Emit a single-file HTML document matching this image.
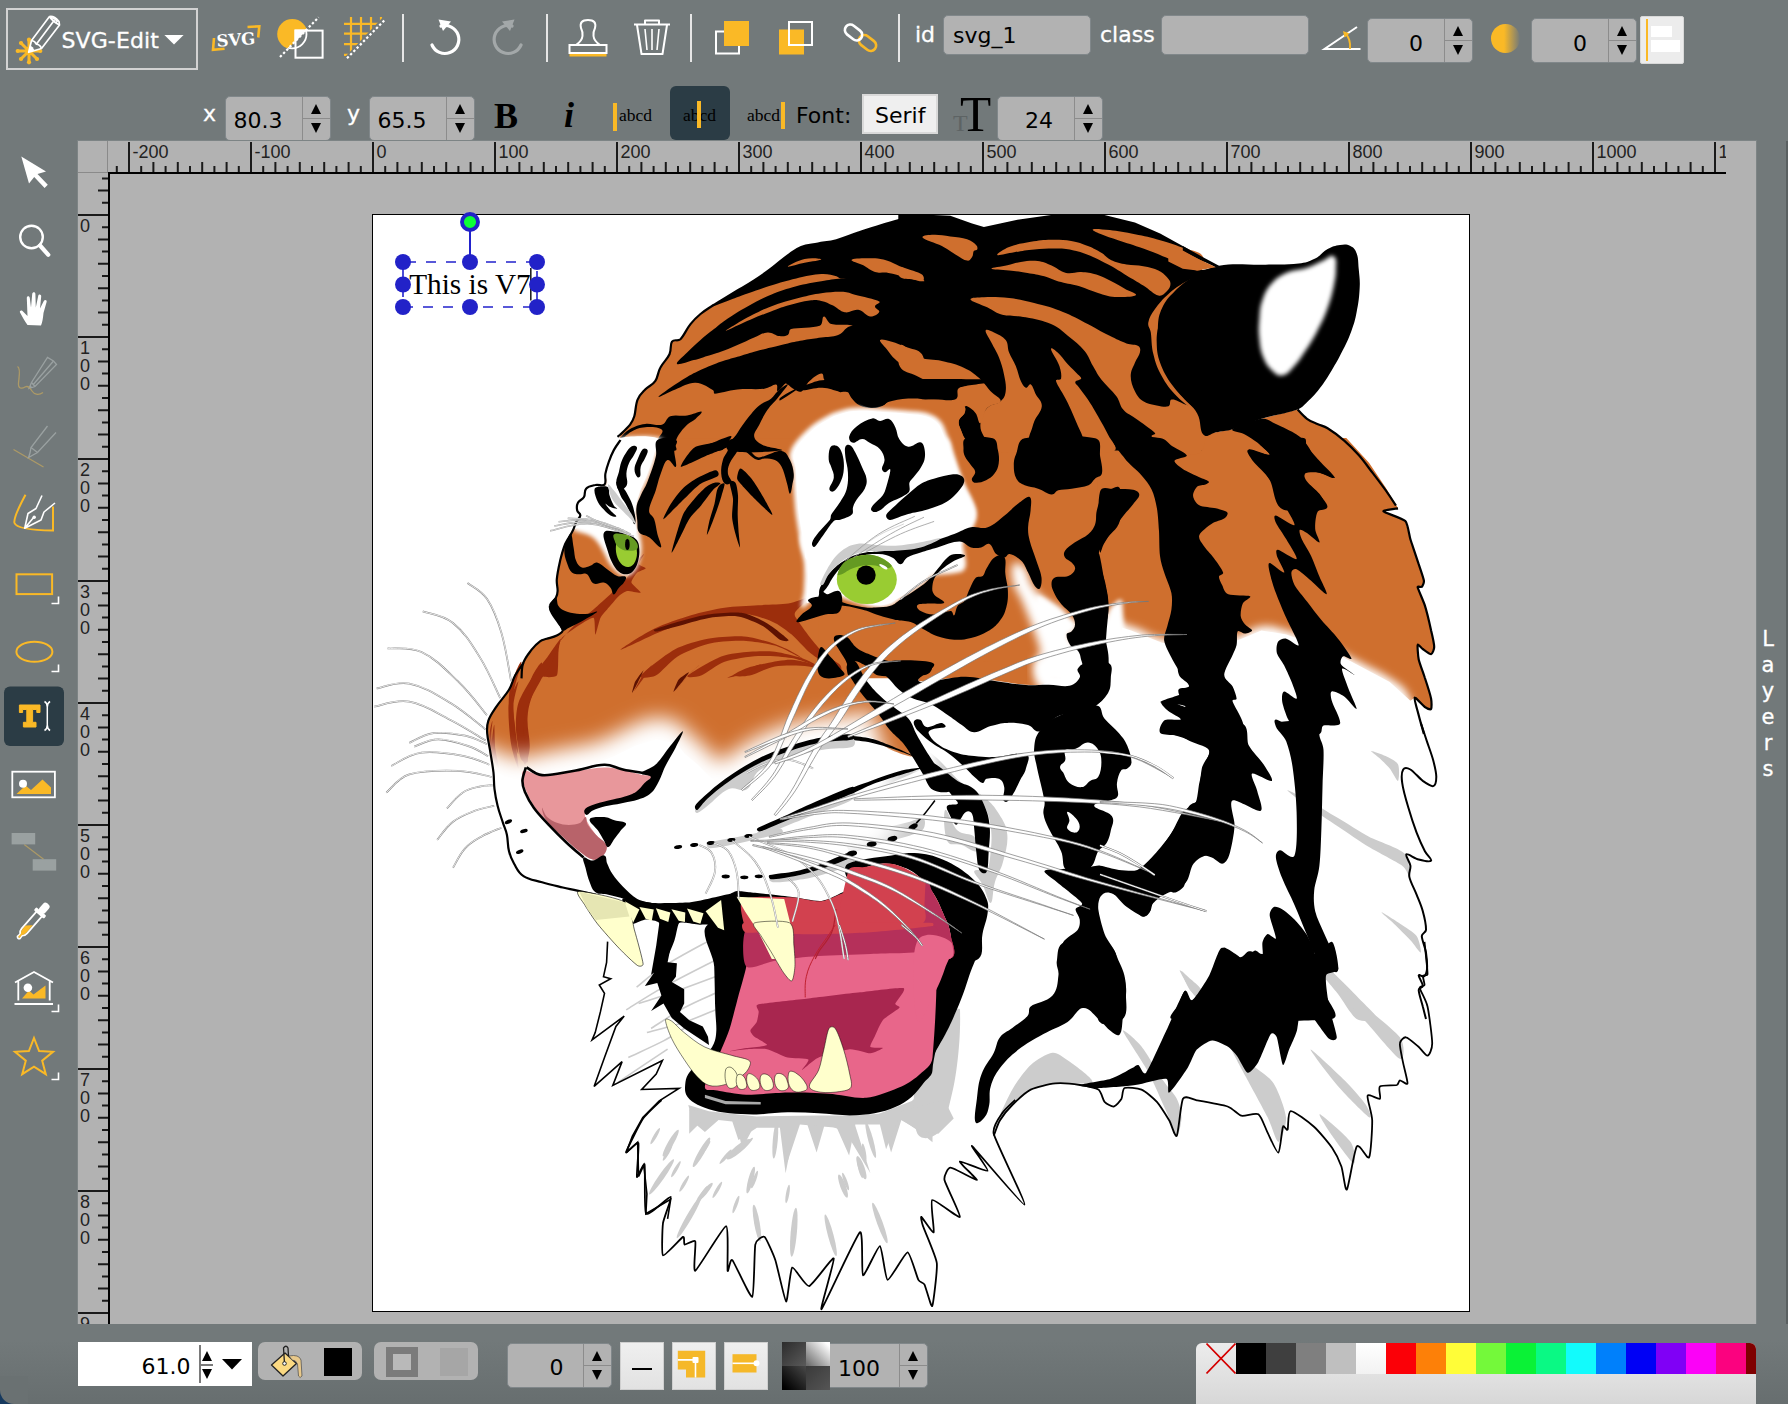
<!DOCTYPE html>
<html><head><meta charset="utf-8"><title>SVG-Edit</title>
<style>
html,body{margin:0;padding:0}
body{width:1788px;height:1404px;overflow:hidden;background:#72797a;font-family:"DejaVu Sans","Liberation Sans",sans-serif;}
#app{position:absolute;left:0;top:0;width:1788px;height:1404px;overflow:hidden;background:#72797a}
.abs{position:absolute}
.rt{font-family:"Liberation Sans",sans-serif;font-size:18px;fill:#222}
#work{position:absolute;left:78px;top:141px;width:1678px;height:1183px;background:#b2b2b2;box-shadow:0 0 0 1px #7d8485}
#corner{position:absolute;left:78px;top:141px;width:30px;height:32px;border-right:1px solid #8a8a8a;border-bottom:1px solid #8a8a8a;box-sizing:border-box}
#rlh{position:absolute;left:108px;top:172px;width:1618px;height:2px;background:#000}
#rlv{position:absolute;left:108px;top:172px;width:2px;height:1152px;background:#000}
#canvas{position:absolute;left:372px;top:214px;width:1098px;height:1098px;background:#fff;box-sizing:border-box;border:1px solid #000;overflow:hidden}
#rightstrip{position:absolute;left:1756px;top:141px;width:30px;height:1183px;background:#72797a;border-left:1px solid #7d8485;box-sizing:border-box}
#redge{position:absolute;left:1786px;top:141px;width:2px;height:1183px;background:#5a6061}
#layers{-webkit-text-stroke:0.3px #fff;position:absolute;left:1756px;top:626px;width:24px;text-align:center;color:#fff;font-size:21px;line-height:26px}
.lbl{position:absolute;-webkit-text-stroke:0.3px #fff;color:#fff;font-size:22px;line-height:26px;white-space:nowrap}
.inp{position:absolute;background:#b2b2b2;border-radius:5px;box-sizing:border-box;border:1px solid #80878a;color:#000;font-size:22px;white-space:nowrap}
.inp span{position:absolute}
.sep{position:absolute;width:2px;background:#e6e6e6;top:14px;height:48px}
.spin{position:absolute;right:0;top:0;bottom:0;width:27px;border-left:1.5px solid #8c8c8c}
.spin:before{content:"";position:absolute;left:0;right:0;top:50%;height:1.5px;margin-top:-1px;background:#8c8c8c}
.spin i{position:absolute;left:8px;width:0;height:0;border-left:5.5px solid transparent;border-right:5.5px solid transparent}
.spin i.u{top:7px;border-bottom:10px solid #000}
.spin i.d{bottom:7px;border-top:10px solid #000}
#pal{position:absolute;left:1196px;top:1343px;width:560px;height:70px;border-radius:6px;background:linear-gradient(#ececec,#d4d4d4);overflow:hidden}
.sw{position:absolute;top:0;height:31px}
.tx{font-family:"Liberation Serif",serif;font-size:17.5px;line-height:20px;color:#000}
.sb{top:1342px;width:44px;height:48px;box-sizing:border-box;background:linear-gradient(#efefef,#e2e2e2);border:1.5px solid #cfcfcf}

</style></head>
<body>
<div id="app">
<!-- main menu -->
<div class="abs" style="left:6px;top:8px;width:192px;height:62px;box-sizing:border-box;border:2px solid #d2d2d2"></div>
<svg class="abs" style="left:10px;top:12px" width="54" height="56" viewBox="10 12 54 56">
<g stroke="#fab926" stroke-width="3" stroke-linecap="round"><path d="M29 51L18 51M29 51L21.2 43.2M29 51L29 40M29 51L36.8 43.2M29 51L40 51M29 51L36.8 58.8M29 51L29 62M29 51L21.2 58.8"/></g>
<g fill="#fab926"><circle cx="40.3" cy="51.0" r="2.1"/><circle cx="37.0" cy="59.0" r="2.1"/><circle cx="29.0" cy="62.3" r="2.1"/><circle cx="21.0" cy="59.0" r="2.1"/><circle cx="17.7" cy="51.0" r="2.1"/><circle cx="21.0" cy="43.0" r="2.1"/><circle cx="29.0" cy="39.7" r="2.1"/><circle cx="37.0" cy="43.0" r="2.1"/></g>
<g fill="#72797a" stroke="#fff" stroke-width="1.7" stroke-linejoin="round"><path d="M28.7 52.3L31.5 40.5L49.5 16.5Q54 15.5 59 21.5L59.5 25L41.5 48.5Z"/><path d="M49.5 16.5Q52 21 59.5 25M31.5 40.5Q35 41 36.3 44.2Q40 44.5 41.5 48.5M36.3 44.2L54.5 20M51 17.5Q55 18 57.5 22"/></g>
<path d="M28.7 52.3L30.3 45.5Q33 46.5 34.5 50.5Z" fill="#fff"/>
</svg>
<div class="lbl" style="left:61.5px;top:28px;font-size:22px;letter-spacing:0.1px">SVG-Edit</div>
<svg class="abs" style="left:164px;top:35px" width="20" height="10"><path d="M0.4 0H19.6L10 9.6Z" fill="#fff"/></svg>
<!-- source icon -->
<svg class="abs" style="left:208px;top:20px" width="56" height="36" viewBox="208 20 56 36">
<path d="M247.5 27L259.3 26.3L258.2 37.5M214 38L213 49.8L224.6 48.7" fill="none" stroke="#fab926" stroke-width="2.6"/>
<text x="216.5" y="45.5" transform="rotate(-4 236 40)" font-family="DejaVu Serif,Liberation Serif,serif" font-weight="bold" font-size="16.5" fill="#fff">SVG</text>
</svg>
<!-- wireframe -->
<svg class="abs" style="left:274px;top:14px" width="54" height="48" viewBox="274 14 54 48">
<defs><clipPath id="wcp"><path d="M274 62L328 6.5V62Z"/></clipPath></defs>
<circle cx="292.3" cy="34.1" r="15.1" fill="#fab926"/>
<path d="M274 63.2L328 7.7V62Z" fill="#72797a"/>
<circle cx="292.3" cy="34.1" r="14.2" fill="none" stroke="#fff" stroke-width="1.8" clip-path="url(#wcp)"/>
<path d="M294.5 29.6H307.3L294.5 42.8Z" fill="#fff"/>
<rect x="295.5" y="30.6" width="27.1" height="27.1" fill="none" stroke="#fff" stroke-width="2"/>
<path d="M280 57L318.6 17.3" stroke="#fff" stroke-width="2.2" stroke-dasharray="2.4 2.2"/>
</svg>
<!-- grid -->
<svg class="abs" style="left:340px;top:14px" width="50" height="48" viewBox="340 14 50 48">
<defs><clipPath id="gcp"><path d="M340 14H386L344 58H340Z"/></clipPath></defs>
<g clip-path="url(#gcp)" stroke="#fab926" stroke-width="2.2" fill="none"><path d="M351 17V62M361 17V62M371 17V62M381 17V62M344 23.8H390M344 33.6H390M344 44.2H390M344 54.8H390"/></g>
<path d="M347 58.2L384.6 20.1" stroke="#fff" stroke-width="2.2" stroke-dasharray="2.4 2.2"/>
</svg>
<div class="sep" style="left:402px"></div><div class="sep" style="left:546px"></div><div class="sep" style="left:690px"></div><div class="sep" style="left:898px"></div>
<!-- undo -->
<svg class="abs" style="left:424px;top:16px" width="44" height="44" viewBox="424 16 44 44">
<path d="M441 26A14 14 0 1 1 432 45" fill="none" stroke="#fff" stroke-width="3.2" stroke-linecap="round"/>
<path d="M438.5 19.5L451 21.5L443 31Z" fill="#fff"/>
</svg>
<!-- redo -->
<svg class="abs" style="left:486px;top:16px" width="44" height="44" viewBox="486 16 44 44">
<path d="M512 26A14 14 0 1 0 521 45" fill="none" stroke="#a3a8a9" stroke-width="3.2" stroke-linecap="round"/>
<path d="M514.5 19.5L502 21.5L510 31Z" fill="#a3a8a9"/>
</svg>
<!-- clone/stamp -->
<svg class="abs" style="left:564px;top:16px" width="48" height="46" viewBox="564 16 48 46">
<path d="M569.5 54H606.5" stroke="#fab926" stroke-width="5"/>
<path d="M569.5 45H606.5V53H569.5Z" fill="#72797a" stroke="#fff" stroke-width="2"/>
<path d="M576 45Q582 41 582.5 36Q583 32 581 28Q579 20 588 20Q597 20 595 28Q593 32 593.5 36Q594 41 600 45" fill="none" stroke="#fff" stroke-width="2"/>
</svg>
<!-- delete -->
<svg class="abs" style="left:630px;top:16px" width="44" height="44" viewBox="630 16 44 44">
<path d="M634 24.5H670M645 24V20.5H659V24M637 25L641.5 54H662.5L667 25" fill="none" stroke="#fff" stroke-width="2" stroke-linejoin="round"/>
<path d="M645 29L647 50M652 29V50M659 29L657 50" stroke="#fff" stroke-width="1.6"/>
</svg>
<!-- move top -->
<svg class="abs" style="left:712px;top:18px" width="40" height="40" viewBox="712 18 40 40">
<rect x="716" y="31.5" width="23" height="22" fill="none" stroke="#fff" stroke-width="2"/>
<rect x="724" y="21" width="25" height="25" fill="#fab926"/>
</svg>
<!-- move bottom -->
<svg class="abs" style="left:776px;top:18px" width="40" height="40" viewBox="776 18 40 40">
<rect x="779" y="29.5" width="25" height="25" fill="#fab926"/>
<rect x="789" y="22" width="23" height="23" fill="none" stroke="#fff" stroke-width="2"/>
</svg>
<!-- link -->
<svg class="abs" style="left:838px;top:18px" width="46" height="40" viewBox="838 18 46 40">
<rect x="-9.5" y="-5.5" width="19" height="11" rx="5.5" transform="translate(867.5 43) rotate(38)" fill="none" stroke="#fab926" stroke-width="2.6"/>
<rect x="-9.5" y="-5.5" width="19" height="11" rx="5.5" transform="translate(853.5 32.5) rotate(38)" fill="none" stroke="#fff" stroke-width="2.6"/>
</svg>
<!-- id / class -->
<div class="lbl" style="left:915px;top:22px">id</div>
<div class="inp" style="left:943px;top:15px;width:148px;height:40px"><span style="left:9px;top:7px">svg_1</span></div>
<div class="lbl" style="left:1100px;top:22px">class</div>
<div class="inp" style="left:1161px;top:15px;width:148px;height:40px"></div>
<!-- angle -->
<svg class="abs" style="left:1320px;top:22px" width="44" height="32" viewBox="1320 22 44 32">
<path d="M1357 27L1324.5 49H1360.5" fill="none" stroke="#fff" stroke-width="2"/>
<path d="M1350 49Q1351 39 1345 33" fill="none" stroke="#fab926" stroke-width="1.8"/><path d="M1343 31L1349.5 33.5L1344.5 37.5Z" fill="#fab926"/>
</svg>
<div class="inp" style="left:1367px;top:18px;width:106px;height:45px"><span style="left:41px;top:11.5px">0</span><div class="spin"><i class="u"></i><i class="d"></i></div></div>
<!-- blur -->
<svg class="abs" style="left:1488px;top:22px" width="36" height="34" viewBox="1488 22 36 34">
<defs><linearGradient id="blg" x1="0" x2="1"><stop offset="0.45" stop-color="#fab926"/><stop offset="1" stop-color="#fab926" stop-opacity="0"/></linearGradient></defs>
<circle cx="1505.5" cy="38.5" r="14.5" fill="url(#blg)"/>
</svg>
<div class="inp" style="left:1531px;top:18px;width:106px;height:45px"><span style="left:41px;top:11.5px">0</span><div class="spin"><i class="u"></i><i class="d"></i></div></div>
<!-- position -->
<div class="abs" style="left:1640px;top:16px;width:44px;height:48px;background:#ececec;border:1px solid #d8d8d8;box-sizing:border-box;border-radius:2px">
<div class="abs" style="left:5px;top:2px;width:2px;height:42px;background:#fab926"></div>
<div class="abs" style="left:10px;top:9px;width:21px;height:11px;background:#fff"></div>
<div class="abs" style="left:10px;top:23px;width:29px;height:12px;background:#fff"></div>
</div>
<!-- row 2 -->
<div class="lbl" style="left:203px;top:100.5px">x</div>
<div class="inp" style="left:225px;top:96px;width:106px;height:45px"><span style="left:7.5px;top:11px">80.3</span><div class="spin"><i class="u"></i><i class="d"></i></div></div>
<div class="lbl" style="left:347px;top:100.5px">y</div>
<div class="inp" style="left:369px;top:96px;width:106px;height:45px"><span style="left:7.5px;top:11px">65.5</span><div class="spin"><i class="u"></i><i class="d"></i></div></div>
<div class="abs" style="left:494px;top:94px;font-family:'Liberation Serif',serif;font-weight:bold;font-size:36px;line-height:44px;color:#000">B</div>
<div class="abs" style="left:564px;top:93px;font-family:'Liberation Serif',serif;font-weight:bold;font-style:italic;font-size:36px;line-height:44px;color:#000">i</div>
<div class="abs" style="left:613px;top:103px;width:4px;height:28px;background:#fab926"></div>
<div class="abs tx" style="left:619px;top:105px">abcd</div>
<div class="abs" style="left:670px;top:86px;width:60px;height:54px;background:#2b3c45;border-radius:6px"></div>
<div class="abs tx" style="left:683px;top:105px">abcd</div>
<div class="abs" style="left:697px;top:101px;width:4px;height:27px;background:#fab926"></div>
<div class="abs tx" style="left:747px;top:105px">abcd</div>
<div class="abs" style="left:781px;top:102px;width:4px;height:27px;background:#fab926"></div>
<div class="abs" style="left:796px;top:103px;font-size:22px;line-height:26px;color:#000">Font:</div>
<div class="abs" style="left:862px;top:94px;width:76px;height:40px;box-sizing:border-box;background:#efefef;border:2px solid #d9d9d9;color:#000;font-size:22px;line-height:26px"><span class="abs" style="left:11px;top:7px">Serif</span></div>
<div class="abs" style="left:953px;top:111px;font-family:'Liberation Serif',serif;font-size:24px;line-height:24px;color:#5d6364">T</div>
<div class="abs" style="left:960px;top:86px;font-family:'Liberation Serif',serif;font-size:51px;line-height:56px;color:#000">T</div>
<div class="inp" style="left:997px;top:96px;width:106px;height:45px"><span style="left:27px;top:11px">24</span><div class="spin"><i class="u"></i><i class="d"></i></div></div>

<svg class="abs" style="left:0;top:141px" width="78" height="960" viewBox="0 141 78 960">
<path d="M21.3 156.5L46 171.5L37.5 174L47.8 184.8L44.6 188L34.2 177L29 183.6Z" fill="#fff"/>
<circle cx="31.5" cy="237" r="11.3" fill="none" stroke="#fff" stroke-width="2.4"/><path d="M40 245.5L48.3 254.8" stroke="#fff" stroke-width="4.2" stroke-linecap="round"/>
<path d="M27.5 325C24 320 22 316 20 312.5C19.3 311 21 309.8 22.5 311L27.5 316L26.8 298C26.8 295.8 29.6 295.8 29.8 298L31 307.5L32.2 294C32.4 291.8 35.4 291.8 35.4 294L35.8 307.5L38.2 296C38.6 293.8 41.4 294.3 41.2 296.5L40 308.5L43.8 301C44.8 299 47.3 300 46.6 302L43.5 313C43 318 42.5 322 41 325.5Z" fill="#fff"/>
<g fill="none" stroke="#9aa1a1" stroke-width="1.3"><path d="M31.5 382.5L29 388.5L35 386.5L56.5 364.5L53.5 361L47.5 357.5Z"/><path d="M35 386.5L31.5 382.5M33.3 384.5L53.5 361" /></g><path d="M17.5 366.5C21 368 19 377 18.5 383C18 389 22 389 25 387C28 385 30 388 32 391C34 394 38 396 43 392.5" fill="none" stroke="#ad9a66" stroke-width="1.3"/><path d="M29 388.5L30.3 385L32.3 387.4Z" fill="#9aa1a1"/>
<path d="M13.5 449.5L43.5 467" stroke="#ad9a66" stroke-width="1.3"/><g fill="none" stroke="#9aa1a1" stroke-width="1.3"><path d="M47.5 426L31 447.5L30 453L28.5 457.5L33 455L37.5 452.5L56 432.5"/><path d="M31 447.5L37.5 452.5"/></g>
<path d="M25.5 494.7Q13 518 14.5 523Q17 530 53 530.5L53 506.5" fill="none" stroke="#fab926" stroke-width="2"/><path d="M42 495.5L36 508.5L28 513.5L24.7 528.2L41 520L44 512L55 503M24.7 528.2L34 517" fill="none" stroke="#fff" stroke-width="1.6" stroke-linejoin="round"/><circle cx="34.2" cy="517.2" r="1.7" fill="#fff"/>
<rect x="16.5" y="574.3" width="35.6" height="19.8" fill="none" stroke="#fab926" stroke-width="2"/>
<path d="M51.5 603.5H58.5V596.5" fill="none" stroke="#fff" stroke-width="1.6"/>
<ellipse cx="34.4" cy="651.8" rx="18" ry="10" fill="none" stroke="#fab926" stroke-width="2"/>
<path d="M51.5 671.5H58.5V664.5" fill="none" stroke="#fff" stroke-width="1.6"/>
<rect x="4" y="686.5" width="60" height="59.5" rx="6" fill="#2b3c45"/>
<path d="M19.4 705H40V712.5H36.8V709.5H32.6V722.3H36V727H23.4V722.3H26.8V709.5H22.6V712.5H19.4Z" fill="#fab926" stroke="#fab926" stroke-width="1" stroke-linejoin="round"/>
<path d="M44.5 701.5Q47.3 703 47.3 707V725Q47.3 729 44.5 730.5M50.1 701.5Q47.3 703 47.3 707M47.3 725Q47.3 729 50.1 730.5" fill="none" stroke="#fff" stroke-width="1.5"/>
<rect x="12.3" y="771.7" width="42.6" height="25.6" fill="none" stroke="#fff" stroke-width="1.8"/><path d="M16.5 794L25.5 785.5L31 790L42.5 779.5L51 787.5V794Z" fill="#fab926"/><circle cx="23" cy="783.8" r="4" fill="#fff"/>
<path d="M24.2 844.4L43.6 859.2" stroke="#ad9a66" stroke-width="1.2"/><rect x="11.6" y="833" width="23.6" height="11.4" fill="#9aa1a1"/><rect x="32.7" y="859.2" width="23.5" height="11.4" fill="#9aa1a1"/>
<g transform="translate(33.5 920.5) rotate(41)"><path d="M-3.6 -9L-3.6 14Q-3.6 17 -1.2 19L-1.6 22.5Q0 24.5 1.6 22.5L1.2 19Q3.6 17 3.6 14L3.6 -9Z" fill="#72797a" stroke="#fff" stroke-width="1.8" stroke-linejoin="round"/><path d="M-2.6 9L2.6 4V14Q2.6 16.5 0.8 18.5L1 22Q0 23 -1 22L-0.8 18.5Q-2.6 16.5 -2.6 14Z" fill="#fab926"/><rect x="-6.6" y="-12" width="13.2" height="4" rx="1.2" fill="#fff"/><rect x="-3.8" y="-22" width="7.6" height="11" rx="3" fill="#fff"/></g>
<path d="M15 982.5L34 972L53 982.5M18.3 981V1000.5M49.7 981V1000.5M14.5 1004H53" fill="none" stroke="#fff" stroke-width="1.8" stroke-linejoin="round"/><path d="M22 998.5L29 990.5L33.5 994.5L45.5 985.5V998.5Z" fill="#fab926"/><circle cx="27.9" cy="987.7" r="4.3" fill="#fff"/>
<path d="M51.5 1011.5H58.5V1004.5" fill="none" stroke="#fff" stroke-width="1.6"/>
<path d="M34.0 1038.0L39.1 1051.0L53.0 1051.8L42.2 1060.7L45.8 1074.2L34.0 1066.6L22.2 1074.2L25.8 1060.7L15.0 1051.8L28.9 1051.0Z" fill="none" stroke="#fab926" stroke-width="2" stroke-linejoin="miter"/>
<path d="M51.5 1079.5H58.5V1072.5" fill="none" stroke="#fff" stroke-width="1.6"/>
</svg>
<div id="work"></div>
<div id="corner"></div>
<svg class="abs" style="left:78px;top:141px" width="1648" height="33" viewBox="78 141 1648 33">
<path d="M116.8 166V172 M129.0 142V172 M141.2 166V172 M153.4 162V172 M165.6 166V172 M177.8 162V172 M190.0 166V172 M202.2 162V172 M214.4 166V172 M226.6 162V172 M238.8 166V172 M251.0 142V172 M263.2 166V172 M275.4 162V172 M287.6 166V172 M299.8 162V172 M312.0 166V172 M324.2 162V172 M336.4 166V172 M348.6 162V172 M360.8 166V172 M373.0 142V172 M385.2 166V172 M397.4 162V172 M409.6 166V172 M421.8 162V172 M434.0 166V172 M446.2 162V172 M458.4 166V172 M470.6 162V172 M482.8 166V172 M495.0 142V172 M507.2 166V172 M519.4 162V172 M531.6 166V172 M543.8 162V172 M556.0 166V172 M568.2 162V172 M580.4 166V172 M592.6 162V172 M604.8 166V172 M617.0 142V172 M629.2 166V172 M641.4 162V172 M653.6 166V172 M665.8 162V172 M678.0 166V172 M690.2 162V172 M702.4 166V172 M714.6 162V172 M726.8 166V172 M739.0 142V172 M751.2 166V172 M763.4 162V172 M775.6 166V172 M787.8 162V172 M800.0 166V172 M812.2 162V172 M824.4 166V172 M836.6 162V172 M848.8 166V172 M861.0 142V172 M873.2 166V172 M885.4 162V172 M897.6 166V172 M909.8 162V172 M922.0 166V172 M934.2 162V172 M946.4 166V172 M958.6 162V172 M970.8 166V172 M983.0 142V172 M995.2 166V172 M1007.4 162V172 M1019.6 166V172 M1031.8 162V172 M1044.0 166V172 M1056.2 162V172 M1068.4 166V172 M1080.6 162V172 M1092.8 166V172 M1105.0 142V172 M1117.2 166V172 M1129.4 162V172 M1141.6 166V172 M1153.8 162V172 M1166.0 166V172 M1178.2 162V172 M1190.4 166V172 M1202.6 162V172 M1214.8 166V172 M1227.0 142V172 M1239.2 166V172 M1251.4 162V172 M1263.6 166V172 M1275.8 162V172 M1288.0 166V172 M1300.2 162V172 M1312.4 166V172 M1324.6 162V172 M1336.8 166V172 M1349.0 142V172 M1361.2 166V172 M1373.4 162V172 M1385.6 166V172 M1397.8 162V172 M1410.0 166V172 M1422.2 162V172 M1434.4 166V172 M1446.6 162V172 M1458.8 166V172 M1471.0 142V172 M1483.2 166V172 M1495.4 162V172 M1507.6 166V172 M1519.8 162V172 M1532.0 166V172 M1544.2 162V172 M1556.4 166V172 M1568.6 162V172 M1580.8 166V172 M1593.0 142V172 M1605.2 166V172 M1617.4 162V172 M1629.6 166V172 M1641.8 162V172 M1654.0 166V172 M1666.2 162V172 M1678.4 166V172 M1690.6 162V172 M1702.8 166V172 M1715.0 142V172" stroke="#1a1a1a" stroke-width="2" fill="none"/>
<text x="132.5" y="157.7" class="rt">-200</text>
<text x="254.5" y="157.7" class="rt">-100</text>
<text x="376.5" y="157.7" class="rt">0</text>
<text x="498.5" y="157.7" class="rt">100</text>
<text x="620.5" y="157.7" class="rt">200</text>
<text x="742.5" y="157.7" class="rt">300</text>
<text x="864.5" y="157.7" class="rt">400</text>
<text x="986.5" y="157.7" class="rt">500</text>
<text x="1108.5" y="157.7" class="rt">600</text>
<text x="1230.5" y="157.7" class="rt">700</text>
<text x="1352.5" y="157.7" class="rt">800</text>
<text x="1474.5" y="157.7" class="rt">900</text>
<text x="1596.5" y="157.7" class="rt">1000</text>
<text x="1718.5" y="157.7" class="rt">1</text>
</svg>
<svg class="abs" style="left:78px;top:174px" width="32" height="1150" viewBox="78 174 32 1150">
<path d="M102 178.4H108 M98 190.6H108 M102 202.8H108 M78 215.0H108 M102 227.2H108 M98 239.4H108 M102 251.6H108 M98 263.8H108 M102 276.0H108 M98 288.2H108 M102 300.4H108 M98 312.6H108 M102 324.8H108 M78 337.0H108 M102 349.2H108 M98 361.4H108 M102 373.6H108 M98 385.8H108 M102 398.0H108 M98 410.2H108 M102 422.4H108 M98 434.6H108 M102 446.8H108 M78 459.0H108 M102 471.2H108 M98 483.4H108 M102 495.6H108 M98 507.8H108 M102 520.0H108 M98 532.2H108 M102 544.4H108 M98 556.6H108 M102 568.8H108 M78 581.0H108 M102 593.2H108 M98 605.4H108 M102 617.6H108 M98 629.8H108 M102 642.0H108 M98 654.2H108 M102 666.4H108 M98 678.6H108 M102 690.8H108 M78 703.0H108 M102 715.2H108 M98 727.4H108 M102 739.6H108 M98 751.8H108 M102 764.0H108 M98 776.2H108 M102 788.4H108 M98 800.6H108 M102 812.8H108 M78 825.0H108 M102 837.2H108 M98 849.4H108 M102 861.6H108 M98 873.8H108 M102 886.0H108 M98 898.2H108 M102 910.4H108 M98 922.6H108 M102 934.8H108 M78 947.0H108 M102 959.2H108 M98 971.4H108 M102 983.6H108 M98 995.8H108 M102 1008.0H108 M98 1020.2H108 M102 1032.4H108 M98 1044.6H108 M102 1056.8H108 M78 1069.0H108 M102 1081.2H108 M98 1093.4H108 M102 1105.6H108 M98 1117.8H108 M102 1130.0H108 M98 1142.2H108 M102 1154.4H108 M98 1166.6H108 M102 1178.8H108 M78 1191.0H108 M102 1203.2H108 M98 1215.4H108 M102 1227.6H108 M98 1239.8H108 M102 1252.0H108 M98 1264.2H108 M102 1276.4H108 M98 1288.6H108 M102 1300.8H108 M78 1313.0H108" stroke="#1a1a1a" stroke-width="2" fill="none"/>
<text x="80" y="232.0" class="rt">0</text>
<text x="80" y="354.0" class="rt">1</text>
<text x="80" y="372.2" class="rt">0</text>
<text x="80" y="390.4" class="rt">0</text>
<text x="80" y="476.0" class="rt">2</text>
<text x="80" y="494.2" class="rt">0</text>
<text x="80" y="512.4" class="rt">0</text>
<text x="80" y="598.0" class="rt">3</text>
<text x="80" y="616.2" class="rt">0</text>
<text x="80" y="634.4" class="rt">0</text>
<text x="80" y="720.0" class="rt">4</text>
<text x="80" y="738.2" class="rt">0</text>
<text x="80" y="756.4" class="rt">0</text>
<text x="80" y="842.0" class="rt">5</text>
<text x="80" y="860.2" class="rt">0</text>
<text x="80" y="878.4" class="rt">0</text>
<text x="80" y="964.0" class="rt">6</text>
<text x="80" y="982.2" class="rt">0</text>
<text x="80" y="1000.4" class="rt">0</text>
<text x="80" y="1086.0" class="rt">7</text>
<text x="80" y="1104.2" class="rt">0</text>
<text x="80" y="1122.4" class="rt">0</text>
<text x="80" y="1208.0" class="rt">8</text>
<text x="80" y="1226.2" class="rt">0</text>
<text x="80" y="1244.4" class="rt">0</text>
<text x="80" y="1330.0" class="rt">9</text>
</svg>
<div id="rlh"></div><div id="rlv"></div>
<div id="canvas">
<svg class="abs" style="left:0;top:0" width="1096" height="1096" viewBox="373 215 1096 1096">
<defs><filter id="bl4" x="-20%" y="-20%" width="140%" height="140%"><feGaussianBlur stdDeviation="4"/></filter><filter id="bl2" x="-20%" y="-20%" width="140%" height="140%"><feGaussianBlur stdDeviation="2"/></filter><filter id="bl10" x="-30%" y="-30%" width="160%" height="160%"><feGaussianBlur stdDeviation="10"/></filter><filter id="bl7" x="-20%" y="-20%" width="140%" height="140%"><feGaussianBlur stdDeviation="7"/></filter></defs>
<g id="Lshadow">
<path d="M918.3 744.7C922.0 745.9 929.7 751.8 936.9 758.1C945.6 765.8 952.2 775.1 961.8 783.0C970.5 790.2 977.1 791.2 984.5 797.5C991.6 803.4 994.5 806.6 999.0 814.0C1003.6 821.5 1006.5 825.4 1007.3 834.7C1008.1 844.2 1005.6 852.1 1003.1 861.6C1000.8 870.7 997.4 874.0 994.9 882.3C992.4 890.6 993.2 902.6 990.7 903.0C988.2 903.4 985.8 890.6 982.5 884.4C979.5 878.8 974.8 874.9 974.2 872.0C973.7 869.7 977.0 869.9 979.3 869.9C981.8 869.9 984.9 874.7 986.6 872.0C988.9 868.2 989.9 860.1 990.7 851.3C991.6 842.2 992.0 835.5 990.7 826.4C989.5 817.4 987.8 813.2 984.5 805.7C981.2 798.3 979.6 794.1 974.2 789.2C968.8 784.2 964.1 785.1 957.6 780.9C950.6 776.3 946.9 772.2 939.0 766.4C931.1 760.6 922.4 756.3 918.3 751.9C916.2 749.7 915.4 743.7 918.3 744.7Z" fill="#ccc"/>
<path d="M945.2 809.9C947.3 807.8 951.8 825.2 957.6 830.6C963.1 835.6 970.4 832.6 974.2 836.8C977.9 840.9 978.7 849.6 976.2 851.3C973.8 852.9 967.5 847.1 961.8 845.0C956.0 843.0 950.0 846.6 947.3 840.9C944.0 833.9 943.1 811.9 945.2 809.9Z" fill="#ccc"/>
<path d="M850.0 797.5C854.1 795.0 862.2 793.2 870.7 789.2C879.4 785.0 883.5 780.7 893.5 776.8C903.4 772.8 920.8 768.3 920.4 769.5C920.0 770.8 901.3 778.2 891.4 783.0C882.6 787.2 879.0 789.6 870.7 793.3C862.4 797.0 854.1 800.8 850.0 801.6C848.3 801.9 848.5 798.3 850.0 797.5Z" fill="#ccc"/>
<path d="M850.0 834.7C856.2 830.1 869.5 831.0 881.0 828.5C892.4 826.1 899.7 824.4 907.9 822.3C914.1 820.8 919.1 817.3 922.4 818.1C925.7 819.0 925.3 823.5 924.5 826.4C923.7 829.3 921.7 831.2 918.3 832.6C911.7 835.5 900.9 838.0 891.4 840.9C882.7 843.6 879.0 845.0 870.7 847.1C862.4 849.2 854.1 853.7 850.0 851.3C845.9 848.8 844.4 838.8 850.0 834.7Z" fill="#ccc"/>
<path d="M1371.1 750.9C1371.9 750.6 1382.0 754.2 1385.6 756.0C1389.2 757.8 1396.4 761.0 1398.0 764.3C1399.7 767.6 1399.1 780.3 1398.0 780.9C1396.9 781.4 1392.2 771.5 1389.7 768.5C1387.3 765.4 1381.9 760.5 1379.4 758.1C1376.9 755.8 1370.3 751.1 1371.1 750.9Z" fill="#ccc"/>
<path d="M1287.3 790.2C1287.3 789.4 1300.2 795.8 1307.0 799.5C1313.7 803.2 1329.7 813.2 1338.0 818.1C1346.3 823.1 1360.2 832.1 1369.0 836.8C1377.9 841.4 1398.8 848.1 1404.2 853.3C1409.6 858.6 1409.7 874.4 1409.4 876.1C1409.1 877.7 1406.5 868.8 1402.2 865.7C1396.8 861.9 1377.6 852.3 1369.0 847.1C1360.5 841.9 1346.3 831.9 1338.0 826.4C1329.7 820.9 1313.7 810.5 1307.0 805.7C1300.2 800.9 1287.3 791.0 1287.3 790.2Z" fill="#ccc"/>
<path d="M1381.5 912.3C1382.3 912.3 1395.4 920.5 1400.1 923.7C1404.8 926.8 1413.9 932.2 1416.6 936.1C1419.4 940.0 1421.6 952.1 1420.8 952.6C1420.0 953.2 1414.0 944.1 1410.4 940.2C1406.8 936.4 1397.7 927.4 1393.9 923.7C1390.0 920.0 1380.6 912.3 1381.5 912.3Z" fill="#ccc"/>
<path d="M1315.2 955.8C1316.9 955.8 1328.1 967.7 1333.9 973.3C1339.7 979.0 1352.9 992.1 1358.7 998.2C1364.5 1004.2 1377.6 1016.1 1377.3 1018.9C1377.0 1021.6 1361.9 1022.2 1356.6 1018.9C1351.4 1015.6 1342.7 1000.1 1338.0 994.0C1333.3 988.0 1324.5 978.4 1321.4 973.3C1318.4 968.2 1313.6 955.8 1315.2 955.8Z" fill="#ccc"/>
<path d="M1179.7 970.2C1180.2 969.7 1188.2 976.9 1191.1 979.6C1194.0 982.2 1200.9 987.7 1201.4 989.9C1202.0 992.1 1197.1 996.9 1195.2 996.1C1193.3 995.3 1189.0 987.1 1186.9 983.7C1184.9 980.2 1179.1 970.8 1179.7 970.2Z" fill="#ccc"/>
<path d="M688.3 1105.0L709.0 1111.3L756.6 1116.4L818.7 1115.4L874.6 1115.4L911.8 1100.9L932.5 1082.3L932.5 1142.3L920.1 1132.0L901.5 1119.5L891.1 1152.6L882.8 1123.7L853.9 1121.6L870.4 1173.3L845.6 1132.0L824.9 1123.7L816.6 1152.6L806.3 1121.6L795.9 1121.6L785.6 1173.3L779.4 1123.7L756.6 1121.6L742.1 1148.5L735.9 1119.5L721.4 1117.5L704.9 1132.0L692.5 1121.6Z" fill="#ccc"/>
<path d="M636.6 987.1C642.0 982.9 651.4 974.0 663.5 966.4C679.2 956.5 704.9 943.2 715.2 937.4" fill="none" stroke="#ccc" stroke-width="1.6"/>
<path d="M626.2 1009.9C633.7 1005.3 647.5 996.0 663.5 987.1C681.3 977.2 704.9 965.6 715.2 960.2" fill="none" stroke="#ccc" stroke-width="1.6"/>
<path d="M638.6 1003.6C646.1 1001.2 660.6 996.6 675.9 991.2C691.2 985.8 707.4 979.6 715.2 976.7" fill="none" stroke="#ccc" stroke-width="1.6"/>
<path d="M651.1 1028.5C657.7 1024.3 671.3 1014.8 684.2 1007.8C696.8 1000.9 709.0 996.2 715.2 993.3" fill="none" stroke="#ccc" stroke-width="1.6"/>
<path d="M646.9 1032.6C654.4 1030.5 670.5 1026.8 684.2 1022.3C697.5 1017.8 709.0 1012.3 715.2 1009.9" fill="none" stroke="#ccc" stroke-width="1.6"/>
<path d="M628.3 1057.5C635.3 1054.1 652.3 1046.7 663.5 1040.9C672.5 1036.2 680.0 1031.0 684.2 1028.5" fill="none" stroke="#ccc" stroke-width="1.6"/>
<path d="M617.9 1082.3C622.9 1079.0 632.8 1072.4 642.8 1065.7C652.7 1059.1 662.6 1052.5 667.6 1049.2" fill="none" stroke="#ccc" stroke-width="1.6"/>
<ellipse cx="655.2" cy="1136.1" rx="9.3" ry="1.7" fill="#ccc" transform="rotate(-60 655.2 1136.1)" />
<ellipse cx="667.6" cy="1152.6" rx="9.3" ry="1.7" fill="#ccc" transform="rotate(-60 667.6 1152.6)" />
<ellipse cx="704.9" cy="1148.5" rx="9.3" ry="1.7" fill="#ccc" transform="rotate(-55 704.9 1148.5)" />
<ellipse cx="725.6" cy="1156.8" rx="9.3" ry="1.7" fill="#ccc" transform="rotate(-50 725.6 1156.8)" />
<ellipse cx="746.3" cy="1144.4" rx="9.3" ry="1.7" fill="#ccc" transform="rotate(-45 746.3 1144.4)" />
<ellipse cx="754.5" cy="1179.6" rx="9.3" ry="1.7" fill="#ccc" transform="rotate(-70 754.5 1179.6)" />
<ellipse cx="717.3" cy="1189.9" rx="9.3" ry="1.7" fill="#ccc" transform="rotate(-60 717.3 1189.9)" />
<ellipse cx="702.8" cy="1194.0" rx="9.3" ry="1.7" fill="#ccc" transform="rotate(-60 702.8 1194.0)" />
<ellipse cx="845.6" cy="1181.6" rx="9.3" ry="1.7" fill="#ccc" transform="rotate(70 845.6 1181.6)" />
<ellipse cx="860.1" cy="1169.2" rx="9.3" ry="1.7" fill="#ccc" transform="rotate(75 860.1 1169.2)" />
<ellipse cx="864.2" cy="1152.6" rx="9.3" ry="1.7" fill="#ccc" transform="rotate(80 864.2 1152.6)" />
<ellipse cx="684.2" cy="1183.7" rx="9.3" ry="1.7" fill="#ccc" transform="rotate(-60 684.2 1183.7)" />
<ellipse cx="675.9" cy="1169.2" rx="9.3" ry="1.7" fill="#ccc" transform="rotate(-60 675.9 1169.2)" />
<ellipse cx="735.9" cy="1204.4" rx="9.3" ry="1.7" fill="#ccc" transform="rotate(-70 735.9 1204.4)" />
<ellipse cx="787.6" cy="1194.0" rx="9.3" ry="1.7" fill="#ccc" transform="rotate(-80 787.6 1194.0)" />
<path d="M960.0 1009.6C960.3 1018.2 960.3 1034.8 958.4 1052.7C956.6 1070.5 954.8 1082.8 950.8 1098.8C947.1 1113.5 945.2 1125.9 938.5 1132.6C932.1 1139.0 920.1 1141.1 916.9 1132.6C912.6 1120.9 912.6 1091.4 916.9 1074.2C920.5 1059.9 930.7 1059.0 938.5 1046.5C946.5 1033.6 952.6 1017.0 956.9 1009.6C957.6 1008.5 959.9 1008.3 960.0 1009.6Z" fill="#ccc"/>
<path d="M993.8 1129.6C993.8 1127.5 1007.4 1098.2 1012.3 1089.6C1017.2 1081.0 1025.4 1069.9 1030.7 1065.0C1036.1 1060.0 1047.3 1053.3 1052.3 1052.7C1057.2 1052.0 1062.3 1056.5 1067.6 1060.3C1073.0 1064.2 1093.9 1078.8 1092.3 1081.9C1090.6 1085.0 1063.5 1082.4 1055.3 1083.4C1047.1 1084.4 1036.5 1086.7 1030.7 1089.6C1025.0 1092.4 1017.2 1099.6 1012.3 1105.0C1007.4 1110.3 993.8 1131.6 993.8 1129.6Z" fill="#ccc"/>
<path d="M1181.5 971.1C1182.3 970.7 1193.6 984.2 1196.8 988.1C1200.1 992.0 1206.9 1000.0 1206.1 1000.4C1205.2 1000.8 1194.0 995.0 1190.7 991.1C1187.4 987.2 1180.6 971.6 1181.5 971.1Z" fill="#ccc"/>
<path d="M1123.0 1031.1C1122.2 1027.8 1136.1 1039.9 1141.5 1046.5C1146.8 1053.1 1158.3 1073.4 1163.0 1080.3C1167.7 1087.3 1174.4 1093.9 1176.8 1098.8C1179.3 1103.7 1181.5 1112.3 1181.5 1117.3C1181.5 1122.2 1178.9 1136.5 1176.8 1135.7C1174.8 1134.9 1170.0 1119.7 1166.1 1111.1C1162.2 1102.5 1153.4 1081.8 1147.6 1071.1C1141.9 1060.5 1123.8 1034.4 1123.0 1031.1Z" fill="#ccc"/>
<path d="M1230.7 1046.5C1231.5 1044.9 1246.5 1060.0 1252.2 1065.0C1257.9 1069.9 1269.2 1076.4 1273.7 1083.4C1278.2 1090.4 1285.4 1109.5 1286.0 1117.3C1286.7 1125.0 1280.8 1141.9 1278.4 1141.9C1275.9 1141.9 1271.9 1125.9 1267.6 1117.3C1263.3 1108.6 1251.0 1086.7 1246.1 1077.3C1241.1 1067.8 1229.9 1048.1 1230.7 1046.5Z" fill="#ccc"/>
<path d="M1316.8 957.3C1319.7 958.9 1339.6 983.6 1350.6 994.2C1361.7 1004.9 1393.3 1028.7 1399.9 1037.3C1405.3 1044.5 1404.4 1060.9 1399.9 1058.8C1395.3 1056.8 1375.4 1032.2 1366.0 1021.9C1356.6 1011.6 1335.7 990.5 1329.1 981.9C1322.5 973.3 1313.9 955.7 1316.8 957.3Z" fill="#ccc"/>
<path d="M1310.6 1049.6C1311.5 1048.8 1337.1 1073.0 1344.5 1080.3C1351.9 1087.7 1362.7 1100.0 1366.0 1105.0C1369.0 1109.4 1372.8 1119.7 1369.1 1117.3C1365.4 1114.8 1346.1 1095.5 1338.3 1086.5C1330.5 1077.5 1309.8 1050.4 1310.6 1049.6Z" fill="#ccc"/>
<path d="M1319.9 1114.2C1322.3 1115.0 1346.1 1135.3 1350.6 1141.9C1355.1 1148.4 1356.2 1164.2 1353.7 1163.4C1351.3 1162.6 1336.7 1142.3 1332.2 1135.7C1327.7 1129.1 1317.4 1113.4 1319.9 1114.2Z" fill="#ccc"/>
<ellipse cx="670.7" cy="1143.1" rx="15.4" ry="2.8" fill="#ccc" transform="rotate(-60 670.7 1143.1)" />
<ellipse cx="701.5" cy="1152.3" rx="16.9" ry="2.8" fill="#ccc" transform="rotate(-60 701.5 1152.3)" />
<ellipse cx="738.4" cy="1149.2" rx="15.4" ry="3.7" fill="#ccc" transform="rotate(-40 738.4 1149.2)" />
<ellipse cx="750.7" cy="1180.0" rx="13.8" ry="2.5" fill="#ccc" transform="rotate(-75 750.7 1180.0)" />
<ellipse cx="704.6" cy="1192.3" rx="12.3" ry="2.5" fill="#ccc" transform="rotate(-50 704.6 1192.3)" />
<ellipse cx="861.4" cy="1167.7" rx="12.3" ry="3.1" fill="#ccc" transform="rotate(70 861.4 1167.7)" />
<ellipse cx="843.0" cy="1186.1" rx="12.3" ry="2.8" fill="#ccc" transform="rotate(70 843.0 1186.1)" />
<ellipse cx="661.5" cy="1176.9" rx="21.5" ry="2.8" fill="#ccc" transform="rotate(-55 661.5 1176.9)" />
<ellipse cx="689.2" cy="1216.9" rx="24.6" ry="2.8" fill="#ccc" transform="rotate(-60 689.2 1216.9)" />
<ellipse cx="756.9" cy="1223.0" rx="18.5" ry="2.8" fill="#ccc" transform="rotate(80 756.9 1223.0)" />
<ellipse cx="793.8" cy="1232.3" rx="24.6" ry="3.1" fill="#ccc" transform="rotate(-85 793.8 1232.3)" />
<ellipse cx="830.7" cy="1235.3" rx="21.5" ry="2.8" fill="#ccc" transform="rotate(75 830.7 1235.3)" />
<ellipse cx="879.9" cy="1223.0" rx="21.5" ry="2.8" fill="#ccc" transform="rotate(70 879.9 1223.0)" />
<ellipse cx="870.7" cy="1140.0" rx="18.5" ry="2.5" fill="#ccc" transform="rotate(75 870.7 1140.0)" />
<ellipse cx="775.3" cy="1140.0" rx="18.5" ry="2.5" fill="#ccc" transform="rotate(-85 775.3 1140.0)" />
<path d="M689.2 1109.2L744.6 1118.5L836.8 1116.9L898.4 1112.3L944.5 1100.0L953.7 1118.5L938.3 1133.8L919.9 1130.8L898.4 1118.5L886.1 1149.2L879.9 1124.6L855.3 1124.6L849.1 1155.4L836.8 1127.7L799.9 1124.6L787.6 1161.5L781.5 1127.7L756.9 1127.7L738.4 1140.0L732.3 1121.5L704.6 1118.5L689.2 1133.8Z" fill="#ccc"/>
</g>
<g id="Lbase">
</g>
<g id="Lorange">
<path d="M920.0 214.2L905.2 218.4L881.7 225.1L858.3 232.6L836.4 240.2L818.0 243.5L801.2 246.9L787.8 255.3L771.0 268.7L754.2 280.4L737.4 290.5L720.7 300.6L714.0 304.8L700.5 314.0L690.5 324.1L680.4 339.2L672.0 341.7L669.5 354.3L660.3 367.7L655.2 381.1L645.2 389.5L637.6 399.6L634.3 416.3L630.1 424.7L620.0 434.8L619.2 440.7L619.2 453.3L922.0 453.3L922.0 214.2Z" fill="#cf6f2e"/>
<path d="M1297.6 409.5L1307.0 418.8L1317.3 424.0L1327.6 428.2L1344.2 440.6L1358.7 455.1L1373.2 473.7L1385.6 490.2L1395.9 505.6L1398.0 508.9L1199.3 508.9L1199.3 432.3L1215.9 432.3L1232.5 429.2L1261.4 418.8Z" fill="#cf6f2e"/>
<path d="M620.5 438.3L842.0 438.3L842.0 678.3L521.5 678.3L523.2 663.2L531.6 649.7L540.0 641.3L546.7 638.8L556.8 635.5L562.7 630.4L558.5 622.9L551.7 612.8L550.1 605.3L555.9 597.7L557.6 591.0L556.8 579.3L560.1 560.8L565.2 544.0L571.0 534.0L573.6 528.9L595.4 523.9L604.6 484.5Z" fill="#cf6f2e"/>
<path d="M818.3 438.3L1122.0 438.3L1122.0 678.3L818.3 678.3Z" fill="#cf6f2e"/>
<path d="M1097.9 437.9L1346.3 437.9L1369.0 462.8L1385.6 487.6L1398.0 508.3L1383.5 511.4L1405.3 521.1L1410.4 539.3L1418.7 564.2L1423.9 580.7L1421.8 586.9L1417.7 587.4L1424.9 605.6L1431.1 630.4L1434.2 647.0L1431.1 654.2L1422.8 649.0L1417.7 644.9L1418.7 659.4L1424.9 678.0L1431.1 698.7L1431.1 709.0L1424.9 707.0L1414.6 697.7L1410.4 700.8L1389.7 682.1L1358.7 665.6L1327.6 649.0L1286.3 634.5L1261.4 630.4L1236.6 640.7L1203.5 645.9L1162.1 642.8L1131.0 630.4L1097.9 620.0Z" fill="#cf6f2e"/>
<path d="M523.5 662.9L515.2 675.3L509.0 689.8L496.6 706.4L488.3 720.9L487.2 733.3L489.3 751.9L491.4 768.5L504.8 776.8L521.4 780.9L529.7 778.8L562.8 770.5L593.8 764.3L614.5 756.1L635.2 745.7L655.9 739.5L676.6 743.6L684.9 754.0L697.3 764.3L709.7 776.8L718.0 783.0L730.4 778.8L749.0 764.3L780.1 749.9L811.1 741.6L852.5 737.4L852.5 662.9Z" fill="#cf6f2e"/>
<path d="M847.9 677.4C850.1 670.3 856.9 682.7 862.4 687.8C868.2 693.1 871.1 697.3 876.9 704.3C882.7 711.4 885.6 715.5 891.4 722.9C897.2 730.4 901.3 735.0 905.9 741.6C909.8 747.3 917.1 754.4 914.2 756.1C911.3 757.7 900.1 753.6 891.4 749.9C882.7 746.1 879.4 740.3 870.7 737.4C862.0 734.5 851.3 744.3 847.9 735.4C843.4 723.4 845.0 686.9 847.9 677.4Z" fill="#cf6f2e"/>
<path d="M918.3 680.5C917.1 678.5 925.9 672.6 932.8 669.1C939.8 665.6 944.4 663.5 953.5 662.9C974.2 661.7 1017.2 660.9 1036.3 662.9C1043.0 663.7 1047.0 669.1 1048.7 673.3C1050.3 677.4 1048.7 681.5 1044.5 683.6C1040.0 685.9 1033.7 685.1 1025.9 684.7C1016.0 684.0 1006.9 682.2 994.9 680.5C982.9 678.9 977.1 676.6 965.9 676.4C954.7 676.2 948.5 678.7 939.0 679.5C930.3 680.2 919.5 682.6 918.3 680.5Z" fill="#cf6f2e"/>
</g>
<g id="Lblack">
<path d="M920.0 214.2C918.5 207.9 911.4 216.6 905.2 218.4C897.6 220.5 891.1 222.2 881.7 225.1C872.3 227.9 867.3 229.6 858.3 232.6C849.2 235.6 844.5 238.0 836.4 240.2C828.8 242.2 825.0 242.2 818.0 243.5C810.9 244.9 807.2 244.5 801.2 246.9C795.2 249.2 793.2 251.4 787.8 255.3C781.7 259.6 777.7 263.7 771.0 268.7C764.3 273.7 760.9 276.1 754.2 280.4C747.5 284.8 744.2 286.5 737.4 290.5C730.7 294.5 726.0 297.3 720.7 300.6C716.4 303.2 709.3 306.9 710.6 306.9C711.9 307.0 720.3 303.5 727.4 300.9C734.8 298.2 739.0 296.5 747.5 293.5C756.2 290.4 761.3 288.5 771.0 285.5C780.7 282.4 786.1 280.7 796.2 278.4C806.2 276.1 813.3 274.5 821.3 274.1C827.7 273.7 832.4 275.3 836.4 276.2C838.7 276.8 839.1 278.7 841.5 278.8C858.2 279.3 904.3 291.7 920.0 278.8C935.7 265.8 923.0 226.2 920.0 214.2Z" fill="#000"/>
<path d="M677.0 364.0C675.7 362.5 682.6 357.2 687.1 352.6C691.8 347.8 695.2 344.7 700.5 340.0C705.9 335.3 708.6 333.4 714.0 329.1C719.3 324.8 721.5 322.7 727.4 318.7C734.1 314.2 738.8 311.2 747.5 306.4C756.2 301.6 761.3 298.7 771.0 294.7C780.7 290.7 786.1 289.0 796.2 286.3C806.2 283.6 812.3 282.8 821.3 281.3C829.7 279.9 833.0 279.0 841.5 278.8C861.2 278.3 904.3 266.0 920.0 278.8C935.7 291.5 933.0 331.1 920.0 342.5C907.0 353.9 868.4 339.2 854.9 335.8C850.7 334.8 856.3 327.7 852.4 325.7C847.7 323.4 837.1 325.9 831.4 324.1C827.1 322.7 826.2 316.2 823.9 316.5C821.5 316.8 823.6 324.2 819.7 325.7C813.1 328.3 797.5 327.2 791.1 329.1C788.4 329.9 790.1 333.6 787.8 335.0C785.4 336.4 782.9 336.6 779.4 336.1C775.4 335.6 772.7 332.2 767.7 332.4C762.6 332.7 759.8 335.2 754.2 337.5C748.2 340.0 744.2 342.2 737.4 345.0C730.7 347.9 726.7 349.6 720.7 351.7C715.1 353.8 712.6 354.3 707.2 355.9C701.9 357.6 699.5 358.6 693.8 360.1C687.8 361.7 678.4 365.5 677.0 364.0Z" fill="#000"/>
<path d="M658.6 397.0C657.6 396.7 665.2 391.4 670.3 387.8C676.0 383.8 680.4 380.8 687.1 376.9C693.8 373.1 697.2 371.5 703.9 368.5C710.6 365.5 714.0 364.2 720.7 361.8C727.4 359.5 730.7 358.8 737.4 356.8C744.2 354.8 747.5 353.6 754.2 351.7C760.9 349.9 764.3 349.2 771.0 347.6C777.7 345.9 781.1 344.9 787.8 343.4C794.5 341.8 797.9 341.2 804.6 340.0C811.3 338.8 814.6 338.5 821.3 337.5C828.1 336.5 831.9 337.3 838.1 335.0C844.3 332.6 845.3 326.0 852.4 325.7C868.8 325.2 906.5 317.7 920.0 332.4C933.5 347.2 923.0 386.3 920.0 399.6C918.6 405.6 910.9 398.7 905.2 398.7C899.6 398.7 896.5 398.1 891.8 399.6C887.1 401.1 885.8 404.6 881.7 406.3C877.8 407.9 876.0 408.1 871.7 408.0C867.3 407.8 864.0 407.4 859.9 405.4C855.9 403.4 854.2 400.9 851.5 397.9C849.0 395.0 848.9 391.5 846.5 390.3C844.2 389.2 842.5 393.2 839.8 392.0C837.1 390.8 836.1 386.8 833.1 384.5C830.1 382.1 827.0 382.4 824.7 380.3C822.4 378.1 824.4 373.4 821.3 373.6C818.3 373.7 813.5 377.6 809.6 381.1C805.7 384.6 805.1 389.5 802.0 391.2C799.2 392.8 797.3 390.8 794.5 389.5C791.6 388.2 789.6 385.6 787.8 384.5C786.8 383.9 786.2 383.0 785.3 383.6C783.3 385.0 779.6 391.0 777.7 391.2C775.9 391.3 778.7 385.0 776.0 384.5C773.4 384.0 769.5 388.0 764.3 388.7C756.6 389.7 747.3 388.5 737.4 389.5C727.8 390.5 719.7 393.5 714.8 393.7C713.2 393.7 714.5 391.1 713.1 390.3C709.3 388.2 703.1 383.0 695.5 382.8C688.0 382.6 682.8 386.6 675.4 389.5C668.2 392.3 659.6 397.4 658.6 397.0Z" fill="#000"/>
<path d="M787.8 384.5C787.8 385.8 781.7 392.9 777.7 397.9C773.7 402.9 771.3 404.3 767.7 409.6C764.0 415.0 761.9 419.4 759.3 424.7C756.9 429.5 753.6 432.4 754.2 436.5C754.9 440.5 758.2 442.5 762.6 444.9C768.0 447.7 787.8 449.4 781.1 450.6C774.4 451.7 737.8 454.1 729.1 450.6C721.5 447.6 733.4 440.0 737.4 433.1C741.5 426.3 744.8 421.9 749.2 416.3C753.1 411.4 754.9 409.0 759.3 405.4C763.6 401.9 767.3 401.6 771.0 398.7C774.4 396.1 774.5 393.9 777.7 391.2C781.1 388.3 787.8 383.1 787.8 384.5Z" fill="#000"/>
<path d="M620.0 438.2C622.0 435.8 625.1 431.8 630.1 428.9C635.1 426.1 638.8 424.7 645.2 423.9C651.5 423.1 656.9 426.2 661.9 424.7C666.7 423.3 665.7 418.1 670.3 416.3C675.4 414.5 680.9 416.4 687.1 415.5C693.2 414.6 699.7 411.0 701.4 411.6C703.1 412.3 698.4 416.2 695.5 418.9C692.7 421.5 690.2 421.8 687.1 424.7C683.8 427.9 681.1 431.1 678.7 434.8C676.7 438.0 676.0 440.0 675.4 443.2C674.7 446.2 678.3 449.5 675.4 450.6C671.5 452.0 659.6 452.7 656.1 450.6C652.6 448.4 656.6 444.0 657.8 439.8C658.9 435.7 664.5 432.3 661.9 429.8C659.4 427.2 651.2 426.9 645.2 427.2C639.3 427.6 636.8 428.8 631.7 431.4C626.7 434.1 622.3 439.3 620.0 440.7C619.1 441.2 619.3 439.0 620.0 438.2Z" fill="#000"/>
<path d="M695.5 450.6C694.2 448.9 706.9 445.2 714.0 442.3C720.9 439.5 727.7 436.5 730.7 436.1C732.8 435.9 730.2 439.0 729.1 440.7C727.0 443.6 725.9 449.0 720.7 450.6C714.0 452.6 696.8 452.2 695.5 450.6Z" fill="#000"/>
<path d="M898.3 213.3L950.3 215.8L972.1 223.4L983.9 227.1L1017.4 219.7L1051.0 215.0L1101.3 214.2L1134.9 222.6L1160.1 233.5L1182.7 246.0L1202.0 256.9L1202.0 450.6L898.3 450.6Z" fill="#000"/>
</g>
<g id="Lorange2">
<path d="M725.7 330.8C725.7 330.3 732.4 326.2 737.4 323.2C742.8 320.0 746.1 318.1 752.6 314.8C759.3 311.5 763.0 309.3 771.0 306.4C780.6 303.0 790.3 300.2 800.4 297.6C809.1 295.3 812.8 294.3 821.3 293.2C829.9 292.0 836.4 291.5 843.2 291.8C848.2 292.1 850.0 293.4 854.9 294.7C862.1 296.6 875.2 299.1 879.2 301.4C881.6 302.8 875.0 304.3 875.0 306.4C875.0 308.6 880.2 310.0 879.2 312.0C878.2 314.0 874.2 316.9 870.0 316.5C865.8 316.1 863.3 310.6 858.3 309.8C853.2 309.0 849.9 313.2 844.8 312.3C839.8 311.5 837.8 307.9 833.1 305.6C828.4 303.3 826.0 301.9 821.3 300.9C816.6 299.9 814.5 299.9 809.6 300.6C802.9 301.5 795.5 303.4 787.8 305.6C780.6 307.6 778.0 308.9 771.0 311.5C763.6 314.2 757.6 316.6 750.9 319.4C745.2 321.7 742.5 323.1 737.4 325.4C732.5 327.6 725.7 331.2 725.7 330.8Z" fill="#cf6f2e"/>
<path d="M851.5 260.0C852.2 258.6 860.3 258.4 866.6 258.3C873.0 258.2 876.6 257.8 883.4 259.5C890.5 261.2 894.2 264.0 901.9 267.0C909.6 270.0 918.0 271.7 922.0 274.6C924.3 276.2 924.8 280.9 922.0 281.3C918.7 281.8 911.9 278.8 905.2 277.1C898.5 275.4 894.5 273.9 888.5 272.9C882.9 272.0 880.1 273.6 875.0 272.0C870.0 270.5 868.0 267.8 863.3 265.3C858.6 262.9 850.9 261.4 851.5 260.0Z" fill="#cf6f2e"/>
<path d="M787.8 266.5C787.8 265.7 797.9 260.4 804.6 259.0C811.3 257.6 821.3 258.7 821.3 259.5C821.3 260.2 811.3 261.4 804.6 262.8C797.9 264.2 787.8 267.3 787.8 266.5Z" fill="#cf6f2e"/>
<path d="M880.1 340.0C881.1 338.5 887.0 340.4 891.8 341.7C896.8 343.0 899.7 344.4 905.2 346.7C911.3 349.2 918.7 349.1 922.0 354.3C925.4 359.5 925.4 370.4 922.0 372.7C918.7 375.1 910.6 368.7 905.2 366.0C900.7 363.7 898.9 362.7 895.2 359.3C891.5 355.9 889.8 353.1 886.8 349.2C883.8 345.5 879.1 341.5 880.1 340.0Z" fill="#cf6f2e"/>
<path d="M922.7 237.7C921.0 235.4 928.8 235.0 933.6 234.8C939.1 234.6 943.6 235.6 950.3 236.5C957.0 237.4 961.9 237.6 967.1 239.3C971.5 240.8 974.3 243.2 976.3 245.2C977.6 246.5 977.7 248.2 977.2 249.4C976.7 250.6 974.7 249.8 973.8 251.1C972.8 252.6 973.5 255.0 972.1 256.9C970.8 258.9 969.7 261.0 967.1 260.6C963.8 260.1 960.2 257.2 955.4 254.4C950.3 251.5 947.9 249.1 941.9 246.0C935.4 242.7 924.3 239.9 922.7 237.7Z" fill="#cf6f2e"/>
<path d="M900.0 267.3C902.0 266.3 906.0 269.8 910.1 272.0C914.9 274.7 923.7 279.3 924.3 280.8C925.0 282.3 918.0 280.3 913.4 279.6C908.6 278.9 902.7 279.5 900.0 277.1C897.3 274.6 898.0 268.4 900.0 267.3Z" fill="#cf6f2e"/>
<path d="M1093.0 229.3C1094.6 228.4 1102.7 229.3 1109.7 230.1C1118.1 231.1 1124.8 232.3 1134.9 234.3C1145.0 236.3 1150.0 237.3 1160.1 240.2C1170.1 243.0 1176.8 245.5 1185.2 248.6C1192.4 251.1 1198.7 251.1 1202.0 255.3C1205.4 259.5 1204.7 267.0 1202.0 269.5C1199.3 272.0 1194.0 269.6 1188.6 267.9C1181.9 265.7 1177.0 262.3 1168.5 258.6C1159.4 254.8 1153.4 252.2 1143.3 248.6C1133.2 244.9 1126.5 243.0 1118.1 240.2C1111.1 237.8 1106.4 236.5 1101.3 234.3C1097.6 232.7 1091.3 230.1 1093.0 229.3Z" fill="#cf6f2e"/>
<path d="M997.3 254.9C996.3 253.9 1003.5 249.1 1009.1 246.9C1015.8 244.3 1022.5 243.3 1030.9 241.8C1039.3 240.4 1043.0 240.0 1051.0 239.8C1059.1 239.7 1063.8 239.8 1071.1 241.0C1078.4 242.2 1081.9 243.7 1087.9 246.0C1093.8 248.3 1096.6 249.9 1101.3 252.8C1105.9 255.5 1106.6 258.1 1111.4 260.3C1116.4 262.7 1120.1 263.3 1126.5 264.5C1132.9 265.7 1136.9 265.0 1143.3 266.2C1149.7 267.3 1153.7 268.2 1158.4 270.4C1162.5 272.3 1164.4 274.4 1166.8 277.1C1168.9 279.5 1170.5 280.9 1170.5 283.8C1170.5 286.6 1169.2 289.0 1166.8 291.3C1164.4 293.7 1162.2 296.5 1158.4 295.5C1153.7 294.4 1149.7 289.5 1143.3 285.5C1136.9 281.4 1133.2 279.4 1126.5 275.4C1119.8 271.4 1116.4 269.0 1109.7 265.3C1103.0 261.6 1099.7 259.8 1093.0 256.9C1086.2 254.1 1082.9 252.8 1076.2 251.1C1069.5 249.4 1066.5 248.8 1059.4 248.6C1051.0 248.2 1043.3 248.7 1034.2 249.4C1025.7 250.1 1021.5 251.1 1014.1 252.2C1007.0 253.3 998.3 256.0 997.3 254.9Z" fill="#cf6f2e"/>
<path d="M991.4 268.7C991.1 267.7 1001.5 266.7 1007.4 265.3C1013.0 264.0 1015.0 262.8 1020.8 262.0C1026.8 261.1 1031.5 260.5 1037.6 261.1C1043.5 261.8 1045.5 263.1 1051.0 265.3C1056.7 267.7 1060.1 271.5 1066.1 272.9C1072.1 274.2 1075.2 271.7 1081.2 272.0C1087.2 272.4 1090.3 272.7 1096.3 274.6C1102.3 276.4 1105.7 278.4 1111.4 281.3C1117.1 284.1 1120.0 286.0 1124.8 288.8C1129.4 291.5 1137.8 293.6 1135.7 295.2C1133.7 296.8 1122.3 297.3 1114.8 296.9C1107.5 296.5 1104.9 295.1 1098.0 293.0C1090.9 290.9 1086.9 288.5 1079.5 286.3C1072.1 284.1 1068.1 284.1 1061.1 282.1C1054.0 280.1 1051.0 278.1 1044.3 276.2C1037.6 274.4 1034.6 274.1 1027.5 272.9C1020.5 271.7 1016.3 271.2 1009.1 270.4C1001.8 269.5 991.8 269.7 991.4 268.7Z" fill="#cf6f2e"/>
<path d="M970.5 299.4C969.8 297.4 978.2 297.4 983.9 297.2C991.6 296.9 999.0 296.9 1009.1 298.1C1019.1 299.2 1024.2 300.6 1034.2 303.1C1044.3 305.6 1049.3 306.8 1059.4 310.6C1069.5 314.5 1074.5 317.3 1084.6 322.4C1094.6 327.4 1101.3 331.6 1109.7 335.8C1116.6 339.3 1120.8 341.3 1126.5 343.4C1131.3 345.0 1135.6 344.0 1138.3 345.9C1140.6 347.5 1140.5 349.7 1139.9 352.6C1139.3 355.9 1136.6 358.3 1134.9 362.7C1133.1 367.3 1130.7 370.4 1130.7 376.1C1130.7 381.8 1132.4 386.1 1134.9 391.2C1137.4 396.1 1138.9 398.4 1143.3 401.2C1147.7 404.1 1151.7 404.4 1156.7 405.4C1161.6 406.4 1165.4 407.4 1168.5 406.3C1171.4 405.1 1168.7 399.9 1171.8 399.6C1175.2 399.2 1179.7 402.2 1185.2 404.6C1191.3 407.3 1199.3 405.6 1202.0 413.0C1205.4 422.2 1207.4 443.1 1202.0 450.6C1196.6 458.1 1185.2 453.4 1175.2 450.6C1165.1 447.8 1155.7 440.0 1151.7 436.5C1150.2 435.2 1156.4 434.6 1155.0 433.1C1151.7 429.4 1141.3 422.7 1134.9 418.0C1130.0 414.4 1126.8 414.0 1123.2 409.6C1119.5 405.3 1120.1 401.3 1116.4 396.2C1112.1 390.2 1106.0 385.5 1101.3 379.4C1097.3 374.2 1096.3 371.7 1093.0 366.0C1089.6 360.3 1089.2 356.5 1084.6 350.9C1079.5 344.9 1074.5 341.2 1067.8 335.8C1061.1 330.4 1058.9 327.5 1051.0 324.1C1042.6 320.4 1035.6 319.2 1025.8 317.3C1016.1 315.5 1010.1 316.8 1002.3 314.8C995.5 313.0 993.6 310.4 987.2 307.3C980.9 304.2 971.1 301.4 970.5 299.4Z" fill="#cf6f2e"/>
<path d="M1148.3 322.4C1149.2 317.7 1151.4 314.1 1155.0 309.0C1159.1 303.3 1162.4 299.2 1168.5 293.9C1174.5 288.5 1178.9 285.8 1185.2 282.1C1191.1 278.7 1197.0 276.1 1200.0 275.4C1201.4 275.1 1201.1 277.9 1200.0 278.8C1196.4 281.8 1188.5 284.8 1181.9 290.5C1175.2 296.2 1171.3 300.6 1166.8 307.3C1162.5 313.7 1161.2 317.0 1159.2 324.1C1157.2 331.1 1156.5 334.8 1156.7 342.5C1156.9 350.2 1157.2 354.6 1160.1 362.7C1163.1 371.0 1166.1 376.4 1171.8 384.5C1177.5 392.5 1183.0 397.6 1188.6 402.9C1192.9 407.0 1197.7 409.0 1200.0 411.3C1201.0 412.3 1201.2 415.4 1200.0 414.7C1195.4 411.6 1184.5 403.9 1176.8 396.2C1169.4 388.7 1166.4 384.5 1161.7 376.1C1157.0 367.7 1155.5 363.0 1153.4 354.3C1151.2 345.5 1151.8 338.8 1150.8 332.4C1150.2 328.1 1147.6 326.7 1148.3 322.4Z" fill="#cf6f2e"/>
<path d="M985.6 330.8C985.9 328.4 990.7 331.0 994.0 332.4C998.0 334.3 1002.7 336.0 1005.7 340.0C1008.7 344.0 1007.1 347.5 1009.1 352.6C1011.1 357.8 1013.4 360.3 1015.8 366.0C1018.1 371.7 1018.8 376.7 1020.8 381.1C1022.3 384.3 1023.8 387.1 1025.8 387.8C1027.9 388.5 1028.9 383.1 1030.9 384.5C1032.9 385.8 1033.8 390.3 1035.9 394.5C1038.1 398.9 1042.1 400.9 1041.8 406.3C1041.4 411.6 1036.4 416.3 1034.2 421.4C1032.5 425.5 1032.7 427.4 1030.9 431.4C1028.2 437.3 1027.9 446.7 1020.8 450.6C1013.8 454.4 1003.0 453.4 995.6 450.6C988.4 447.8 986.9 442.0 983.9 436.5C981.1 431.4 979.9 428.8 980.5 423.1C981.2 417.3 983.2 412.3 987.2 408.0C991.3 403.6 997.0 404.6 1000.7 401.2C1004.2 398.1 1005.1 395.9 1005.7 391.2C1006.4 385.8 1005.4 381.1 1004.0 374.4C1002.7 367.7 1001.3 363.7 999.0 357.6C996.7 351.7 995.0 349.6 992.3 344.2C989.6 338.8 985.2 333.1 985.6 330.8Z" fill="#cf6f2e"/>
<path d="M900.0 345.9C901.0 343.1 904.2 346.1 906.7 347.6C910.7 349.9 913.5 355.1 920.1 357.6C927.2 360.3 933.2 359.0 941.9 361.0C950.7 363.0 956.4 364.3 963.8 367.7C970.7 370.8 973.5 373.1 978.9 377.8C984.2 382.4 986.2 386.5 990.6 391.2C994.7 395.6 1001.3 397.9 1000.7 401.2C1000.0 404.6 991.3 403.6 987.2 408.0C983.2 412.3 982.9 422.0 980.5 423.1C978.2 424.1 978.2 416.3 975.5 413.0C972.8 409.6 969.5 407.3 967.1 406.3C965.7 405.7 964.3 406.6 963.8 408.0C963.3 409.3 965.3 411.0 964.6 413.0C963.6 415.7 959.2 417.3 958.7 421.4C958.2 425.4 960.7 428.2 962.1 433.1C963.8 439.0 968.5 447.1 967.1 450.6C965.8 454.1 958.8 454.1 955.4 450.6C950.3 445.4 947.0 432.2 941.9 424.7C938.1 418.9 935.2 416.3 930.2 413.0C925.2 409.6 922.6 409.4 916.8 408.0C910.7 406.4 903.4 407.1 900.0 405.4C897.8 404.3 897.6 400.0 900.0 399.6C905.0 398.6 914.6 400.4 925.2 400.4C936.2 400.4 952.0 401.7 955.4 399.6C958.7 397.4 948.0 393.2 941.9 389.5C934.2 384.8 925.2 380.6 916.8 376.1C909.7 372.3 903.4 372.9 900.0 366.8C896.6 360.8 898.7 349.7 900.0 345.9Z" fill="#cf6f2e"/>
<path d="M1051.0 349.2C1050.7 346.5 1055.4 350.5 1057.7 352.6C1061.1 355.6 1063.8 360.0 1067.8 364.3C1071.8 368.7 1075.2 371.5 1077.9 374.4C1079.4 376.0 1081.7 377.1 1081.2 378.6C1080.7 380.1 1076.0 380.4 1075.3 381.9C1074.7 383.5 1076.7 384.5 1077.9 386.1C1080.4 389.7 1084.0 393.7 1087.9 399.6C1091.9 405.6 1094.0 409.3 1098.0 416.3C1102.0 423.4 1104.7 428.0 1108.1 434.8C1111.2 441.3 1118.5 447.4 1114.8 450.6C1111.1 453.7 1096.3 454.1 1089.6 450.6C1082.9 447.1 1084.6 440.5 1081.2 433.1C1076.8 423.6 1072.8 413.3 1067.8 402.9C1063.3 393.6 1057.4 386.0 1056.0 381.1C1055.4 378.8 1060.6 380.9 1061.1 378.6C1061.7 375.6 1061.1 371.1 1059.4 366.0C1057.4 360.1 1051.3 351.9 1051.0 349.2Z" fill="#cf6f2e"/>
<path d="M898.3 397.9C903.6 387.9 913.9 399.4 925.2 399.6C936.6 399.7 947.5 397.4 955.4 398.7C960.3 399.6 962.8 403.4 964.6 406.3C966.1 408.6 965.6 410.4 964.6 413.0C963.4 416.0 959.2 417.3 958.7 421.4C958.2 425.4 960.7 428.2 962.1 433.1C963.8 439.0 974.5 448.6 967.1 450.6C954.4 454.1 912.1 461.1 898.3 450.6C884.6 440.0 893.0 408.1 898.3 397.9Z" fill="#cf6f2e"/>
</g>
<g id="Lbrown">
<path d="M644.0 554.1C644.2 554.4 638.8 562.7 639.0 564.2C639.2 565.6 645.9 567.5 645.7 568.4C645.5 569.2 638.7 571.1 637.3 572.6C635.9 574.0 631.1 580.6 631.4 582.6C631.8 584.6 641.1 591.8 640.7 592.7C640.3 593.5 629.4 590.7 627.2 591.0C625.1 591.3 620.9 594.2 618.9 596.0C616.8 597.9 609.0 607.3 607.1 609.5C605.3 611.6 601.6 615.3 600.4 617.9C599.2 620.4 596.0 634.6 595.4 634.6C594.7 634.6 595.2 618.9 593.7 617.9C592.2 616.8 583.5 622.6 580.3 624.6C577.1 626.6 564.0 635.3 561.8 638.0C559.6 640.7 559.0 647.7 558.5 651.4C558.0 655.2 558.6 673.2 556.8 675.6C554.9 678.0 540.7 677.3 540.0 675.6C539.3 673.8 548.1 661.5 550.1 658.1C552.1 654.7 557.8 644.5 560.1 641.3C562.5 638.2 570.0 629.6 573.6 626.2C577.1 622.9 591.3 611.3 595.4 607.8C599.4 604.3 610.6 594.0 613.8 591.0C617.0 588.0 624.9 580.6 627.2 577.6C629.6 574.6 635.6 563.2 637.3 560.8C639.0 558.5 643.9 553.8 644.0 554.1Z" fill="#9c2e0c"/>
<path d="M808.5 597.7C807.6 596.5 795.0 602.6 788.3 603.6C781.6 604.6 766.6 604.7 758.1 605.3C749.6 605.8 733.5 606.4 724.6 607.8C715.6 609.1 700.4 612.5 691.0 615.3C681.6 618.1 663.5 624.2 654.1 628.8C644.7 633.3 620.1 649.2 620.5 649.7C621.0 650.3 648.1 636.9 657.4 633.0C666.8 629.0 682.1 622.8 691.0 620.4C700.0 617.9 716.7 615.3 724.6 614.5C732.4 613.7 743.0 613.4 749.7 614.5C756.4 615.6 769.3 620.2 774.9 622.9C780.5 625.6 787.2 630.8 791.7 634.6C796.2 638.4 804.0 647.6 808.5 651.4C812.9 655.2 821.0 660.5 825.2 663.2C829.4 665.8 838.0 671.3 840.0 671.5C842.0 671.8 841.9 666.9 840.0 664.8C838.0 662.6 829.0 658.1 825.2 654.8C821.5 651.4 815.4 644.1 811.8 639.7C808.2 635.2 800.6 624.8 798.4 621.2C796.4 618.0 793.7 616.0 795.0 612.8C796.4 609.7 809.4 598.9 808.5 597.7Z" fill="#9c2e0c"/>
<path d="M788.3 639.7C786.5 637.4 772.8 626.5 766.5 622.9C760.2 619.3 749.2 613.9 741.3 612.8C733.5 611.7 716.7 613.2 707.8 614.5C698.8 615.8 681.4 620.9 674.2 622.9C667.1 624.9 656.6 628.4 654.1 629.6C653.1 630.1 654.7 631.8 655.8 631.6C658.9 631.2 670.6 628.0 677.6 626.2C684.5 624.5 699.7 619.5 707.8 618.2C715.8 616.9 730.6 615.4 738.0 616.5C745.4 617.6 757.6 623.2 763.2 626.2C768.7 629.3 776.6 637.9 779.9 639.7C783.0 641.3 790.1 641.9 788.3 639.7Z" fill="#5e1202"/>
<path d="M788.3 649.7C783.6 647.5 772.8 643.1 766.5 641.3C760.2 639.6 749.2 636.6 741.3 636.3C733.5 636.0 716.7 637.0 707.8 638.8C698.8 640.6 683.2 644.8 674.2 649.7C665.3 654.6 643.1 672.1 640.7 675.6C638.2 679.0 650.9 678.1 655.8 675.6C660.7 673.0 670.6 660.7 677.6 656.4C684.5 652.2 699.3 645.9 707.8 643.9C716.3 641.8 732.4 640.6 741.3 640.8C750.3 641.1 766.8 643.2 774.9 645.5C783.0 647.8 800.0 657.6 801.7 658.1C803.5 658.7 793.0 652.0 788.3 649.7Z" fill="#9c2e0c"/>
<path d="M801.7 658.1C795.9 656.2 781.8 652.6 774.9 651.7C768.0 650.9 756.9 651.1 749.7 651.7C742.6 652.4 729.5 653.3 721.2 656.4C712.9 659.6 690.3 673.0 687.7 675.6C685.0 678.1 696.2 677.4 701.1 675.6C706.0 673.7 717.0 664.4 724.6 661.8C732.2 659.2 749.2 656.6 758.1 656.1C767.1 655.6 783.6 656.7 791.7 658.1C799.7 659.5 817.2 666.5 818.5 666.5C819.9 666.5 807.6 660.1 801.7 658.1Z" fill="#9c2e0c"/>
<path d="M818.5 665.7C812.1 663.6 798.6 660.1 791.7 659.8C784.7 659.5 772.6 662.0 766.5 663.2C760.5 664.3 750.9 666.5 746.4 668.2C741.9 669.8 732.5 674.6 733.0 675.6C733.4 676.6 744.1 676.8 749.7 675.6C755.3 674.4 767.1 667.7 774.9 666.5C782.7 665.3 799.8 665.3 808.5 666.5C817.1 667.7 838.7 675.7 840.0 675.6C841.3 675.5 825.0 667.8 818.5 665.7Z" fill="#9c2e0c"/>
<path d="M542.1 662.9C542.5 665.4 536.7 679.1 533.8 689.8C530.9 700.6 528.4 705.2 527.6 716.7C526.8 728.3 530.3 738.3 529.7 747.8C529.2 755.1 526.2 766.4 524.5 764.3C522.8 762.3 521.6 748.8 521.4 737.4C521.2 725.8 521.4 718.4 523.5 706.4C525.5 694.4 528.0 686.1 531.7 677.4C534.7 670.5 541.7 660.4 542.1 662.9Z" fill="#9c2e0c"/>
<path d="M521.4 662.9C521.0 667.5 514.4 683.2 513.1 696.0C511.9 708.9 514.1 715.5 515.2 727.1C516.2 738.4 519.1 754.0 518.3 754.0C517.5 754.0 512.9 738.6 511.0 727.1C509.2 715.5 508.1 706.8 509.0 696.0C509.7 686.2 512.7 679.9 515.2 673.3C517.0 668.5 521.8 658.4 521.4 662.9Z" fill="#9c2e0c"/>
<path d="M492.4 720.9C492.8 720.9 491.0 730.5 491.4 737.4C491.8 744.5 493.0 749.9 494.5 756.1C495.7 761.4 499.0 768.5 498.6 768.5C498.2 768.5 494.1 761.6 492.4 756.1C490.6 749.9 489.3 744.5 489.3 737.4C489.3 730.4 492.0 720.9 492.4 720.9Z" fill="#9c2e0c"/>
<path d="M643.5 670.2C643.7 670.4 638.4 681.3 637.3 683.6C636.1 685.9 632.3 693.1 632.1 692.9C631.9 692.7 634.1 683.8 635.2 681.6C636.4 679.3 643.3 670.0 643.5 670.2Z" fill="#5e1202"/>
<path d="M651.8 665.0C651.4 665.2 643.2 674.8 641.4 677.4C639.7 680.0 633.8 691.1 634.2 690.9C634.6 690.7 643.8 677.9 645.6 675.3C647.3 672.8 652.2 664.8 651.8 665.0Z" fill="#9c2e0c"/>
<path d="M689.0 672.2C689.2 672.7 682.3 681.7 680.7 683.6C679.2 685.6 673.7 692.3 673.5 691.9C673.3 691.5 677.1 681.5 678.7 679.5C680.2 677.5 688.8 671.8 689.0 672.2Z" fill="#5e1202"/>
<path d="M699.4 665.0C699.2 665.2 689.2 673.9 687.0 676.4C684.7 678.9 676.4 690.0 676.6 689.8C676.8 689.6 686.7 676.8 689.0 674.3C691.3 671.8 699.6 664.8 699.4 665.0Z" fill="#9c2e0c"/>
<path d="M761.5 664.0C761.3 663.7 748.3 668.8 744.9 670.2C741.5 671.6 727.1 677.5 727.3 677.8C727.5 678.1 743.6 674.7 747.0 673.3C750.4 671.9 761.7 664.3 761.5 664.0Z" fill="#9c2e0c"/>
<path d="M560.8 638.7C561.4 639.4 555.1 656.1 552.3 661.8C549.6 667.4 543.4 675.3 540.2 681.2C537.0 687.0 530.3 698.9 528.1 705.4C525.8 711.8 523.2 722.2 523.2 729.6C523.2 737.0 528.4 757.2 528.1 761.1C527.8 764.3 522.0 761.7 520.8 758.7C519.2 754.5 516.3 737.0 516.0 729.6C515.6 722.2 516.1 710.1 518.4 703.0C520.6 695.9 529.0 682.4 532.9 676.3C536.8 670.2 543.7 661.9 547.5 656.9C551.2 651.9 560.1 638.1 560.8 638.7Z" fill="#9c2e0c"/>
<path d="M518.4 681.2C519.0 681.2 513.9 697.0 513.5 705.4C513.2 713.8 515.3 735.8 516.0 744.2C516.6 752.6 519.0 768.4 518.4 768.4C517.7 768.4 512.4 752.6 511.1 744.2C509.8 735.8 507.7 713.8 508.7 705.4C509.7 697.0 517.7 681.2 518.4 681.2Z" fill="#9c2e0c"/>
<path d="M494.2 724.8C494.6 724.8 494.7 743.2 495.4 749.0C496.0 754.8 499.5 768.4 499.0 768.4C498.5 768.4 492.4 754.8 491.7 749.0C491.1 743.2 493.7 724.8 494.2 724.8Z" fill="#9c2e0c"/>
</g>
<g id="Lwhite">
<path d="M620.5 438.3C629.9 436.0 653.4 435.3 660.8 438.3C666.8 440.8 659.2 447.2 657.4 453.4C655.4 460.5 653.8 465.8 650.7 473.6C647.7 481.3 644.9 485.3 642.3 492.0C640.0 498.2 639.2 501.4 638.2 507.1C637.2 512.7 637.0 515.2 637.3 520.5C637.7 525.9 639.0 528.3 639.8 534.0C640.7 539.7 641.7 543.4 641.5 549.1C641.3 554.8 640.7 557.8 639.0 562.5C637.3 567.1 635.6 569.8 633.1 572.6C630.9 574.9 629.3 576.1 626.4 576.2C623.6 576.4 621.6 575.3 618.9 573.4C615.7 571.1 613.4 569.0 610.5 565.0C607.4 560.8 606.6 557.3 603.8 552.4C600.9 547.6 599.4 544.2 596.2 540.7C593.3 537.5 591.7 536.6 587.8 534.8C584.0 533.0 579.9 532.4 576.9 531.4C575.1 530.8 572.9 531.6 572.7 529.8C572.6 527.9 574.6 525.1 576.1 522.2C577.6 519.4 580.0 517.9 580.3 515.5C580.5 513.2 577.7 512.9 577.2 510.5C576.7 508.0 576.4 505.6 577.8 502.9C579.1 500.2 582.3 499.9 584.0 497.0C585.6 494.2 583.9 491.1 586.1 488.7C588.4 486.2 591.7 485.8 595.4 485.0C599.1 484.1 602.6 486.7 604.6 484.5C606.6 482.2 604.6 478.1 605.4 473.6C606.3 469.0 607.1 466.5 608.8 461.8C610.5 457.1 611.5 454.8 613.8 450.1C616.2 445.4 615.0 439.7 620.5 438.3Z" fill="#fff" filter="url(#bl2)"/>
<path d="M618.9 438.3C627.2 436.0 650.4 435.3 657.4 438.3C663.4 440.9 655.9 447.2 654.1 453.4C652.1 460.5 650.2 465.8 647.4 473.6C644.5 481.3 642.2 485.3 639.8 492.0C637.7 498.2 636.6 501.4 635.6 507.1C634.7 512.7 635.1 515.2 634.8 520.5C634.5 525.9 639.3 532.0 634.0 534.0C628.4 536.0 617.2 531.9 607.1 530.6C597.2 529.3 589.0 530.3 583.6 527.2C579.2 524.7 581.1 518.9 580.3 515.5C579.7 513.4 579.4 512.6 579.4 510.5C579.4 508.3 579.1 506.8 580.3 504.6C581.6 502.1 584.5 500.7 586.1 497.9C587.8 495.0 586.6 492.5 588.7 490.3C590.7 488.2 592.8 487.8 596.2 487.0C599.7 486.1 604.1 488.8 606.3 486.1C608.5 483.5 606.3 478.4 607.1 473.6C608.0 468.7 608.8 466.5 610.5 461.8C612.1 457.1 613.8 454.8 615.5 450.1C617.2 445.4 613.9 439.7 618.9 438.3Z" fill="#fff"/>
<path d="M801.7 534.0C796.9 540.3 803.9 554.4 804.3 565.8C804.6 576.4 804.3 582.6 803.8 591.0C803.3 598.1 800.1 605.8 801.7 607.8C803.4 609.8 807.2 603.1 811.8 601.1C817.2 598.7 826.8 603.2 828.6 596.0C831.9 582.6 834.0 546.4 828.6 534.0C824.1 523.6 806.6 527.6 801.7 534.0Z" fill="#fff" filter="url(#bl2)"/>
<path d="M805.9 534.0C801.8 540.3 807.8 554.4 808.1 565.8C808.4 576.4 807.9 583.6 807.6 591.0C807.4 595.9 805.3 601.2 806.8 602.8C808.3 604.3 811.4 599.8 815.2 598.6C819.5 597.0 827.4 600.9 828.6 595.2C831.3 582.3 833.1 546.2 828.6 534.0C825.3 525.0 810.0 527.6 805.9 534.0Z" fill="#fff"/>
<path d="M818.3 438.3C843.5 407.8 917.3 434.6 944.2 438.3C952.6 439.5 949.2 448.9 952.6 456.8C956.2 465.5 958.9 473.6 962.6 481.9C965.8 489.2 968.5 492.7 971.0 498.7C973.3 504.2 974.9 507.1 975.2 512.1C975.5 517.2 974.5 519.5 972.7 523.9C970.8 528.3 968.7 529.9 966.0 534.0C963.3 538.0 962.2 539.9 959.3 544.0C955.9 548.7 953.6 552.4 949.2 557.4C944.8 562.5 941.8 564.5 937.4 569.2C933.1 573.9 932.1 576.6 927.4 580.9C922.7 585.3 919.3 587.3 914.0 591.0C908.6 594.7 905.2 596.4 900.5 599.4C896.3 602.1 895.2 604.4 890.5 606.1C885.8 607.8 882.7 608.1 877.0 607.8C871.3 607.4 868.2 606.2 861.9 604.4C853.9 602.1 845.5 598.7 836.8 596.0C829.1 593.7 819.3 599.0 818.3 591.0C814.6 559.5 793.2 468.9 818.3 438.3Z" fill="#fff" filter="url(#bl2)"/>
<path d="M818.3 438.3C842.7 408.3 914.0 434.6 940.0 438.3C948.4 439.5 945.0 448.9 948.4 456.8C952.0 465.5 954.7 473.6 958.4 481.9C961.6 489.2 964.3 492.7 966.8 498.7C969.1 504.2 970.7 507.1 971.0 512.1C971.3 517.2 970.3 519.5 968.5 523.9C966.6 528.3 964.5 529.9 961.8 534.0C959.1 538.0 958.0 539.9 955.1 544.0C951.7 548.7 949.4 552.4 945.0 557.4C940.6 562.5 937.6 564.5 933.3 569.2C928.9 573.9 927.7 576.7 923.2 580.9C918.7 585.1 915.5 586.8 910.6 590.2C905.8 593.5 903.2 595.0 898.9 597.7C894.7 600.3 893.2 602.1 888.8 603.6C884.4 605.1 882.0 605.6 877.0 605.3C871.7 604.9 868.2 603.7 861.9 601.9C853.9 599.6 845.5 596.2 836.8 593.5C829.1 591.2 819.3 596.5 818.3 588.5C814.6 557.4 794.0 468.4 818.3 438.3Z" fill="#fff"/>
<path d="M1013.0 564.2C1015.3 561.1 1021.2 563.7 1024.7 567.5C1028.4 571.5 1027.7 578.3 1031.4 584.3C1035.1 590.3 1037.8 593.0 1043.2 597.7C1048.5 602.4 1053.2 603.8 1058.3 607.8C1062.9 611.5 1065.0 614.5 1068.3 617.9C1071.1 620.7 1074.4 621.9 1075.0 624.6C1075.7 627.2 1073.4 629.3 1071.7 631.3C1070.1 633.2 1067.0 632.1 1066.6 634.6C1066.3 637.3 1067.7 641.3 1070.0 644.7C1072.3 648.1 1076.0 648.1 1078.4 651.4C1080.7 654.8 1080.4 657.2 1081.7 661.5C1083.4 666.8 1093.5 675.3 1086.8 678.3C1079.1 681.6 1052.6 684.0 1043.2 678.3C1033.8 672.6 1042.1 660.5 1039.8 649.7C1037.4 639.0 1035.1 634.6 1031.4 624.6C1027.7 614.5 1025.0 607.8 1021.3 599.4C1018.2 592.2 1014.6 589.7 1013.0 582.6C1011.3 575.6 1010.6 567.2 1013.0 564.2Z" fill="#fff" filter="url(#bl4)"/>
<path d="M1036.4 596.0C1039.5 592.7 1051.9 603.4 1058.3 607.8C1063.2 611.2 1065.0 614.5 1068.3 617.9C1071.1 620.7 1074.4 621.9 1075.0 624.6C1075.7 627.2 1073.4 629.3 1071.7 631.3C1070.1 633.2 1067.0 632.1 1066.6 634.6C1066.3 637.3 1067.7 641.3 1070.0 644.7C1072.3 648.1 1076.0 648.1 1078.4 651.4C1080.7 654.8 1080.4 657.2 1081.7 661.5C1083.4 666.8 1092.1 674.9 1086.8 678.3C1081.4 681.6 1061.9 684.0 1054.9 678.3C1047.9 672.6 1053.9 660.5 1051.5 649.7C1049.2 639.0 1046.2 635.3 1043.2 624.6C1040.1 613.8 1033.4 599.4 1036.4 596.0Z" fill="#fff" filter="url(#bl2)"/>
<path d="M1122.0 601.1C1121.3 596.4 1114.8 603.1 1111.9 606.1C1109.1 609.1 1108.7 611.7 1107.8 616.2C1106.6 621.5 1106.0 625.9 1106.1 633.0C1106.2 644.8 1105.4 667.0 1108.6 675.6C1110.6 680.9 1121.0 681.1 1122.0 675.6C1124.7 660.7 1124.0 615.0 1122.0 601.1Z" fill="#fff" filter="url(#bl2)"/>
<path d="M1079.3 615.9C1088.9 595.9 1114.5 621.7 1131.0 626.3C1144.6 630.0 1148.4 635.7 1162.1 638.7C1176.6 641.8 1188.6 642.2 1203.5 641.8C1217.5 641.4 1225.0 639.7 1236.6 636.6C1247.5 633.7 1251.5 627.5 1261.4 626.3C1271.4 625.0 1276.1 627.5 1286.3 630.4C1299.5 634.1 1313.2 638.7 1327.6 644.9C1341.2 650.7 1346.3 654.8 1358.7 661.4C1371.1 668.1 1379.8 671.2 1389.7 678.0C1398.6 684.1 1404.0 685.8 1408.4 695.6C1413.3 706.8 1430.8 732.0 1414.6 733.9C1348.8 741.5 1146.4 757.5 1079.3 733.9C1032.6 717.4 1069.0 637.4 1079.3 615.9Z" fill="#fff" filter="url(#bl4)"/>
<path d="M790.3 451.8C792.8 444.1 798.7 438.2 805.6 431.3C812.6 424.4 817.2 421.5 824.9 417.2C832.4 412.9 836.4 411.4 844.1 409.5C851.8 407.6 855.6 407.7 863.3 407.6C871.0 407.4 874.5 408.3 882.6 408.8C891.5 409.5 899.2 409.9 908.2 410.8C916.3 411.6 921.0 411.3 927.4 413.3C933.4 415.2 936.4 416.9 940.3 421.0C944.1 425.1 944.4 428.3 946.7 433.8C949.2 440.0 950.5 444.2 953.1 451.8C955.6 459.5 956.9 464.9 959.5 472.3C961.9 479.4 963.3 483.1 965.9 489.0C968.3 494.5 970.3 496.7 972.3 501.8C974.4 506.9 976.2 509.5 976.2 514.6C976.2 519.7 974.8 522.4 972.3 527.4C969.7 532.6 965.1 533.9 963.3 540.3C960.8 549.2 972.8 569.5 959.5 572.3C929.0 578.7 841.2 574.8 810.8 572.3C805.4 571.9 809.3 565.0 807.6 560.0C805.8 554.9 803.4 552.5 801.8 546.7C799.6 538.9 798.2 531.3 796.7 521.0C795.1 510.8 794.9 505.6 794.1 495.4C793.3 485.1 793.6 478.5 792.8 469.7C792.2 462.2 787.8 459.0 790.3 451.8Z" fill="#fff" filter="url(#bl2)"/>
<path d="M794.1 453.1C796.4 446.0 801.2 441.0 807.6 434.5C814.0 427.9 818.7 424.7 826.2 420.4C833.4 416.1 837.3 414.6 844.7 412.7C852.2 410.8 855.8 410.9 863.3 410.8C870.9 410.6 874.5 411.5 882.6 412.1C891.5 412.7 899.5 413.1 908.2 414.0C915.8 414.8 920.3 414.6 926.2 416.5C931.6 418.3 934.2 419.9 937.7 423.6C941.2 427.3 941.4 430.1 943.5 435.1C945.9 441.0 947.3 445.5 949.9 453.1C952.4 460.8 953.7 466.2 956.3 473.6C958.7 480.7 960.1 484.4 962.7 490.3C965.1 495.8 967.2 498.2 969.1 503.1C970.9 507.8 972.3 510.0 972.3 514.6C972.3 519.2 971.3 521.6 969.1 526.2C966.8 531.0 962.9 532.9 960.8 539.0C958.3 545.7 965.8 558.8 956.9 560.0C926.5 564.2 839.2 562.7 808.8 560.0C803.0 559.5 806.3 552.3 805.0 546.7C803.2 538.9 801.4 531.3 799.9 521.0C798.3 510.8 798.1 505.6 797.3 495.4C796.5 485.1 796.7 478.2 796.0 469.7C795.5 462.7 791.9 459.8 794.1 453.1Z" fill="#fff"/>
<path d="M463.4 745.7C466.3 734.7 482.1 746.1 490.3 747.8C496.8 749.1 498.6 751.9 504.8 754.0C511.0 756.1 516.6 757.7 521.4 758.1C524.5 758.4 525.5 756.8 528.6 756.1C536.9 754.2 549.7 751.5 562.8 748.8C575.8 746.1 583.5 745.5 593.8 742.6C602.8 740.1 606.2 738.1 614.5 734.3C622.8 730.6 626.9 727.3 635.2 724.0C643.5 720.7 647.4 718.2 655.9 717.8C664.4 717.4 671.4 719.2 677.6 721.9C682.7 724.1 682.9 727.5 687.0 731.2C691.3 735.2 694.4 737.0 699.4 741.6C704.3 746.1 708.1 750.3 711.8 754.0C714.4 756.6 714.7 759.8 718.0 760.2C721.3 760.6 724.3 758.5 728.3 756.1C734.6 752.3 739.8 746.8 749.0 741.6C759.4 735.8 767.7 731.6 780.1 727.1C792.5 722.5 797.8 721.1 811.1 718.8C825.6 716.3 840.1 715.5 852.5 714.7C861.2 714.1 871.9 706.1 873.2 714.7C877.4 742.0 927.6 833.1 873.2 851.3C791.3 878.6 545.4 872.4 463.4 851.3C420.5 840.2 458.1 766.4 463.4 745.7Z" fill="#fff" filter="url(#bl10)"/>
<path d="M874.8 685.7C872.8 689.0 884.8 697.4 891.4 706.4C898.0 715.5 902.6 720.5 907.9 731.2C913.3 742.0 919.5 755.2 918.3 760.2C917.1 765.2 901.7 753.6 901.7 756.1C901.7 758.5 911.3 769.3 918.3 772.6C925.3 775.9 935.2 780.2 936.9 772.6C939.0 763.5 935.7 743.6 928.6 727.1C921.6 710.5 912.5 698.1 901.7 689.8C892.7 682.9 876.9 682.4 874.8 685.7Z" fill="#fff" filter="url(#bl4)"/>
<path d="M1036.3 658.8C1040.8 655.1 1052.8 652.6 1057.0 658.8C1061.1 665.0 1059.9 683.6 1057.0 689.8C1054.4 695.3 1047.0 692.3 1042.5 689.8C1037.9 687.4 1035.4 683.6 1034.2 677.4C1032.9 671.2 1031.7 662.5 1036.3 658.8Z" fill="#fff" filter="url(#bl4)"/>
</g>
<g id="Lblack2">
<path d="M920.0 214.2C917.0 215.0 911.4 216.6 905.2 218.4C897.6 220.5 891.1 222.2 881.7 225.1C872.3 227.9 867.3 229.6 858.3 232.6C849.2 235.6 844.5 238.0 836.4 240.2C828.8 242.2 825.0 242.2 818.0 243.5C810.9 244.9 807.2 244.5 801.2 246.9C795.2 249.2 793.2 251.4 787.8 255.3C781.7 259.6 777.7 263.7 771.0 268.7C764.3 273.7 760.9 276.1 754.2 280.4C747.5 284.8 744.2 286.5 737.4 290.5C730.7 294.5 725.4 297.7 720.7 300.6C717.8 302.3 716.7 302.9 714.0 304.8C709.9 307.4 705.2 310.1 700.5 314.0C695.9 317.8 694.2 319.4 690.5 324.1C686.4 329.1 684.1 335.6 680.4 339.2C677.7 341.7 674.2 338.7 672.0 341.7C669.8 344.7 671.7 349.3 669.5 354.3C667.1 359.5 663.1 362.3 660.3 367.7C657.4 373.0 658.3 376.7 655.2 381.1C652.2 385.5 648.7 385.8 645.2 389.5C641.6 393.2 639.6 394.7 637.6 399.6C635.4 404.9 635.8 411.3 634.3 416.3C633.1 420.1 632.5 421.6 630.1 424.7C627.2 428.4 622.5 432.4 620.0 434.8C619.0 435.7 618.0 436.4 617.5 436.8" fill="none" stroke="#000" stroke-width="2.2"/>
<path d="M1297.6 409.5C1299.5 411.4 1303.0 416.0 1307.0 418.8C1310.9 421.7 1313.2 422.2 1317.3 424.0C1321.4 425.9 1323.7 425.7 1327.6 428.2C1333.0 431.5 1338.0 435.2 1344.2 440.6C1350.4 446.0 1353.0 448.6 1358.7 455.1C1364.5 461.7 1367.8 466.7 1373.2 473.7C1378.5 480.6 1381.0 483.9 1385.6 490.2C1390.1 496.6 1393.9 502.5 1395.9 505.6" fill="none" stroke="#000" stroke-width="2.2"/>
<path d="M1219.0 265.7C1235.9 262.8 1247.0 265.2 1265.6 264.7C1279.5 264.3 1287.1 265.1 1298.7 263.6C1305.9 262.7 1308.7 261.7 1315.2 258.5C1321.1 255.5 1321.9 252.3 1327.6 249.1C1332.5 246.5 1334.8 245.7 1340.1 245.0C1344.4 244.4 1346.6 244.1 1350.4 246.0C1354.0 247.8 1355.3 249.5 1356.6 253.3C1358.6 258.6 1358.1 262.3 1358.7 268.8C1359.4 276.6 1360.1 279.6 1359.7 287.4C1359.2 297.6 1358.6 302.1 1356.6 312.3C1355.1 320.2 1354.3 323.3 1351.4 330.9C1348.2 339.8 1346.4 343.1 1342.1 351.6C1338.1 359.6 1336.5 362.6 1331.8 370.2C1326.9 378.2 1325.1 381.4 1319.4 388.8C1314.7 394.9 1312.0 397.5 1307.0 402.3C1303.4 405.7 1302.3 407.8 1297.6 409.5C1287.0 413.4 1276.5 414.3 1261.4 418.8C1249.1 422.6 1243.1 426.1 1232.5 429.2C1225.7 431.2 1222.7 431.0 1215.9 432.3C1210.7 433.3 1207.2 438.5 1203.5 434.8C1199.1 430.4 1201.7 421.8 1197.3 413.7C1192.8 405.6 1188.5 404.4 1182.8 397.1C1176.3 388.7 1172.9 386.0 1168.3 376.4C1163.2 365.8 1162.4 361.1 1160.0 349.5C1158.1 340.1 1157.5 336.3 1157.9 326.8C1158.3 318.8 1158.7 315.4 1162.1 308.1C1165.8 300.3 1168.4 297.7 1174.5 291.6C1181.5 284.6 1184.6 282.1 1193.1 277.1C1203.4 271.1 1207.3 267.7 1219.0 265.7Z" fill="#000"/>
<path d="M1232.5 429.2C1234.9 426.9 1254.9 419.6 1261.4 418.8C1267.8 418.1 1270.6 421.7 1275.9 424.0C1281.2 426.4 1291.9 431.3 1296.6 434.4C1301.3 437.5 1303.8 440.7 1307.0 444.7C1310.1 448.8 1313.3 456.3 1317.3 461.3C1321.3 466.2 1333.5 476.1 1333.9 477.8C1334.2 479.5 1323.4 473.6 1319.4 472.7C1315.3 471.7 1309.1 470.5 1307.0 471.6C1304.8 472.7 1303.2 476.8 1304.9 479.9C1306.7 483.3 1316.3 490.0 1319.4 494.4C1322.5 498.7 1331.2 506.7 1325.6 508.9C1320.0 511.0 1290.5 513.2 1282.1 508.9C1273.7 504.5 1274.0 487.0 1269.7 479.9C1265.4 472.8 1256.4 465.8 1253.1 461.3C1250.1 457.0 1245.5 450.8 1248.0 449.9C1250.5 449.0 1268.3 456.2 1269.7 455.1C1271.1 454.0 1261.0 445.8 1257.3 442.6C1253.6 439.5 1248.6 436.4 1244.9 434.4C1241.1 432.4 1230.0 431.5 1232.5 429.2Z" fill="#000"/>
<path d="M1182.8 246.0L1203.5 257.4L1219.0 265.7L1215.9 267.2L1199.3 259.5L1182.8 250.6Z" fill="#000"/>
<path d="M1182.8 269.2L1197.3 270.9L1215.9 267.6L1193.1 277.1Z" fill="#000"/>
<path d="M620.5 440.0C619.2 442.0 616.2 445.7 613.8 450.1C611.5 454.4 610.5 457.1 608.8 461.8C607.1 466.5 606.3 469.0 605.4 473.6C604.6 478.1 606.6 482.2 604.6 484.5C602.6 486.7 599.1 484.1 595.4 485.0C591.7 485.8 588.4 486.2 586.1 488.7C583.9 491.1 585.6 494.2 584.0 497.0C582.3 499.9 579.1 500.2 577.8 502.9C576.4 505.6 576.7 508.0 577.2 510.5C577.7 512.9 580.5 513.2 580.3 515.5C580.0 517.9 577.4 519.5 576.1 522.2C574.7 524.9 574.6 526.6 573.6 528.9C572.6 531.1 572.2 531.9 571.0 534.0C569.4 537.0 567.0 539.5 565.2 544.0C563.0 549.4 561.8 553.8 560.1 560.8C558.5 567.9 557.3 573.2 556.8 579.3C556.4 584.2 557.8 587.3 557.6 591.0C557.5 593.9 557.3 595.2 555.9 597.7C554.4 600.6 550.9 602.2 550.1 605.3C549.2 608.3 550.3 609.9 551.7 612.8C553.4 616.3 556.3 619.4 558.5 622.9C560.4 626.0 563.0 627.9 562.7 630.4C562.3 633.0 559.7 634.0 556.8 635.5C553.6 637.1 550.1 637.7 546.7 638.8C543.9 639.8 542.4 639.6 540.0 641.3C537.0 643.5 534.6 645.8 531.6 649.7C528.3 654.1 525.2 657.4 523.2 663.2C521.2 668.9 521.9 675.2 521.5 678.3" fill="none" stroke="#000" stroke-width="2.2"/>
<path d="M631.4 446.4C633.6 445.3 636.5 445.8 637.0 447.6C637.5 449.3 635.5 452.1 634.0 455.1C632.3 458.3 630.4 459.8 628.9 463.5C627.4 467.2 626.7 469.5 626.4 473.6C626.1 477.6 627.8 480.6 627.2 483.6C626.8 486.1 625.6 487.3 623.9 488.7C622.2 490.0 620.4 491.7 618.9 490.3C617.3 489.0 616.3 485.6 616.3 481.9C616.3 478.3 617.9 475.9 618.9 471.9C619.9 467.9 620.0 465.5 621.4 461.8C622.7 458.1 623.6 456.5 625.6 453.4C627.6 450.3 629.2 447.6 631.4 446.4Z" fill="#000"/>
<path d="M642.7 449.2C644.3 447.7 647.3 448.6 647.7 450.4C648.2 452.2 646.3 455.2 644.9 458.5C643.5 461.7 641.6 463.3 640.7 466.8C639.8 470.4 641.0 474.1 640.3 476.1C639.9 477.3 638.2 477.9 637.3 476.9C636.1 475.6 634.5 472.7 634.5 469.4C634.5 466.0 635.8 463.9 637.3 460.1C639.0 456.1 640.6 451.2 642.7 449.2Z" fill="#000"/>
<path d="M657.4 440.0C661.5 436.6 672.6 438.0 675.9 440.0C679.3 442.0 674.2 445.8 674.2 450.1C674.2 455.4 677.2 464.8 675.9 466.8C674.6 468.9 670.5 458.8 667.5 460.1C664.5 461.5 663.1 467.7 660.8 473.6C658.5 479.6 658.0 483.3 655.8 490.3C653.4 497.7 649.4 504.8 649.1 510.5C648.8 514.6 652.7 515.0 654.1 518.9C655.8 523.6 656.1 528.3 657.4 534.0C658.8 539.6 662.5 546.7 660.8 547.4C659.1 548.1 653.4 540.3 649.1 537.3C645.2 534.6 641.3 535.6 639.0 532.3C636.6 528.9 637.8 525.5 637.3 520.5C636.8 515.5 635.8 512.1 636.5 507.1C637.1 502.1 638.6 500.2 640.7 495.4C642.9 490.3 645.1 487.8 647.4 481.9C650.4 474.2 653.8 465.2 655.8 456.8C657.4 449.9 653.4 443.4 657.4 440.0Z" fill="#000"/>
<path d="M616.3 481.9C617.0 480.6 621.4 485.6 623.9 488.7C626.4 491.7 627.1 493.4 628.9 497.0C630.8 500.7 631.9 502.7 633.1 507.1C634.5 511.8 635.5 517.2 635.6 520.5C635.7 522.1 634.9 525.2 634.0 523.9C633.0 522.6 632.3 517.9 630.6 513.8C628.9 509.8 627.6 507.4 625.6 503.8C623.6 500.2 622.1 499.2 620.5 495.4C618.7 491.0 615.7 483.3 616.3 481.9Z" fill="#000"/>
<path d="M594.5 489.5C595.0 486.8 597.7 487.1 600.4 486.6C603.1 486.2 606.1 485.6 608.0 487.3C609.8 489.1 608.6 492.1 609.6 495.4C610.8 499.0 612.3 502.8 613.8 505.4C614.8 507.2 617.9 508.5 617.2 508.8C616.5 509.1 612.8 508.1 610.5 507.1C608.1 506.1 605.4 503.1 605.4 503.8C605.4 504.4 608.3 508.0 610.5 510.5C612.7 513.0 616.3 515.3 616.3 516.3C616.3 517.3 612.7 516.7 610.5 515.5C608.0 514.2 606.3 512.3 603.8 509.6C601.2 506.9 599.6 505.7 597.9 502.1C596.0 498.1 594.0 492.6 594.5 489.5Z" fill="#000"/>
<path d="M571.0 534.0C572.4 535.3 572.6 542.0 573.6 547.4C574.6 552.8 574.4 556.8 576.1 560.8C577.5 564.3 579.1 566.5 581.9 567.5C584.8 568.5 587.3 566.8 590.3 565.8C593.3 564.8 594.0 561.9 597.0 562.5C600.4 563.2 603.1 566.5 607.1 569.2C611.1 571.9 613.5 574.4 617.2 575.9C620.5 577.2 624.2 575.4 625.6 576.7C626.9 578.1 625.2 580.4 623.9 582.6C622.6 584.8 620.8 585.4 618.9 587.7C616.8 590.0 615.5 594.4 613.8 594.4C612.1 594.4 612.5 590.0 610.5 587.7C608.5 585.3 607.1 583.5 603.8 582.6C600.4 581.8 597.0 585.1 593.7 583.5C590.3 581.8 589.7 576.1 587.0 574.2C584.7 572.6 583.1 574.5 580.3 574.2C577.2 573.9 574.6 574.9 571.9 572.6C569.2 570.2 568.4 566.8 566.8 562.5C565.3 558.1 564.3 555.1 564.3 550.7C564.3 546.4 565.5 544.0 566.8 540.7C568.1 537.6 569.7 532.6 571.0 534.0Z" fill="#000"/>
<path d="M550.1 605.3C550.9 602.2 554.3 597.6 555.9 597.7C557.6 597.9 556.6 603.4 558.5 606.1C560.3 608.8 561.9 609.8 565.2 611.1C568.9 612.7 572.2 613.2 576.9 613.7C581.6 614.2 584.6 614.0 588.7 613.7C592.2 613.4 598.4 610.5 597.0 612.0C595.7 613.5 587.7 618.0 581.9 621.2C576.4 624.3 572.4 626.1 568.5 627.9C566.1 629.1 564.7 631.4 562.7 630.4C560.6 629.4 560.4 626.0 558.5 622.9C556.3 619.4 553.4 616.3 551.7 612.8C550.3 609.9 549.2 608.3 550.1 605.3Z" fill="#000"/>
<path d="M695.2 447.0C700.1 444.4 725.5 441.2 729.6 440.8C732.6 440.6 738.5 441.9 736.3 443.4C734.1 444.8 713.3 452.8 707.8 455.1C702.2 457.4 682.2 467.7 680.9 466.8C679.7 466.0 690.3 449.6 695.2 447.0Z" fill="#000"/>
<path d="M729.6 440.0C732.3 438.0 739.7 438.0 741.3 440.0C743.0 442.0 740.0 446.1 738.0 450.1C735.6 454.8 731.6 458.8 729.6 463.5C727.9 467.4 727.6 469.9 727.9 473.6C728.3 477.2 731.9 479.9 731.3 481.9C730.6 484.0 726.6 485.3 724.6 483.6C722.6 481.9 721.5 478.0 721.2 473.6C720.9 468.9 721.5 464.8 722.9 460.1C724.2 455.6 726.6 454.1 727.9 450.1C729.3 446.0 726.9 442.0 729.6 440.0Z" fill="#000"/>
<path d="M715.3 470.2C718.0 470.0 719.8 474.3 717.9 476.1C716.0 477.9 705.1 481.1 701.1 483.6C697.0 486.2 691.2 492.0 687.7 495.4C684.1 498.7 677.5 505.6 674.2 508.8C671.0 512.0 663.8 519.9 663.3 519.2C662.9 518.5 668.3 507.8 670.9 503.8C673.4 499.7 679.0 492.1 682.6 488.7C686.2 485.2 693.4 480.2 697.7 477.8C702.1 475.3 712.7 470.4 715.3 470.2Z" fill="#000"/>
<path d="M714.5 482.8C716.4 482.3 720.6 482.6 720.4 483.6C720.1 484.6 715.4 487.4 712.8 490.3C710.2 493.2 704.2 501.6 701.1 505.4C697.9 509.2 692.0 514.8 689.3 518.9C686.6 522.9 683.3 531.1 680.9 535.6C678.6 540.2 672.2 553.4 671.7 552.8C671.3 552.1 675.9 536.0 677.6 530.6C679.3 525.2 681.8 516.6 684.3 512.1C686.8 507.7 693.1 500.4 696.0 497.0C698.9 493.7 703.6 488.9 706.1 487.0C708.6 485.1 712.6 483.2 714.5 482.8Z" fill="#000"/>
<path d="M720.4 484.5C721.4 483.6 724.5 482.3 724.6 484.0C724.7 485.6 722.3 493.3 721.2 497.0C720.1 500.8 717.5 508.3 716.2 512.1C714.8 516.0 712.4 522.6 711.1 525.6C709.9 528.6 707.2 535.5 706.9 534.8C706.7 534.1 708.5 524.7 709.5 520.5C710.5 516.4 713.5 507.8 714.5 503.8C715.5 499.7 716.2 492.9 717.0 490.3C717.8 487.8 719.4 485.3 720.4 484.5Z" fill="#000"/>
<path d="M729.6 481.9C729.9 479.8 734.4 481.0 735.5 482.8C736.6 484.6 737.7 491.0 738.0 495.4C738.3 499.7 737.5 510.4 737.7 515.5C737.8 520.6 738.5 529.7 738.8 534.0C739.1 538.2 740.4 547.4 740.0 547.4C739.6 547.4 736.5 538.0 735.5 534.0C734.4 529.9 732.4 521.9 732.1 517.2C731.8 512.5 733.3 503.4 733.0 498.7C732.6 494.0 729.3 484.1 729.6 481.9Z" fill="#000"/>
<path d="M737.1 478.6C737.0 476.5 738.6 468.5 740.5 468.5C742.4 468.5 748.4 474.8 751.4 478.6C754.4 482.4 760.4 492.2 763.2 497.0C766.0 501.9 772.6 513.5 772.4 514.7C772.2 515.8 764.5 508.2 761.5 505.4C758.5 502.6 752.4 496.5 749.7 493.7C747.0 490.9 743.0 486.5 741.3 484.5C739.7 482.4 737.3 480.7 737.1 478.6Z" fill="#000"/>
<path d="M738.8 444.2C738.5 442.9 743.7 444.8 746.4 446.7C749.9 449.2 752.8 454.9 756.4 456.8C759.6 458.4 761.4 456.7 764.8 455.9C769.9 454.8 776.6 450.1 781.6 450.9C786.6 451.7 787.6 455.6 790.0 460.1C792.4 464.7 793.2 468.9 793.7 473.6C794.1 477.8 793.3 479.6 792.5 483.6C791.8 487.7 791.2 494.0 790.0 493.7C788.8 493.4 788.2 486.8 786.6 481.9C785.0 476.6 784.0 471.2 781.6 466.8C779.7 463.3 778.3 461.8 774.9 460.1C771.5 458.5 768.4 458.5 764.8 458.5C761.6 458.4 760.4 460.7 757.3 459.8C753.9 458.8 751.7 456.5 748.1 453.4C744.4 450.3 739.2 445.5 738.8 444.2Z" fill="#000"/>
<path d="M808.5 599.4C811.1 597.2 818.9 596.7 825.2 595.2C831.4 593.7 837.0 588.7 840.0 591.8C843.0 595.0 843.0 606.6 840.0 611.1C837.0 615.7 831.4 612.9 825.2 614.5C818.9 616.2 814.2 618.0 808.5 619.5C803.6 620.8 798.1 623.1 796.7 622.0C795.4 621.0 799.1 617.3 801.7 614.5C804.8 611.3 810.5 609.1 811.8 606.1C813.1 603.2 806.0 601.4 808.5 599.4Z" fill="#000"/>
<path d="M966.0 438.3C971.8 436.3 986.4 436.0 992.8 438.3C997.9 440.2 996.7 445.0 997.9 450.1C999.0 455.1 999.4 458.8 998.7 463.5C998.0 468.0 997.0 470.2 994.5 473.6C992.0 476.9 989.8 478.4 986.1 480.3C982.4 482.1 978.9 483.0 976.0 482.8C973.8 482.7 972.0 481.6 971.8 479.4C971.7 477.2 975.4 474.7 975.2 471.9C975.0 469.0 972.9 467.9 971.0 465.2C969.0 462.1 966.6 460.1 965.1 456.8C963.7 453.5 963.3 452.0 963.5 448.4C963.6 444.7 961.9 439.7 966.0 438.3Z" fill="#000"/>
<path d="M1024.7 438.3C1040.5 435.3 1080.1 434.6 1095.2 438.3C1103.0 440.2 1098.9 449.7 1100.2 456.8C1101.5 463.7 1102.9 469.2 1101.9 473.6C1101.1 477.0 1097.8 476.3 1095.2 478.6C1092.5 480.9 1092.1 483.7 1088.5 485.3C1083.8 487.3 1077.7 487.7 1071.7 488.7C1066.1 489.6 1062.3 489.2 1058.3 490.3C1055.1 491.3 1054.9 494.8 1051.5 494.5C1047.5 494.2 1043.5 490.5 1038.1 488.7C1032.8 486.8 1029.1 487.3 1024.7 485.3C1020.6 483.4 1018.5 482.6 1016.3 478.6C1014.1 474.6 1013.8 470.2 1013.8 465.2C1013.8 460.1 1014.4 458.1 1016.3 453.4C1018.5 448.1 1017.6 439.7 1024.7 438.3Z" fill="#000"/>
<path d="M1120.0 488.7C1118.3 484.1 1112.2 488.7 1108.6 490.3C1105.0 492.0 1103.9 493.6 1101.9 497.0C1099.5 501.1 1098.2 505.1 1096.8 510.5C1095.5 515.8 1096.8 519.2 1095.2 523.9C1093.5 528.6 1092.2 530.5 1088.5 534.0C1084.4 537.7 1079.7 539.0 1075.0 542.3C1070.6 545.5 1067.0 547.7 1065.0 550.7C1063.4 553.1 1063.6 555.1 1065.0 557.4C1066.3 559.8 1069.7 560.1 1071.7 562.5C1073.7 564.8 1075.7 566.5 1075.0 569.2C1074.4 571.9 1072.0 574.4 1068.3 575.9C1064.3 577.6 1058.3 575.9 1054.9 577.6C1052.1 579.0 1051.5 581.1 1051.5 584.3C1051.5 587.7 1052.9 590.4 1054.9 594.4C1056.9 598.4 1058.4 600.5 1061.6 604.4C1065.0 608.5 1069.0 610.5 1071.7 614.5C1074.2 618.2 1075.0 621.2 1075.0 624.6C1075.0 627.7 1073.4 629.3 1071.7 631.3C1070.1 633.2 1067.0 632.1 1066.6 634.6C1066.3 637.3 1067.7 641.3 1070.0 644.7C1072.3 648.1 1076.0 648.1 1078.4 651.4C1080.7 654.8 1080.3 657.3 1081.7 661.5C1083.4 666.3 1082.1 672.8 1086.8 675.6C1091.5 678.4 1100.9 679.1 1105.2 675.6C1109.6 672.1 1108.6 665.6 1108.6 658.1C1108.6 649.6 1105.2 643.0 1105.2 633.0C1105.2 622.9 1108.6 617.9 1108.6 607.8C1108.6 597.7 1107.2 592.7 1105.2 582.6C1103.2 572.6 1098.5 565.8 1098.5 557.4C1098.5 549.9 1101.4 547.2 1105.2 540.7C1109.5 533.3 1117.1 530.6 1120.0 520.5C1123.0 510.1 1122.3 494.7 1120.0 488.7Z" fill="#000"/>
<path d="M820.0 587.7C822.0 583.3 825.0 578.1 830.1 572.6C835.1 567.0 838.8 563.8 845.2 560.0C851.5 556.1 855.2 554.9 861.9 553.3C868.7 551.6 871.7 552.3 878.7 551.6C887.1 550.7 893.8 550.9 903.9 549.1C914.0 547.2 919.0 545.4 929.1 542.3C939.1 539.3 945.8 537.0 954.2 534.0C961.4 531.4 964.3 528.6 971.0 527.2C977.7 525.9 981.1 529.6 987.8 527.2C994.5 524.9 998.5 520.2 1004.6 515.5C1010.5 510.9 1013.0 507.4 1018.0 503.8C1022.6 500.4 1027.2 495.7 1029.7 497.0C1032.2 498.4 1030.9 504.8 1030.6 510.5C1030.2 516.5 1028.2 521.2 1028.1 527.2C1027.9 532.9 1028.4 535.2 1029.7 540.7C1031.4 547.4 1034.1 553.4 1036.4 560.8C1038.7 567.8 1040.8 572.0 1041.5 577.6C1042.0 582.2 1041.1 586.8 1039.8 588.5C1038.5 590.2 1036.2 587.9 1034.8 586.0C1032.4 582.8 1030.7 577.6 1028.1 572.6C1025.4 567.5 1025.0 564.5 1021.3 560.8C1017.7 557.1 1013.0 554.8 1009.6 554.1C1007.1 553.6 1007.1 557.4 1004.6 557.4C1001.9 557.4 999.0 556.6 996.2 554.1C993.2 551.4 992.5 545.4 989.5 544.0C986.4 542.7 984.8 546.7 981.1 547.4C977.4 548.1 975.1 548.5 971.0 547.4C966.6 546.2 964.8 541.5 959.3 541.5C952.6 541.5 945.2 545.2 937.4 547.4C930.4 549.4 926.7 550.4 920.7 552.4C915.0 554.3 911.3 555.1 907.2 557.4C903.8 559.5 903.6 564.2 900.5 564.2C897.5 564.2 896.2 559.3 892.1 557.4C887.8 555.4 884.5 554.4 878.7 554.1C872.7 553.8 868.3 554.1 861.9 555.8C855.6 557.4 852.2 558.8 846.8 562.5C841.5 566.2 839.1 569.2 835.1 574.2C831.1 579.3 829.7 583.6 826.7 587.7C824.3 590.8 821.3 594.4 820.0 594.4C818.7 594.4 818.8 590.2 820.0 587.7Z" fill="#000"/>
<path d="M820.0 591.8C821.7 589.2 824.9 593.6 828.4 595.2C832.8 597.2 835.9 599.8 841.8 601.9C848.5 604.3 855.2 605.8 861.9 606.9C867.5 607.9 869.7 607.7 875.4 607.4C881.1 607.2 885.4 607.4 890.5 605.8C895.2 604.2 896.3 602.1 900.5 599.4C905.2 596.4 908.6 594.7 914.0 591.0C919.3 587.3 922.7 585.3 927.4 580.9C932.1 576.6 933.4 573.9 937.4 569.2C941.5 564.5 943.8 560.5 947.5 557.4C950.5 555.0 952.4 554.4 955.9 554.1C959.4 553.8 965.5 554.4 965.1 555.8C964.8 557.1 958.4 558.5 954.2 560.8C950.0 563.2 947.9 564.5 944.2 567.5C940.5 570.5 938.1 572.2 935.8 575.9C933.4 579.6 932.8 582.3 932.4 586.0C932.1 589.6 932.0 591.4 934.1 594.4C936.4 597.7 945.5 600.9 944.2 602.8C942.8 604.6 932.8 603.1 927.4 603.6C923.1 604.0 918.7 603.8 917.3 605.3C916.0 606.8 918.2 609.8 920.7 611.1C924.0 613.0 928.3 614.5 934.1 614.5C940.1 614.5 946.8 611.0 950.9 611.1C953.1 611.2 952.9 616.3 954.2 615.3C955.6 614.3 955.6 609.0 957.6 606.1C959.6 603.3 962.3 604.0 964.3 601.1C966.8 597.4 967.8 592.3 970.2 587.7C972.4 583.3 973.5 579.9 976.0 577.6C978.2 575.6 980.7 577.6 982.8 575.9C984.8 574.2 984.4 571.9 986.1 569.2C988.5 565.5 990.8 559.8 994.5 557.4C998.1 555.2 1002.4 554.1 1004.6 557.4C1006.7 560.8 1004.7 567.5 1005.4 574.2C1006.1 580.9 1007.8 584.3 1007.9 591.0C1008.1 597.7 1007.9 601.7 1006.2 607.8C1004.6 613.8 1003.2 616.5 999.5 621.2C995.8 625.9 993.4 628.0 987.8 631.3C982.1 634.6 977.7 636.3 971.0 638.0C964.3 639.7 960.9 640.0 954.2 639.7C947.5 639.3 943.5 638.3 937.4 636.3C931.5 634.3 929.4 632.4 924.0 629.6C918.7 626.7 916.3 624.0 910.6 622.0C904.9 620.1 901.8 621.2 895.5 619.9C889.1 618.5 885.4 617.4 878.7 615.3C872.0 613.3 869.2 611.2 861.9 609.5C853.6 607.4 845.2 605.4 836.8 605.3C829.6 605.1 823.4 611.3 820.0 608.6C816.6 605.9 818.3 594.5 820.0 591.8Z" fill="#000"/>
<path d="M835.9 635.5C838.5 634.6 842.9 634.8 846.8 637.1C851.0 639.7 852.2 644.5 856.9 648.1C861.6 651.6 864.5 652.4 870.3 654.8C877.0 657.4 881.7 659.8 890.5 661.5C899.2 663.2 905.9 662.5 914.0 663.2C921.0 663.7 927.6 663.0 930.7 664.8C933.5 666.4 931.9 670.2 929.9 672.4C927.9 674.5 924.8 675.3 920.7 675.6C910.4 676.2 889.5 677.4 878.7 675.6C872.6 674.5 872.0 669.3 867.0 666.5C861.9 663.7 855.2 659.7 853.6 661.5C851.9 663.3 859.6 672.8 858.6 675.6C857.6 678.4 850.9 678.1 848.5 675.6C846.2 673.1 848.5 668.0 846.8 663.2C845.2 658.3 842.7 655.8 840.1 651.4C837.7 647.2 835.1 644.5 834.3 641.3C833.6 638.9 833.5 636.3 835.9 635.5Z" fill="#000"/>
<path d="M820.0 648.1C822.0 644.2 826.4 652.8 830.1 656.4C833.8 660.1 835.8 662.7 838.5 666.5C841.0 670.1 847.2 673.8 843.5 675.6C839.8 677.4 824.7 681.1 820.0 675.6C815.3 670.1 818.0 651.9 820.0 648.1Z" fill="#000"/>
<path d="M1398.0 508.3C1396.6 508.6 1382.8 510.1 1383.5 511.4C1384.3 512.7 1402.6 518.3 1405.3 521.1C1407.9 523.9 1409.1 535.0 1410.4 539.3C1411.8 543.6 1417.4 560.0 1418.7 564.2C1420.1 568.3 1423.6 578.5 1423.9 580.7C1424.2 583.0 1422.4 586.3 1421.8 586.9C1421.2 587.6 1417.4 585.6 1417.7 587.4C1418.0 589.2 1423.6 601.3 1424.9 605.6C1426.3 609.9 1430.2 626.3 1431.1 630.4C1432.1 634.5 1434.2 644.6 1434.2 647.0C1434.2 649.3 1432.3 654.0 1431.1 654.2C1430.0 654.4 1424.2 650.0 1422.8 649.0C1421.5 648.1 1418.1 643.8 1417.7 644.9C1417.3 645.9 1418.0 656.1 1418.7 659.4C1419.4 662.7 1423.7 674.1 1424.9 678.0C1426.2 681.9 1430.5 695.6 1431.1 698.7C1431.7 701.8 1431.7 708.2 1431.1 709.0C1430.5 709.9 1426.6 708.1 1424.9 707.0C1423.3 705.8 1415.2 696.8 1414.6 697.7C1413.9 698.5 1417.8 711.6 1418.7 715.2C1419.6 718.9 1423.4 732.0 1423.9 733.9" fill="none" stroke="#000" stroke-width="2.2"/>
<path d="M1100.0 491.7C1101.8 484.9 1109.9 489.7 1116.6 489.3C1123.2 488.8 1128.6 488.6 1133.1 489.7C1136.4 490.5 1139.3 491.9 1139.3 494.8C1139.3 497.7 1136.0 500.4 1133.1 504.2C1129.8 508.5 1126.9 511.2 1122.8 516.6C1118.6 522.0 1116.1 525.7 1112.4 531.1C1108.8 536.2 1106.6 539.3 1104.1 543.5C1102.1 546.8 1100.3 555.6 1100.0 551.8C1099.2 541.4 1096.7 504.2 1100.0 491.7Z" fill="#000"/>
<path d="M1097.9 555.9C1098.7 543.4 1103.1 574.9 1105.2 584.9C1107.0 593.5 1108.1 596.8 1108.3 605.6C1108.5 615.9 1106.8 626.3 1106.2 636.6C1105.7 645.3 1104.3 649.0 1105.2 657.3C1106.0 665.6 1109.7 671.0 1110.3 678.0C1110.9 684.1 1110.8 687.9 1108.3 692.5C1105.8 697.0 1098.4 706.3 1097.9 700.8C1095.9 673.4 1096.5 579.1 1097.9 555.9Z" fill="#000"/>
<path d="M1114.5 437.9C1109.2 441.0 1120.8 453.0 1124.8 458.6C1128.9 464.2 1137.4 470.5 1141.4 475.2C1145.4 479.8 1149.4 484.7 1151.7 489.7C1154.1 494.6 1155.8 502.1 1156.9 508.3C1158.0 514.5 1158.5 523.9 1159.0 531.1C1159.4 538.2 1159.2 549.7 1160.0 555.9C1160.8 562.1 1162.4 566.9 1164.2 572.5C1165.9 578.0 1170.3 587.6 1171.4 593.1C1172.5 598.7 1172.0 604.7 1171.4 609.7C1170.8 614.7 1168.3 621.6 1167.3 626.3C1166.2 630.9 1163.4 635.8 1164.2 640.7C1164.9 645.7 1169.8 654.2 1172.4 659.4C1175.1 664.5 1179.3 670.9 1181.7 674.9C1184.2 678.9 1189.5 684.1 1189.0 686.3C1188.5 688.4 1179.9 687.5 1178.6 689.4C1177.4 691.2 1179.6 696.1 1180.7 698.7C1181.8 701.3 1187.7 706.7 1185.9 707.0C1184.0 707.3 1172.0 701.4 1168.3 700.8C1165.2 700.2 1161.1 701.3 1161.1 702.8C1161.1 704.4 1165.3 708.6 1168.3 711.1C1171.2 713.6 1181.3 718.0 1180.7 719.4C1180.1 720.8 1166.9 718.2 1164.2 720.4C1161.4 722.6 1156.5 732.9 1162.1 733.9C1173.6 735.9 1230.2 738.8 1240.7 733.9C1251.3 728.9 1233.1 706.0 1232.5 700.8C1232.2 698.8 1236.6 700.6 1236.6 698.7C1236.6 696.5 1234.3 689.8 1232.5 686.3C1230.6 682.7 1224.2 679.5 1224.2 674.9C1224.2 670.2 1230.6 659.7 1232.5 655.2C1234.2 650.9 1235.8 648.5 1236.6 644.9C1237.4 641.3 1236.4 633.1 1237.6 631.4C1238.9 629.7 1242.7 633.7 1244.9 633.5C1247.0 633.3 1252.1 631.8 1252.1 630.4C1252.1 629.0 1246.6 626.4 1244.9 624.2C1243.2 622.0 1241.0 619.0 1240.7 615.9C1240.4 612.8 1241.4 606.4 1242.8 603.5C1244.2 600.5 1252.2 597.6 1250.0 596.2C1247.9 594.9 1232.5 595.9 1228.3 594.2C1224.1 592.5 1223.5 587.5 1222.1 584.9C1220.7 582.2 1218.8 578.5 1219.0 576.6C1219.2 574.7 1223.8 574.8 1223.1 572.5C1222.4 569.7 1216.8 562.0 1213.8 558.0C1210.9 553.9 1205.6 549.0 1203.5 545.5C1201.3 542.1 1198.1 538.5 1199.3 535.2C1200.6 531.9 1208.0 526.3 1211.8 523.8C1215.5 521.3 1221.8 520.3 1224.2 518.6C1226.5 516.9 1228.5 514.0 1227.3 512.4C1226.0 510.9 1220.1 509.4 1215.9 508.3C1211.7 507.2 1202.8 507.1 1199.3 505.2C1195.9 503.3 1193.4 498.7 1193.1 495.9C1192.8 493.1 1195.4 488.3 1197.3 486.6C1199.1 484.9 1203.8 485.3 1205.5 484.5C1207.2 483.7 1209.9 482.6 1208.7 481.4C1207.4 480.1 1201.1 478.1 1197.3 476.2C1193.4 474.4 1186.2 471.3 1182.8 469.0C1179.4 466.6 1173.9 462.7 1174.5 460.7C1175.1 458.7 1187.2 457.7 1186.9 455.5C1186.6 453.3 1176.5 448.8 1172.4 446.2C1168.4 443.6 1166.2 438.8 1160.0 437.9C1151.3 436.7 1119.8 434.8 1114.5 437.9Z" fill="#000"/>
<path d="M1257.3 437.9C1262.4 435.4 1296.4 436.7 1303.8 437.9C1307.5 438.5 1304.9 443.1 1307.0 446.2C1309.3 449.6 1315.2 456.0 1319.4 460.7C1323.6 465.4 1334.9 475.9 1334.9 477.7C1334.9 479.5 1323.9 473.3 1319.4 472.7C1314.9 472.1 1306.7 472.2 1304.9 473.5C1303.0 474.8 1305.0 478.6 1307.0 481.4C1309.1 484.4 1316.6 490.1 1319.4 493.8C1322.2 497.5 1325.9 503.4 1325.6 506.2C1325.3 509.0 1318.9 509.0 1317.3 512.4C1315.7 515.8 1314.9 524.5 1315.2 529.0C1315.5 533.5 1320.6 541.8 1319.4 542.4C1318.1 543.1 1309.9 535.0 1307.0 533.1C1304.2 531.4 1300.5 529.1 1299.7 530.0C1298.9 531.0 1300.2 535.7 1301.8 539.3C1303.5 543.2 1308.5 550.3 1311.1 555.9C1313.7 561.5 1317.0 570.8 1319.4 576.6C1321.7 582.3 1327.9 593.6 1326.6 594.2C1325.4 594.8 1315.6 584.5 1311.1 580.7C1306.6 577.0 1299.6 570.6 1296.6 569.3C1294.3 568.4 1291.7 570.1 1291.4 572.5C1291.1 574.8 1292.2 580.5 1294.5 584.9C1296.9 589.2 1302.9 596.1 1307.0 601.4C1311.0 606.7 1316.8 614.5 1321.4 620.0C1326.1 625.6 1333.5 632.9 1338.0 638.7C1342.5 644.4 1350.7 655.7 1351.4 658.3C1352.2 661.0 1344.7 655.3 1343.2 656.3C1341.6 657.2 1339.4 661.8 1341.1 664.5C1342.8 667.3 1354.4 674.3 1354.6 674.9C1354.7 675.5 1343.1 666.7 1342.1 668.7C1341.2 670.7 1346.2 682.3 1348.3 688.3C1350.5 694.4 1357.2 707.8 1356.6 709.0C1356.0 710.3 1347.9 699.3 1344.2 696.6C1340.5 694.0 1333.7 690.8 1331.8 691.4C1329.9 692.1 1330.8 697.0 1331.8 700.8C1333.0 705.6 1341.3 719.8 1340.1 723.5C1338.8 727.3 1326.6 724.0 1323.5 725.6C1320.4 727.1 1323.2 733.0 1319.4 733.9C1313.8 735.1 1292.8 735.1 1286.3 733.9C1280.8 732.8 1277.5 727.8 1275.9 725.6C1274.4 723.5 1273.7 719.4 1275.9 719.4C1278.1 719.4 1288.8 726.2 1290.4 725.6C1291.9 725.0 1287.5 719.0 1286.3 715.2C1285.0 711.5 1282.4 704.3 1282.1 700.8C1281.8 697.2 1282.0 691.8 1284.2 691.4C1286.4 691.1 1295.4 699.8 1296.6 698.7C1297.8 697.6 1294.3 689.2 1292.5 684.2C1290.6 679.2 1286.5 670.2 1284.2 665.6C1281.9 660.9 1277.9 656.7 1276.9 653.2C1276.0 649.6 1276.6 644.0 1278.0 641.8C1279.4 639.6 1283.2 638.2 1286.3 638.7C1289.4 639.1 1298.7 648.0 1298.7 644.9C1298.7 641.8 1289.7 625.7 1286.3 618.0C1282.8 610.2 1278.4 600.0 1275.9 593.1C1273.4 586.3 1270.6 577.0 1269.7 572.5C1268.9 568.6 1267.5 563.1 1269.7 563.1C1271.9 563.1 1283.1 573.5 1284.2 572.5C1285.3 571.4 1277.9 559.3 1276.9 555.9C1276.2 553.3 1275.4 549.3 1278.0 549.7C1280.9 550.2 1295.4 560.6 1296.6 559.0C1297.8 557.4 1289.4 544.8 1286.3 539.3C1283.2 533.9 1277.5 526.4 1275.9 522.8C1274.7 520.0 1273.1 515.2 1275.9 515.5C1278.7 515.8 1293.9 527.5 1294.5 524.9C1295.2 522.2 1283.8 504.8 1280.0 497.9C1276.3 491.1 1273.1 484.6 1269.7 479.3C1266.3 474.0 1260.4 467.3 1257.3 462.8C1254.2 458.3 1247.1 450.6 1249.0 449.3C1250.9 448.1 1268.5 456.2 1269.7 454.5C1270.9 452.8 1252.2 440.4 1257.3 437.9Z" fill="#000"/>
<path d="M830.0 447.9C831.0 445.8 833.1 445.1 835.1 445.4C837.2 445.6 838.9 446.9 840.3 449.2C841.9 452.1 842.8 455.0 843.5 459.5C844.1 464.1 844.1 467.7 843.5 472.3C842.8 476.8 841.9 479.0 840.3 482.6C838.6 486.1 836.9 488.5 835.1 490.3C833.9 491.5 832.4 491.9 831.3 491.5C830.1 491.2 829.1 489.9 829.4 488.3C829.9 485.5 833.5 481.7 833.8 477.4C834.2 473.2 832.3 470.8 831.3 467.2C830.3 463.9 828.9 462.9 828.7 459.5C828.5 455.6 828.7 450.8 830.0 447.9Z" fill="#000"/>
<path d="M845.4 446.7C846.3 444.6 848.6 444.2 850.5 445.4C852.6 446.7 853.8 449.6 855.6 453.1C857.9 457.4 859.9 462.1 862.1 467.2C864.1 472.0 866.0 474.4 866.5 478.7C867.1 483.1 866.5 485.0 864.6 489.0C862.7 493.1 859.2 495.6 856.9 499.2C855.0 502.3 854.1 503.8 853.1 506.9C852.1 510.0 854.1 512.3 851.8 514.6C849.2 517.2 843.8 518.5 840.3 519.7C837.7 520.7 835.9 519.2 833.8 521.0C830.3 524.4 826.2 531.3 822.3 536.4C819.1 540.7 816.7 545.4 814.6 546.7C813.0 547.7 811.5 544.7 812.1 542.8C812.8 540.0 815.3 536.6 818.5 532.6C822.1 527.9 827.4 523.3 830.0 519.7C831.3 517.9 830.2 516.5 831.3 514.6C833.3 511.0 837.2 506.9 840.3 501.8C843.3 496.7 845.1 494.8 846.7 489.0C848.2 483.1 848.2 478.7 847.9 472.3C847.7 465.9 845.9 462.1 845.4 456.9C845.0 452.6 844.4 449.0 845.4 446.7Z" fill="#000"/>
<path d="M849.2 436.4C850.0 433.1 852.7 429.5 856.9 426.2C861.5 422.6 867.7 419.5 872.3 418.5C875.6 417.7 876.7 420.9 880.0 421.0C883.3 421.2 885.9 417.8 889.0 419.1C892.1 420.4 893.4 423.5 895.4 427.4C897.4 431.4 896.7 435.1 899.2 439.0C901.8 442.8 904.1 446.0 908.2 446.7C912.3 447.3 916.7 442.4 919.7 442.2C921.8 442.0 922.9 443.4 923.6 445.4C924.6 448.3 925.4 452.6 924.9 456.9C924.4 461.3 923.3 463.2 921.0 467.2C918.7 471.3 915.6 474.4 913.3 477.4C911.7 479.6 910.3 480.0 909.5 482.6C908.5 485.6 911.3 489.8 908.2 492.8C904.1 496.9 894.4 499.7 889.0 503.1C885.4 505.3 884.1 507.7 881.3 509.5C878.8 511.0 876.9 512.1 874.9 512.1C872.9 512.1 871.3 511.0 871.0 509.5C870.8 507.9 872.1 506.2 873.6 504.4C875.9 501.5 880.0 499.0 882.6 495.4C884.9 492.0 885.2 490.3 886.4 486.4C887.9 481.3 890.5 472.6 890.3 469.7C890.0 467.3 886.8 472.6 885.1 472.3C883.5 472.1 882.0 470.6 881.9 468.5C881.8 465.9 884.9 463.3 884.5 459.5C884.1 455.6 882.9 452.6 880.0 449.2C877.1 445.9 873.3 444.9 869.7 442.8C866.6 441.0 865.4 439.0 862.1 439.0C858.7 439.0 855.6 443.3 853.1 442.8C850.5 442.3 848.5 439.5 849.2 436.4Z" fill="#000"/>
<path d="M886.4 514.6C887.7 511.8 891.5 509.3 895.4 505.6C899.7 501.5 903.1 498.5 908.2 494.1C913.3 489.7 915.9 486.9 921.0 483.8C926.0 480.9 928.3 480.4 933.8 478.7C940.3 476.8 947.4 474.7 953.1 474.2C956.9 473.9 959.9 474.5 962.1 476.2C964.2 477.8 964.7 479.8 964.0 482.6C963.2 485.6 961.2 488.2 958.2 491.5C954.7 495.4 952.3 498.5 946.7 501.8C940.5 505.4 935.1 507.1 927.4 509.5C919.7 511.9 914.6 512.2 908.2 514.0C902.7 515.5 899.2 517.3 895.4 518.5C892.8 519.3 890.8 520.5 889.0 519.7C887.2 519.0 885.4 516.8 886.4 514.6Z" fill="#000"/>
<path d="M780.0 397.9C782.6 395.9 787.7 392.8 792.8 390.3C797.9 387.7 800.1 386.9 805.6 385.1C812.1 383.1 816.5 380.2 824.9 380.0C863.7 379.0 973.1 378.5 1000.0 380.0C1017.3 381.0 968.4 383.8 959.5 387.7C954.8 389.7 960.3 397.1 955.6 399.2C950.5 401.5 943.0 399.4 933.8 399.2C924.4 399.1 917.2 398.1 908.2 398.6C900.0 399.1 894.1 400.4 889.0 401.8C885.9 402.6 885.6 404.7 882.6 405.6C878.7 406.8 874.9 408.3 869.7 407.6C864.6 406.8 861.0 404.7 856.9 401.8C852.9 398.9 852.8 394.9 849.2 392.8C845.6 390.8 843.2 392.4 839.0 391.5C833.6 390.5 829.5 387.9 822.3 387.7C815.1 387.4 807.4 390.3 803.1 390.3C801.6 390.3 801.9 387.1 800.5 387.7C795.9 389.7 784.1 398.5 780.0 400.5C779.0 401.0 779.2 398.6 780.0 397.9Z" fill="#000"/>
<path d="M523.5 662.9C521.8 665.4 518.1 670.0 515.2 675.3C512.3 680.7 512.4 684.2 509.0 689.8C505.2 696.0 500.7 700.2 496.6 706.4C492.7 712.2 490.1 715.5 488.3 720.9C486.6 725.8 486.9 728.1 487.2 733.3C487.7 739.5 489.1 744.1 490.3 751.9C491.6 759.8 492.6 765.2 493.5 772.6C494.2 779.5 493.7 782.5 494.5 789.2C495.3 795.8 495.9 799.1 497.6 805.7C499.2 812.4 500.9 816.5 502.8 822.3C504.4 827.5 505.8 829.3 506.9 834.7C508.1 840.5 507.5 845.5 509.0 851.3C510.3 856.7 511.3 858.8 514.1 863.7C517.0 868.6 518.0 872.5 523.5 876.1C529.0 879.8 534.2 880.0 542.1 882.3C550.0 884.6 555.7 885.8 562.8 887.5C568.8 888.9 571.2 889.2 577.3 890.6C583.9 892.0 592.2 893.9 595.9 894.7" fill="none" stroke="#000" stroke-width="2.2"/>
<path d="M881.0 662.9C889.3 659.2 925.3 659.4 932.8 662.9C940.2 666.4 917.1 677.1 918.3 680.5C919.5 683.9 930.3 680.6 939.0 679.9C948.5 679.2 954.7 676.6 965.9 676.8C977.1 677.0 982.9 679.3 994.9 680.9C1006.9 682.6 1015.1 684.3 1025.9 685.1C1035.5 685.7 1040.0 684.5 1048.7 684.7C1057.4 684.8 1063.2 687.1 1069.4 685.7C1074.8 684.4 1078.1 680.7 1079.7 677.4C1081.3 674.2 1076.4 672.0 1077.6 669.1C1078.9 666.2 1081.7 663.8 1085.9 662.9C1092.1 661.7 1103.7 660.0 1108.7 662.9C1113.7 665.8 1111.2 671.6 1110.8 677.4C1110.3 683.2 1109.5 686.3 1106.6 691.9C1103.7 697.5 1102.1 701.2 1096.3 705.4C1090.5 709.5 1085.5 710.3 1077.6 712.6C1069.8 714.9 1064.6 713.0 1057.0 716.7C1049.3 720.5 1045.2 729.6 1039.4 731.2C1034.1 732.7 1033.3 726.4 1028.0 725.0C1021.6 723.4 1014.7 722.7 1007.3 722.9C1000.2 723.1 997.4 724.2 990.7 726.1C984.1 727.9 980.0 732.5 974.2 732.3C968.4 732.1 966.8 728.3 961.8 725.0C956.4 721.5 953.5 718.8 947.3 714.7C941.1 710.5 938.1 707.8 930.7 704.3C922.8 700.6 915.8 700.6 907.9 696.0C900.1 691.5 896.8 688.2 891.4 681.6C886.0 674.9 872.9 666.6 881.0 662.9Z" fill="#000"/>
<path d="M1039.4 731.2C1043.9 725.0 1048.2 720.7 1057.0 716.7C1068.3 711.6 1086.8 704.9 1096.3 705.4C1102.9 705.6 1100.4 713.7 1104.6 718.8C1109.1 724.4 1114.5 727.9 1119.0 733.3C1123.1 738.1 1124.8 740.0 1127.3 745.7C1129.8 751.5 1131.5 757.7 1131.5 762.3C1131.5 765.4 1129.4 766.8 1127.3 768.5C1125.2 770.1 1122.7 768.3 1121.1 770.5C1119.0 773.4 1117.6 778.0 1117.0 783.0C1116.3 787.9 1118.8 792.1 1118.0 795.4C1117.3 798.1 1115.4 798.4 1112.8 799.5C1108.1 801.6 1094.4 802.4 1094.2 805.7C1094.0 809.0 1108.5 811.1 1111.8 816.1C1115.1 821.0 1111.8 825.2 1110.8 830.6C1109.7 835.9 1109.1 838.8 1106.6 843.0C1104.1 847.1 1101.0 847.1 1098.3 851.3C1095.2 856.0 1095.2 863.1 1091.1 866.8C1087.0 870.5 1082.8 869.5 1077.6 869.9C1072.5 870.3 1068.5 872.6 1065.2 868.8C1061.9 865.1 1064.0 858.3 1061.1 851.3C1057.8 843.2 1052.2 835.9 1048.7 828.5C1045.9 822.7 1044.3 819.4 1043.5 814.0C1042.7 808.8 1045.3 806.8 1044.5 801.6C1043.1 791.7 1038.3 775.1 1036.3 764.3C1034.9 757.5 1033.6 754.4 1034.2 747.8C1034.8 741.2 1035.1 737.1 1039.4 731.2Z" fill="#000"/>
<path d="M1181.1 662.9C1187.6 661.1 1218.9 645.9 1222.5 662.9C1228.7 692.1 1225.0 828.6 1222.5 857.5C1221.9 864.4 1210.3 854.5 1206.0 855.4C1201.6 856.3 1196.3 860.0 1193.5 863.7C1190.7 867.4 1189.5 876.5 1187.3 880.2C1185.2 884.0 1181.9 886.6 1179.1 888.5C1176.3 890.4 1172.4 890.8 1168.7 892.6C1165.0 894.5 1157.0 898.1 1154.2 900.9C1151.4 903.7 1151.9 908.9 1150.1 911.3C1148.2 913.6 1145.5 918.0 1141.8 916.4C1138.1 914.9 1130.2 904.5 1125.2 900.9C1120.3 897.4 1112.4 893.3 1108.7 892.6C1105.0 892.0 1102.0 894.3 1100.4 896.8C1098.9 899.3 1097.8 904.0 1098.3 909.2C1099.0 914.8 1102.1 926.6 1104.6 934.0C1107.0 941.5 1120.8 955.1 1114.9 958.9C1109.0 962.6 1073.0 961.4 1065.2 958.9C1058.6 956.7 1061.3 946.7 1063.2 942.3C1065.0 938.0 1075.2 933.3 1077.6 929.9C1080.1 926.5 1080.0 922.7 1079.7 919.6C1079.4 916.4 1075.3 911.7 1075.6 909.2C1075.9 906.7 1083.9 906.0 1081.8 903.0C1079.0 899.0 1062.5 887.1 1057.0 882.3C1051.6 877.7 1043.3 872.9 1044.5 870.9C1045.8 868.9 1058.2 869.5 1065.2 868.8C1072.2 868.2 1085.8 867.2 1091.1 866.8C1095.0 866.4 1096.5 865.3 1100.4 865.7C1104.6 866.2 1113.1 869.3 1119.0 869.9C1124.9 870.5 1134.8 871.4 1139.7 869.9C1144.7 868.3 1148.4 863.6 1152.2 859.5C1155.9 855.5 1160.8 848.3 1164.6 843.0C1168.3 837.7 1173.3 829.9 1177.0 824.4C1180.7 818.8 1186.3 809.5 1189.4 805.7C1192.2 802.4 1196.3 803.6 1197.7 799.5C1199.5 793.9 1200.3 776.2 1201.8 768.5C1203.4 760.7 1213.6 753.4 1208.0 747.8C1202.4 742.2 1171.2 735.0 1164.6 731.2C1161.5 729.5 1161.4 724.3 1163.5 722.9C1165.7 721.6 1175.8 724.4 1179.1 721.9C1182.3 719.4 1188.1 709.3 1185.3 706.4C1182.5 703.4 1161.1 704.1 1160.4 702.3C1159.8 700.4 1176.8 696.5 1181.1 694.0C1185.4 691.5 1189.7 688.5 1189.4 685.7C1189.1 682.9 1180.3 678.8 1179.1 675.3C1177.8 671.9 1176.0 664.4 1181.1 662.9Z" fill="#000"/>
<path d="M914.2 720.9C915.2 719.4 918.0 718.7 920.4 719.8C922.8 721.1 922.6 726.5 926.6 727.1C930.7 727.7 937.3 722.9 941.1 722.9C943.5 722.9 946.9 725.8 945.2 727.1C943.5 728.3 936.1 727.9 932.8 729.2C930.5 730.0 928.0 730.9 928.6 733.3C929.5 736.2 932.5 740.3 936.9 743.6C941.9 747.4 946.1 749.5 953.5 751.9C960.9 754.4 965.9 755.0 974.2 756.1C982.5 757.1 986.2 757.4 994.9 757.1C1005.2 756.7 1019.7 751.7 1025.9 754.0C1031.6 756.1 1027.2 763.1 1025.9 768.5C1024.7 773.9 1022.2 775.9 1019.7 780.9C1017.2 785.9 1016.0 789.2 1013.5 793.3C1011.3 797.0 1009.4 800.3 1007.3 801.6C1005.6 802.6 1003.6 801.4 1003.1 799.5C1002.5 796.6 1005.0 791.2 1004.2 787.1C1003.4 783.1 1002.5 780.5 999.0 778.8C995.5 777.2 989.9 778.0 986.6 778.8C984.2 779.4 984.9 783.4 982.5 783.0C980.0 782.5 977.4 779.6 974.2 776.8C970.9 773.9 969.5 771.8 965.9 768.5C960.9 763.9 956.0 759.0 949.3 754.0C942.8 749.1 938.6 747.8 932.8 743.6C927.3 739.7 923.9 736.6 920.4 733.3C917.9 731.0 916.4 729.6 915.2 727.1C914.0 724.7 913.1 722.3 914.2 720.9Z" fill="#000"/>
<path d="M928.6 762.3C928.2 759.4 935.1 763.9 939.0 766.4C944.8 770.1 950.6 776.3 957.6 780.9C964.1 785.1 968.8 784.2 974.2 789.2C979.6 794.1 981.4 798.3 984.5 805.7C987.6 813.2 988.9 817.5 989.7 826.4C990.5 835.5 989.3 842.2 988.7 851.3C988.1 860.0 988.5 868.2 986.6 872.0C985.2 874.8 980.8 872.7 979.3 869.9C977.3 865.7 977.2 859.1 976.2 851.3C975.2 843.0 975.0 835.9 974.2 828.5C973.5 822.4 973.8 817.3 972.1 814.0C970.9 811.5 968.4 810.7 965.9 811.9C963.4 813.2 961.8 817.7 959.7 820.2C958.1 822.1 957.6 825.6 955.5 824.4C953.5 823.1 951.0 817.7 949.3 814.0C947.9 810.7 945.6 807.8 947.3 805.7C948.9 803.7 956.4 805.3 957.6 803.7C958.9 802.0 955.3 800.0 953.5 797.5C950.2 792.9 946.0 787.9 941.1 780.9C936.1 773.9 929.1 765.2 928.6 762.3Z" fill="#000"/>
<path d="M1164.2 722.9C1172.2 720.4 1228.0 719.5 1240.7 722.9C1250.6 725.6 1245.6 739.5 1249.0 745.7C1252.4 751.9 1260.1 759.0 1263.5 764.3C1266.9 769.6 1273.5 779.5 1271.8 780.9C1270.1 782.3 1254.3 772.1 1252.1 773.6C1249.9 775.2 1256.0 785.6 1257.3 791.2C1258.5 796.8 1264.1 809.5 1260.4 810.9C1256.7 812.3 1236.3 798.5 1232.5 800.5C1228.6 802.6 1234.5 818.3 1234.5 824.3C1234.5 830.4 1233.4 835.9 1232.5 840.9C1231.5 845.9 1229.9 854.0 1228.3 857.5C1226.8 860.8 1224.6 863.7 1222.1 863.7C1219.6 863.7 1214.9 858.7 1211.8 857.5C1208.7 856.2 1204.2 854.8 1201.4 855.4C1198.6 856.0 1195.3 858.8 1193.1 861.6C1191.0 864.4 1188.3 870.3 1186.9 874.0C1185.5 877.7 1185.7 883.6 1183.8 886.4C1182.0 889.2 1177.1 892.2 1174.5 892.6C1171.9 893.1 1168.4 888.9 1166.2 889.5C1164.1 890.1 1162.2 894.4 1160.0 896.8C1157.8 899.1 1153.3 902.7 1151.7 905.0C1150.2 907.4 1150.9 910.6 1149.7 912.3C1148.4 914.0 1146.5 917.1 1143.5 916.4C1140.0 915.7 1131.2 910.4 1126.9 907.1C1122.6 903.9 1117.6 897.2 1114.5 894.7C1111.5 892.3 1108.4 890.6 1106.2 890.6C1104.0 890.6 1100.8 897.7 1100.0 894.7C1099.1 891.3 1096.9 871.2 1100.0 867.8C1103.1 864.4 1115.1 871.6 1120.7 871.9C1126.3 872.2 1132.6 872.0 1137.3 869.9C1141.9 867.7 1146.8 862.7 1151.7 857.5C1156.7 852.2 1165.7 841.5 1170.4 834.7C1175.0 827.9 1179.1 816.6 1182.8 811.9C1186.5 807.3 1192.7 808.0 1195.2 803.6C1197.7 799.3 1198.1 788.5 1199.3 782.9C1200.6 777.4 1202.1 771.4 1203.5 766.4C1204.9 761.4 1211.1 753.9 1208.7 749.8C1206.2 745.8 1193.6 743.5 1186.9 739.5C1180.2 735.5 1156.1 725.4 1164.2 722.9Z" fill="#000"/>
<path d="M1276.9 722.9C1282.6 719.8 1313.3 720.9 1320.4 722.9C1325.4 724.4 1318.9 730.9 1319.4 735.3C1319.9 739.8 1323.1 743.5 1323.5 749.8C1324.0 758.5 1322.8 774.0 1322.5 787.1C1322.1 800.2 1322.0 815.4 1321.4 828.5C1320.9 841.6 1320.6 855.4 1319.4 865.7C1318.2 876.1 1314.9 883.0 1314.2 890.6C1313.5 898.2 1313.7 904.4 1315.2 911.3C1316.8 918.2 1320.8 925.4 1323.5 932.0C1326.3 938.5 1329.4 944.7 1331.8 950.6C1334.2 956.4 1337.3 963.5 1338.0 967.1C1338.4 969.4 1337.7 972.5 1335.9 972.3C1334.2 972.1 1331.0 968.9 1327.6 966.1C1324.2 963.2 1318.7 959.9 1315.2 954.7C1311.8 949.5 1310.4 943.3 1307.0 935.1C1303.5 926.8 1298.7 914.5 1294.5 905.0C1290.4 895.6 1285.2 886.1 1282.1 878.1C1279.0 870.2 1276.3 862.1 1275.9 857.5C1275.7 854.0 1276.9 850.6 1280.0 850.2C1283.2 849.9 1292.0 861.3 1294.5 855.4C1297.3 849.0 1297.0 826.8 1296.6 811.9C1296.3 797.1 1294.2 778.1 1292.5 766.4C1290.9 755.8 1288.8 748.8 1286.3 741.6C1283.7 734.3 1271.3 726.0 1276.9 722.9Z" fill="#000"/>
<path d="M1273.8 907.1C1275.5 906.3 1279.4 907.5 1282.1 909.2C1284.9 910.8 1291.2 916.1 1294.5 919.5C1297.8 923.0 1304.2 930.4 1307.0 935.1C1309.7 939.7 1312.7 946.9 1315.2 954.7C1317.7 962.6 1323.4 985.5 1325.6 994.0C1327.8 1002.6 1342.4 1017.2 1331.8 1018.9C1311.4 1022.2 1192.9 1020.8 1172.4 1018.9C1165.8 1018.3 1177.0 1008.1 1178.6 1004.4C1180.3 1000.7 1183.1 991.5 1184.9 990.9C1186.6 990.4 1189.1 1001.2 1192.1 1000.2C1195.1 999.3 1204.2 988.1 1207.6 983.7C1211.1 979.3 1216.2 971.3 1218.0 967.1C1219.8 963.0 1220.2 955.3 1221.1 952.6C1221.8 950.2 1222.1 947.2 1224.2 947.5C1226.2 947.8 1233.3 952.4 1236.6 954.7C1239.9 957.1 1247.4 964.8 1249.0 965.1C1250.7 965.3 1248.2 958.7 1249.0 956.8C1249.8 954.9 1253.4 950.9 1255.2 950.6C1257.0 950.3 1261.5 955.8 1262.5 954.7C1263.4 953.6 1261.8 945.1 1262.5 942.3C1263.1 939.5 1265.8 934.6 1267.6 934.0C1269.4 933.5 1275.6 940.6 1275.9 938.2C1276.2 935.7 1270.0 919.5 1269.7 915.4C1269.4 911.5 1272.2 907.9 1273.8 907.1Z" fill="#000"/>
<path d="M1097.9 948.5C1099.4 942.1 1107.7 950.0 1112.4 954.7C1117.4 959.7 1120.1 965.5 1122.8 973.3C1125.5 981.2 1125.9 985.3 1125.9 994.0C1125.9 1003.1 1128.4 1013.9 1122.8 1018.9C1117.2 1023.8 1101.4 1028.7 1097.9 1018.9C1093.0 1004.8 1095.0 961.3 1097.9 948.5Z" fill="#000"/>
<path d="M1420.8 722.9C1421.8 726.0 1424.9 735.3 1427.0 741.6C1429.1 747.8 1431.6 754.3 1433.2 760.2C1434.7 766.0 1436.3 772.4 1436.3 776.7C1436.3 780.9 1435.4 785.4 1433.2 786.1C1431.0 786.7 1426.6 783.6 1422.8 780.9C1419.1 778.1 1413.7 771.4 1410.4 769.5C1407.8 768.0 1404.6 767.3 1403.2 769.5C1401.8 771.7 1401.4 777.3 1402.2 782.9C1403.0 789.3 1405.9 799.5 1408.4 807.8C1410.8 816.1 1413.9 825.4 1416.6 832.6C1419.4 839.9 1422.5 846.6 1424.9 851.2C1427.1 855.4 1432.2 859.2 1431.1 860.6C1430.1 861.9 1422.8 860.6 1418.7 859.5C1414.6 858.5 1407.7 853.3 1406.3 854.3C1404.9 855.4 1409.9 861.9 1410.4 865.7C1410.9 869.5 1408.4 872.4 1409.4 877.1C1410.4 881.9 1414.4 889.0 1416.6 894.7C1418.9 900.4 1421.3 905.4 1422.8 911.3C1424.4 917.1 1426.1 925.7 1426.0 929.9C1425.8 933.0 1421.8 933.0 1421.8 936.1C1421.8 939.9 1425.1 947.1 1426.0 952.6C1426.8 958.2 1427.3 965.2 1427.0 969.2C1426.7 972.5 1425.3 975.4 1423.9 976.4C1422.5 977.5 1418.9 973.9 1418.7 975.4C1418.5 977.0 1422.8 983.3 1422.8 985.8C1422.8 988.2 1418.7 987.4 1418.7 989.9C1418.7 993.3 1421.6 1001.6 1422.8 1006.5C1424.1 1011.3 1425.4 1016.8 1426.0 1018.9" fill="none" stroke="#000" stroke-width="2.0"/>
<path d="M607.6 941.6L606.6 962.3L603.5 976.7L610.7 978.8L599.3 985.0L604.5 993.3L600.4 1011.9L595.2 1032.6L592.1 1039.9L624.2 1016.1L615.9 1026.4L604.5 1057.5L594.1 1086.4L622.1 1061.6L612.8 1085.4L662.4 1060.6L656.2 1074.0L641.7 1089.5L679.0 1088.5L659.3 1100.9L642.8 1117.5L632.4 1136.1L626.2 1152.6L637.6 1142.3L638.6 1176.4L643.8 1165.1L646.9 1194.0L645.9 1213.7L670.7 1199.2L667.6 1218.9" fill="none" stroke="#000" stroke-width="1.6"/>
<path d="M1064.6 941.9C1074.1 938.2 1093.5 937.6 1104.6 941.9C1114.9 946.0 1115.6 954.2 1119.9 963.5C1124.2 972.7 1125.5 977.6 1126.1 988.1C1126.7 998.5 1124.2 1006.5 1123.0 1015.7C1122.0 1023.5 1122.4 1031.1 1119.9 1034.2C1117.5 1037.3 1114.0 1033.5 1110.7 1031.1C1106.4 1028.1 1103.9 1023.4 1098.4 1018.8C1092.9 1014.2 1089.2 1007.4 1083.0 1008.1C1076.9 1008.7 1074.9 1017.1 1067.6 1021.9C1059.6 1027.1 1052.9 1028.7 1043.0 1034.2C1033.2 1039.7 1027.0 1042.8 1018.4 1049.6C1009.8 1056.4 1005.5 1060.7 1000.0 1068.0C994.8 1075.0 992.9 1079.1 990.7 1086.5C988.6 1093.9 990.4 1098.8 989.2 1105.0C988.1 1110.4 987.4 1113.9 984.6 1117.3C981.9 1120.6 976.9 1125.6 975.4 1121.9C973.8 1118.2 975.7 1108.3 976.9 1098.8C978.1 1089.3 978.1 1083.4 981.5 1074.2C984.9 1065.0 990.1 1060.0 993.8 1052.7C996.9 1046.4 996.3 1042.2 1000.0 1037.3C1003.7 1032.4 1007.2 1032.0 1012.3 1028.1C1017.8 1023.7 1024.0 1020.1 1027.7 1015.7C1030.3 1012.6 1027.6 1009.1 1030.7 1006.5C1035.7 1002.5 1046.7 1001.9 1052.3 995.8C1057.8 989.6 1057.5 982.8 1058.4 975.8C1059.3 969.3 1055.7 966.8 1056.9 960.4C1058.1 953.6 1056.7 945.0 1064.6 941.9Z" fill="#000"/>
<path d="M1221.4 948.1C1225.0 945.9 1236.7 956.9 1239.9 957.3C1243.1 957.7 1246.3 951.5 1249.1 951.2C1252.0 950.8 1257.9 953.9 1264.5 954.2C1272.0 954.6 1305.8 955.7 1313.7 954.2C1321.6 952.8 1329.3 940.1 1332.2 941.9C1335.1 943.7 1339.1 965.7 1338.3 969.6C1337.6 973.6 1327.1 971.5 1326.0 975.8C1325.0 980.1 1327.8 999.3 1329.1 1006.5C1330.4 1013.7 1336.8 1033.5 1336.8 1037.3C1336.8 1040.6 1331.7 1040.9 1329.1 1038.8C1326.4 1036.7 1317.0 1022.6 1313.7 1018.8C1310.5 1015.1 1303.4 1005.1 1301.4 1006.5C1299.4 1008.0 1298.2 1026.1 1296.8 1031.1C1295.4 1036.2 1290.7 1045.6 1289.1 1049.6C1287.5 1053.5 1284.4 1066.4 1283.0 1065.0C1281.5 1063.5 1278.2 1040.9 1276.8 1037.3C1275.7 1034.6 1272.4 1031.9 1270.7 1034.2C1268.5 1037.1 1261.0 1057.4 1258.4 1061.9C1255.7 1066.4 1250.1 1073.4 1247.6 1072.7C1245.1 1071.9 1239.2 1058.8 1236.8 1055.7C1234.5 1052.7 1230.5 1048.3 1227.6 1046.5C1224.7 1044.7 1215.8 1040.0 1212.2 1040.4C1208.6 1040.7 1199.7 1046.4 1196.8 1049.6C1194.0 1052.8 1190.8 1063.0 1187.6 1068.0C1184.4 1073.1 1171.7 1091.4 1169.2 1092.6C1166.6 1093.9 1170.0 1079.7 1166.1 1078.8C1162.1 1077.9 1143.2 1083.9 1135.3 1085.0C1127.4 1086.0 1104.9 1088.0 1098.4 1088.0C1091.9 1088.0 1078.5 1086.0 1080.0 1085.0C1081.4 1083.9 1104.6 1080.8 1110.7 1078.8C1116.8 1076.8 1129.0 1069.7 1132.2 1068.0C1134.8 1066.7 1136.8 1064.4 1138.4 1065.0C1140.0 1065.5 1143.2 1076.2 1146.1 1072.7C1149.3 1068.7 1161.6 1040.6 1166.1 1031.1C1170.6 1021.6 1181.5 994.7 1184.5 991.1C1187.6 987.6 1189.4 1002.2 1192.2 1000.4C1195.1 998.6 1205.7 981.9 1209.1 975.8C1212.6 969.7 1217.9 950.2 1221.4 948.1Z" fill="#000"/>
<path d="M993.8 1135.7C994.5 1133.9 997.8 1123.9 1000.0 1120.3C1002.1 1116.7 1008.7 1108.5 1012.3 1105.0C1015.9 1101.4 1025.7 1092.1 1030.7 1089.6C1035.8 1087.1 1049.6 1084.0 1055.3 1083.4C1061.1 1082.9 1074.9 1084.2 1080.0 1085.0C1085.0 1085.7 1095.5 1087.6 1098.4 1089.6C1101.3 1091.5 1102.8 1099.9 1104.6 1101.9C1106.4 1103.8 1111.8 1106.8 1113.8 1106.5C1115.8 1106.1 1120.2 1101.0 1121.5 1098.8C1122.7 1096.6 1122.2 1089.1 1124.6 1088.0C1126.9 1087.0 1137.7 1088.0 1141.5 1089.6C1145.2 1091.2 1153.6 1098.3 1156.9 1101.9C1160.1 1105.5 1166.8 1116.4 1169.2 1120.3C1171.5 1124.3 1175.2 1138.2 1176.8 1135.7C1178.5 1133.2 1180.7 1102.9 1183.0 1098.8C1185.3 1094.7 1191.6 1099.4 1196.8 1100.3C1202.0 1101.2 1222.4 1104.7 1227.6 1106.5C1232.8 1108.3 1237.9 1114.8 1241.4 1115.7C1245.0 1116.6 1255.3 1112.2 1258.4 1114.2C1261.4 1116.2 1265.3 1128.1 1267.6 1132.6C1269.9 1137.1 1276.6 1153.3 1278.4 1152.6C1280.1 1151.9 1281.9 1129.2 1283.0 1126.5C1283.8 1124.3 1286.7 1131.4 1287.6 1129.6C1288.5 1127.8 1287.6 1111.5 1290.7 1111.1C1293.7 1110.7 1308.9 1122.2 1313.7 1126.5C1318.6 1130.8 1329.0 1143.3 1332.2 1148.0C1335.4 1152.7 1339.7 1161.6 1341.4 1166.5C1343.1 1171.3 1345.2 1191.9 1346.9 1189.5C1348.7 1187.2 1354.2 1150.2 1356.8 1146.5C1359.4 1142.7 1367.3 1160.3 1369.1 1157.2C1370.9 1154.2 1372.3 1127.5 1372.2 1120.3C1372.0 1113.2 1366.7 1098.2 1367.6 1095.7C1368.5 1093.2 1378.4 1099.9 1379.9 1098.8C1381.3 1097.7 1377.9 1088.1 1379.9 1086.5C1381.8 1084.9 1394.4 1085.7 1396.8 1085.0C1399.0 1084.3 1398.6 1080.5 1399.9 1080.3C1401.1 1080.2 1407.2 1085.6 1407.5 1083.4C1407.9 1081.3 1403.8 1066.6 1402.9 1061.9C1402.0 1057.2 1399.5 1046.3 1399.9 1043.4C1400.2 1040.6 1403.9 1036.9 1406.0 1037.3C1408.2 1037.6 1415.8 1044.4 1418.3 1046.5C1420.8 1048.7 1425.9 1056.1 1427.5 1055.7C1429.2 1055.4 1432.2 1049.0 1432.2 1043.4C1432.2 1037.7 1429.0 1013.0 1427.5 1006.5C1426.1 1000.1 1420.2 990.6 1419.8 988.1C1419.5 985.8 1424.1 986.4 1424.5 985.0C1424.8 983.6 1422.6 977.0 1422.9 975.8C1423.3 974.5 1427.4 976.3 1427.5 974.2C1427.7 970.3 1424.8 945.7 1424.5 941.9" fill="none" stroke="#000" stroke-width="1.8"/>
<path d="M661.5 1100.0C660.0 1101.5 646.0 1114.1 643.1 1118.5C640.1 1122.8 626.5 1150.2 626.1 1152.3C625.7 1154.3 637.5 1141.0 638.4 1143.1C639.3 1145.1 636.4 1175.1 636.9 1176.9C637.4 1178.7 643.8 1161.5 644.6 1164.6C645.4 1167.7 643.9 1211.1 646.1 1213.8C648.3 1216.5 669.3 1196.1 670.7 1196.9C672.1 1197.7 663.7 1218.2 663.0 1223.0C662.4 1227.9 661.4 1254.2 663.0 1255.3C664.7 1256.5 681.2 1237.8 683.0 1236.9C684.8 1236.0 683.6 1244.2 684.6 1244.6C685.6 1245.0 694.4 1239.3 695.3 1241.5C696.2 1243.7 692.8 1272.0 695.3 1270.7C697.9 1269.4 723.4 1226.1 726.1 1226.1C728.8 1226.1 727.1 1267.9 727.6 1270.7C728.2 1273.5 730.2 1257.8 732.3 1260.0C734.3 1262.1 750.3 1298.1 752.2 1296.9C754.2 1295.6 754.3 1249.6 755.3 1244.6C756.3 1239.6 762.9 1235.6 764.6 1236.9C766.2 1238.2 773.5 1254.6 775.3 1260.0C777.1 1265.3 784.7 1300.8 786.1 1301.5C787.5 1302.1 790.3 1268.9 792.2 1267.6C794.2 1266.4 805.7 1286.9 809.2 1286.1C812.6 1285.3 832.7 1256.5 833.8 1258.4C834.8 1260.3 819.3 1311.3 821.5 1309.2C823.6 1307.0 856.4 1235.1 859.9 1232.3C863.4 1229.4 861.3 1274.2 863.0 1275.3C864.6 1276.5 877.9 1245.7 879.9 1246.1C882.0 1246.5 885.3 1279.4 887.6 1279.9C889.9 1280.5 905.0 1252.3 907.6 1252.3C910.1 1252.3 916.9 1277.3 918.4 1279.9C919.8 1282.6 923.3 1282.4 924.5 1284.6C925.7 1286.7 931.2 1307.9 932.2 1306.1C933.2 1304.3 937.6 1269.7 936.8 1263.0C936.0 1256.4 924.2 1230.0 923.0 1226.1C921.7 1222.4 920.5 1216.4 921.4 1216.9C922.3 1217.4 932.8 1233.7 933.7 1232.3C934.6 1230.9 930.0 1201.3 932.2 1200.0C934.4 1198.7 958.9 1218.6 959.9 1216.9C960.9 1215.2 945.3 1184.1 944.5 1180.0C943.7 1175.9 948.0 1167.7 950.6 1167.7C953.3 1167.7 976.0 1180.5 976.8 1180.0C977.6 1179.5 959.0 1162.3 959.9 1161.5C960.8 1160.8 986.5 1172.0 987.6 1170.7C988.6 1169.5 969.1 1143.3 972.2 1146.1C975.3 1149.0 1022.7 1205.6 1024.5 1204.6C1026.3 1203.6 995.5 1141.5 993.7 1133.8C991.9 1126.1 1001.1 1115.1 1002.9 1112.3C1004.7 1109.5 1014.2 1101.0 1015.2 1100.0" fill="none" stroke="#000" stroke-width="1.8"/>
<path d="M846.6 667.7C846.6 663.2 851.0 658.4 854.7 660.9C858.8 663.6 861.5 673.9 866.9 681.2C872.3 688.5 876.1 692.0 881.8 697.4C887.1 702.4 889.9 703.9 895.3 708.3C900.7 712.6 904.5 713.7 908.8 719.1C913.2 724.5 913.3 728.7 917.0 735.3C921.0 742.6 924.0 747.5 929.1 755.6C934.3 763.7 938.1 769.0 942.7 775.9C946.6 781.8 954.0 787.2 952.2 790.0C950.3 792.8 939.2 793.3 933.2 790.0C927.3 786.6 926.7 780.1 922.4 773.2C918.1 766.3 915.6 761.8 911.6 755.6C907.8 749.8 906.4 747.2 902.1 742.1C897.8 736.9 894.5 735.3 889.9 729.9C885.3 724.5 883.7 721.0 879.1 715.0C874.5 709.1 871.8 706.4 866.9 700.1C862.0 693.9 858.8 690.4 854.7 683.9C850.7 677.4 846.6 672.3 846.6 667.7Z" fill="#000"/>
<path d="M846.6 736.0C850.7 735.7 859.9 736.3 868.3 738.0C876.6 739.8 880.2 741.5 888.6 744.8C898.0 748.6 914.8 756.2 915.6 757.0C916.4 757.8 902.1 751.8 892.6 748.8C883.1 745.9 877.2 744.0 868.3 742.1C859.8 740.3 852.3 740.6 848.0 739.4C846.5 739.0 845.1 736.1 846.6 736.0Z" fill="#000"/>
</g>
<g id="Lorange3">
<path d="M1168.3 246.0L1178.6 249.1L1199.3 259.5L1215.9 267.2L1197.3 270.5L1182.8 268.8L1168.3 261.6Z" fill="#cf6f2e"/>
</g>
<g id="Lfeat">
<path d="M1333.9 256.4C1337.2 258.6 1335.9 263.5 1335.9 268.8C1335.9 275.8 1335.3 278.5 1333.9 285.4C1331.8 295.1 1331.0 298.8 1327.6 308.1C1324.1 318.0 1322.2 321.6 1317.3 330.9C1312.6 339.9 1310.5 343.2 1304.9 351.6C1300.1 358.8 1298.5 361.9 1292.5 368.1C1288.8 372.0 1287.4 374.9 1282.1 375.4C1277.3 375.9 1275.3 373.6 1271.8 370.2C1267.2 365.9 1265.8 363.6 1263.5 357.8C1260.5 350.4 1260.2 347.1 1259.4 339.2C1258.4 330.5 1258.7 327.1 1259.4 318.5C1260.0 310.6 1259.8 307.3 1262.5 299.9C1265.1 292.3 1266.5 289.3 1271.8 283.3C1276.7 277.7 1279.4 276.0 1286.3 272.9C1294.5 269.3 1298.5 270.6 1307.0 267.8C1314.2 265.4 1316.5 263.5 1323.5 260.5C1327.8 258.7 1330.5 254.2 1333.9 256.4Z" fill="#fff" filter="url(#bl2)"/>
<path d="M608.0 484.5C608.3 482.8 611.6 487.6 613.8 490.3C617.0 494.2 620.4 499.1 623.9 503.8C627.1 508.0 629.1 509.8 631.4 513.8C633.8 517.8 635.8 522.9 635.6 523.9C635.5 524.9 632.7 521.0 630.6 518.9C627.6 515.8 624.2 512.8 620.5 508.8C616.8 504.8 614.7 503.6 612.1 498.7C609.6 493.9 607.6 486.1 608.0 484.5Z" fill="#ccc"/>
<path d="M603.8 533.1C605.1 529.6 609.5 531.2 613.8 531.4C618.5 531.7 622.7 532.6 627.2 534.3C631.5 535.9 634.1 536.9 636.5 539.8C638.9 542.8 639.0 545.0 639.3 549.1C639.7 553.3 639.2 556.6 638.2 560.8C637.1 564.9 636.1 567.3 634.0 570.0C631.9 572.6 630.3 573.9 627.2 574.2C624.2 574.6 621.8 574.0 618.9 571.7C615.8 569.4 614.4 566.7 612.1 562.5C609.8 558.0 608.8 554.8 607.1 549.1C605.4 543.2 602.4 536.6 603.8 533.1Z" fill="#000"/>
<ellipse cx="626.4" cy="550.7" rx="10.4" ry="16.4" fill="#99cc32" transform="rotate(-8 626.4 550.7)" />
<path d="M614.7 534.0C617.2 533.0 623.0 534.1 627.2 535.6C631.4 537.1 634.0 538.8 636.0 541.5C637.9 544.1 638.7 547.2 637.0 549.1C635.2 550.9 630.9 551.1 627.2 550.7C623.6 550.4 621.4 549.4 618.9 547.4C616.3 545.4 615.5 543.4 614.7 540.7C613.8 538.0 612.1 535.0 614.7 534.0Z" fill="#659a22"/>
<ellipse cx="627.4" cy="544.4" rx="2.3" ry="5.7" fill="#000" transform="rotate(0 627.4 544.4)" />
<path d="M820.0 584.3C821.3 580.3 825.7 570.9 830.1 564.2C834.1 557.9 836.4 554.8 841.8 550.7C847.2 546.7 850.2 545.2 856.9 544.0C863.6 542.9 867.7 544.5 875.4 544.9C883.1 545.2 887.1 546.2 895.5 545.7C904.6 545.2 911.6 543.9 920.7 542.3C929.2 540.9 940.8 537.1 940.8 538.2C940.8 539.2 929.6 544.9 920.7 547.4C911.6 549.9 904.6 550.0 895.5 550.7C887.1 551.4 882.4 550.7 875.4 551.1C869.0 551.4 866.3 550.8 860.3 552.4C854.2 554.0 850.9 555.3 845.2 559.1C839.1 563.2 834.4 567.5 830.1 572.6C826.3 576.8 825.4 581.9 823.4 584.3C822.4 585.4 819.6 585.6 820.0 584.3Z" fill="#ccc"/>
<ellipse cx="866.8" cy="579.4" rx="30.0" ry="24.7" fill="#99cc32" transform="rotate(0 866.8 579.4)" />
<path d="M837.6 574.2C838.3 571.7 840.3 565.4 845.2 561.6C850.0 557.9 855.6 556.5 861.9 555.4C868.2 554.4 871.2 554.4 877.0 556.3C882.9 558.2 889.3 562.6 891.3 565.0C892.8 566.7 889.4 568.4 887.1 568.4C882.9 568.4 877.0 565.1 870.3 565.0C863.6 564.9 859.3 566.0 853.6 567.9C848.2 569.6 845.0 573.0 841.8 574.2C840.2 574.9 837.2 575.9 837.6 574.2Z" fill="#659a22"/>
<circle cx="866.1" cy="575.1" r="9.6" fill="#000" />
<ellipse cx="883.4" cy="566.7" rx="4.7" ry="1.5" fill="#fff" transform="rotate(30 883.4 566.7)" />
<path d="M524.5 770.5C528.4 769.9 534.4 775.6 542.1 775.7C551.8 775.9 560.7 773.2 573.1 771.6C585.5 769.9 593.8 767.6 604.2 767.4C613.0 767.3 617.4 769.1 624.9 770.5C631.9 771.9 636.0 773.4 641.4 774.7C645.7 775.7 650.9 774.3 651.8 776.8C652.6 779.2 649.0 783.3 645.6 787.1C641.8 791.2 639.2 794.4 633.1 797.5C626.9 800.6 622.0 801.0 614.5 802.6C607.1 804.3 601.7 803.9 595.9 805.7C591.1 807.3 587.2 808.6 585.5 811.9C583.9 815.2 585.8 818.2 587.6 822.3C589.7 826.8 592.6 830.1 595.9 834.7C599.2 839.2 602.9 840.9 604.2 845.0C605.4 849.2 604.4 852.5 602.1 855.4C599.8 858.3 597.0 860.3 592.8 859.5C588.2 858.7 584.6 855.3 579.3 851.3C573.3 846.7 569.4 843.0 562.8 836.8C556.2 830.6 552.0 826.4 546.2 820.2C540.8 814.4 537.9 811.9 533.8 805.7C529.7 799.5 527.8 794.6 525.5 789.2C523.8 785.0 522.6 782.5 522.4 778.8C522.2 775.2 521.0 771.1 524.5 770.5Z" fill="#e8979b"/>
<path d="M542.1 807.8C542.5 807.4 544.3 815.0 548.3 818.1C552.4 821.5 556.6 823.3 562.8 824.4C569.0 825.4 574.8 824.8 579.3 823.3C582.9 822.2 583.9 816.9 585.5 817.1C587.2 817.3 586.0 821.6 587.6 824.4C589.7 827.9 592.4 831.0 595.9 834.7C599.4 838.4 603.1 840.1 605.2 843.0C606.8 845.1 607.3 846.6 606.7 849.2C606.0 851.9 604.9 854.4 602.1 856.4C599.3 858.5 596.8 860.5 592.8 859.5C588.2 858.5 584.6 855.3 579.3 851.3C573.3 846.7 569.4 843.0 562.8 836.8C556.2 830.6 550.4 826.0 546.2 820.2C543.0 815.7 541.7 808.2 542.1 807.8Z" fill="#b8636a"/>
<path d="M622.8 898.4C625.2 897.4 645.4 902.6 651.8 903.0C658.2 903.4 681.4 903.0 687.0 902.6C692.5 902.2 703.5 899.7 707.6 898.9C711.8 898.0 725.0 894.9 728.3 894.3C731.7 893.7 739.3 887.6 740.8 892.6C742.6 899.1 749.7 952.3 747.0 958.9C744.3 965.5 717.5 962.1 713.9 958.9C710.2 955.7 712.2 930.2 710.8 926.8C709.3 923.4 702.0 925.1 699.4 924.7C696.8 924.3 687.0 922.8 684.9 922.7C682.8 922.6 679.7 921.9 678.7 923.7C677.6 925.5 675.8 936.7 674.5 940.2C673.3 943.8 667.9 957.0 666.3 958.9C664.6 960.7 658.5 960.9 658.0 958.9C657.5 956.8 661.0 941.8 661.1 938.2C661.2 934.6 660.6 924.5 659.0 922.7C657.5 920.8 648.1 919.4 645.6 919.6C643.0 919.7 634.9 924.3 633.1 923.7C631.4 923.1 629.0 915.9 628.0 913.3C626.9 910.8 620.4 899.5 622.8 898.4Z" fill="#000"/>
<path d="M738.7 892.6C740.1 889.8 744.7 891.9 749.0 892.2C755.9 892.8 780.8 895.6 790.4 896.8C800.1 897.9 814.6 901.5 821.5 900.9C828.4 900.4 838.0 894.3 842.2 892.6C846.3 891.0 851.1 885.8 852.5 888.5C853.9 891.3 862.7 911.1 852.5 913.3C837.3 916.7 753.9 916.1 738.7 913.3C730.1 911.8 737.3 895.5 738.7 892.6Z" fill="#000"/>
<path d="M695.2 809.9C697.3 806.8 702.1 802.3 707.6 797.5C714.3 791.7 719.1 787.2 728.3 780.9C738.7 773.9 747.0 768.5 759.4 762.3C771.8 756.1 778.0 754.0 790.4 749.9C802.8 745.7 809.1 743.8 821.5 741.6C833.9 739.3 846.3 737.4 852.5 738.5C855.9 739.0 855.8 745.5 852.5 746.7C846.3 749.0 833.9 747.6 821.5 749.9C809.1 752.1 802.8 754.0 790.4 758.1C778.0 762.3 768.1 764.3 759.4 770.5C751.7 776.0 753.2 785.4 747.0 789.2C740.8 792.9 735.6 786.1 728.3 789.2C720.5 792.5 713.9 801.0 707.6 805.7C703.4 809.0 699.8 812.1 697.3 813.0C695.8 813.5 694.4 811.2 695.2 809.9Z" fill="#ccc"/>
<path d="M757.3 832.6C761.5 829.7 770.5 826.7 780.1 822.3C790.8 817.3 797.9 813.5 811.1 807.8C825.6 801.6 844.2 792.9 852.5 791.2C855.9 790.6 855.5 797.7 852.5 799.5C844.2 804.5 825.6 810.3 811.1 816.1C798.1 821.3 790.4 824.4 780.1 828.5C771.4 832.0 763.9 835.9 759.4 836.8C757.5 837.1 755.7 833.7 757.3 832.6Z" fill="#ccc"/>
<path d="M707.6 843.0C715.5 840.3 734.6 837.6 749.0 834.7C762.1 832.1 773.5 828.9 780.1 828.5C782.0 828.4 784.0 831.9 782.2 832.6C775.9 835.1 763.1 837.9 749.0 840.9C734.6 844.0 718.0 847.7 709.7 848.2C707.4 848.3 705.4 843.7 707.6 843.0Z" fill="#ccc"/>
<path d="M769.7 879.2C774.3 877.9 786.3 877.7 796.6 875.7C807.0 873.6 811.2 872.4 821.5 868.8C832.6 865.0 846.3 857.5 852.5 856.4C855.5 855.9 855.1 862.1 852.5 863.7C846.3 867.4 832.6 871.7 821.5 875.1C811.3 878.1 806.2 878.8 796.6 880.2C787.1 881.7 779.3 882.5 773.9 882.3C771.7 882.2 767.6 879.8 769.7 879.2Z" fill="#ccc"/>
<path d="M1065.2 749.9C1067.3 747.6 1071.4 750.1 1075.6 748.8C1080.1 747.4 1083.4 742.4 1088.0 742.6C1092.5 742.8 1095.7 745.9 1098.3 749.9C1101.0 753.8 1101.4 756.9 1101.4 762.3C1101.4 767.6 1100.6 773.0 1098.3 776.8C1096.3 780.1 1093.4 778.8 1090.1 780.9C1086.8 783.0 1085.9 786.7 1081.8 787.1C1077.6 787.5 1073.1 785.9 1069.4 783.0C1065.6 780.1 1065.0 775.9 1063.2 772.6C1061.7 770.1 1059.6 768.9 1060.1 766.4C1060.5 763.9 1064.2 763.4 1065.2 760.2C1066.3 756.9 1063.2 752.1 1065.2 749.9Z" fill="#fff"/>
<path d="M1067.3 811.9C1068.5 811.5 1073.1 815.2 1075.6 818.1C1078.1 821.0 1079.7 823.5 1079.7 826.4C1079.7 829.3 1078.1 832.2 1075.6 832.6C1073.1 833.0 1068.5 831.0 1067.3 828.5C1066.1 826.0 1069.4 823.5 1069.4 820.2C1069.4 816.9 1066.1 812.4 1067.3 811.9Z" fill="#fff"/>
<path d="M847.9 863.7C856.6 859.1 877.3 857.5 891.4 855.4C902.6 853.7 907.1 852.1 918.3 853.3C929.5 854.6 936.1 856.2 947.3 861.6C958.4 867.0 966.3 872.8 974.2 880.2C981.0 886.7 983.9 892.2 986.6 898.9C988.9 904.5 988.3 907.3 987.6 913.3C986.8 920.4 984.2 925.3 982.5 934.0C980.6 943.1 984.9 953.9 978.3 958.9C971.7 963.8 954.9 963.8 949.3 958.9C943.8 953.9 951.6 943.1 950.4 934.0C949.1 924.9 946.6 921.6 943.1 913.3C939.6 905.1 937.7 900.1 932.8 892.6C927.8 885.2 924.5 881.3 918.3 876.1C912.2 871.0 909.2 869.3 901.7 866.8C894.3 864.3 889.3 863.1 881.0 863.7C872.8 864.3 867.0 867.0 860.3 869.9C854.6 872.4 850.4 879.4 847.9 878.2C845.4 876.9 842.5 866.5 847.9 863.7Z" fill="#000"/>
<path d="M850.0 789.2C854.1 786.5 861.9 784.1 870.7 780.9C881.0 777.2 891.8 773.0 901.7 770.5C909.4 768.6 922.4 767.0 920.4 768.5C918.3 769.9 901.3 774.5 891.4 777.8C882.7 780.7 879.0 781.7 870.7 785.0C862.4 788.3 854.1 793.5 850.0 794.3C847.9 794.8 848.2 790.4 850.0 789.2Z" fill="#000"/>
<path d="M934.9 800.6C932.8 803.2 928.2 809.5 924.5 814.0C921.2 818.1 917.9 821.5 916.2 823.3" fill="none" stroke="#000" stroke-width="1.6"/>
<path d="M659.3 922.9L675.9 922.9L671.8 941.6L667.6 962.3L676.9 963.3L675.9 976.7L671.8 981.9L684.2 989.2L684.2 1003.6L680.0 1011.9L689.3 1020.2L702.8 1026.4L708.0 1036.8L709.0 1045.0L696.6 1036.8L684.2 1028.5L671.8 1018.1L663.5 1003.6L651.1 1010.9L661.4 995.4L657.3 982.9L644.9 986.1L654.2 972.6L651.1 974.7L656.2 945.7Z" fill="#000"/>
<path d="M712.1 922.9C694.2 926.5 713.7 952.2 714.2 966.4C714.7 980.5 714.9 996.7 715.2 1007.8C715.5 1018.2 716.8 1026.1 716.2 1032.6C715.8 1038.9 714.7 1042.6 712.1 1047.1C709.5 1051.6 704.7 1055.0 700.7 1059.5C696.8 1064.0 690.9 1069.9 688.3 1074.0C685.9 1077.9 685.6 1080.9 685.2 1084.4C684.9 1087.8 684.7 1091.6 686.2 1094.7C687.8 1097.8 690.7 1100.6 694.5 1103.0C698.3 1105.4 703.1 1107.5 709.0 1109.2C714.9 1110.9 721.8 1112.5 729.7 1113.3C737.6 1114.2 746.9 1114.5 756.6 1114.4C766.3 1114.2 777.3 1112.5 787.6 1112.3C798.0 1112.1 808.3 1112.8 818.7 1113.3C829.0 1113.8 840.4 1115.4 849.7 1115.4C859.0 1115.4 867.0 1114.7 874.6 1113.3C882.2 1111.9 889.1 1109.9 895.3 1107.1C901.5 1104.4 907.0 1100.9 911.8 1096.8C916.7 1092.6 920.8 1086.8 924.2 1082.3C927.7 1077.8 932.2 1076.1 932.5 1069.9C933.9 1043.3 969.3 947.4 932.5 922.9C895.8 898.4 748.5 915.7 712.1 922.9Z" fill="#000"/>
<path d="M950.8 941.9C957.5 936.4 974.8 935.2 978.4 941.9C982.1 948.7 973.5 962.2 969.2 975.8C964.9 989.3 962.9 995.7 956.9 1009.6C950.8 1023.7 946.5 1033.0 938.5 1046.5C930.5 1060.0 921.2 1082.8 916.9 1077.3C912.6 1071.7 913.8 1034.8 916.9 1018.8C919.0 1007.9 926.9 1007.0 932.3 997.3C937.8 987.4 940.9 980.7 944.6 969.6C948.3 958.5 944.0 947.5 950.8 941.9Z" fill="#000"/>
</g>
<g id="Lfeat2">
<path d="M641.4 773.0C642.5 770.5 650.7 769.2 655.9 764.3C661.7 758.9 665.0 752.3 670.4 745.7C675.5 739.5 681.8 730.8 682.8 731.2C683.8 731.6 679.0 741.0 675.6 747.8C672.1 754.8 668.5 759.8 665.2 766.4C662.3 772.3 661.9 775.5 659.0 780.9C656.1 786.3 654.9 789.6 650.7 793.3C646.6 797.0 643.8 797.6 638.3 799.5C632.5 801.5 628.4 801.9 621.8 803.2C615.1 804.6 611.0 804.9 605.2 806.3C599.9 807.7 596.5 808.8 592.8 810.5C589.9 811.9 588.2 815.2 586.6 815.0C584.9 814.9 583.5 811.8 584.5 809.9C585.5 807.9 588.4 806.6 591.8 805.3C596.5 803.5 601.7 802.3 608.3 800.6C614.9 798.8 619.3 798.2 624.9 796.4C629.8 794.8 632.3 794.3 636.2 791.7C640.2 789.0 641.6 785.9 644.5 783.0C647.1 780.3 651.4 778.7 650.7 776.8C650.1 774.8 640.4 775.5 641.4 773.0Z" fill="#000"/>
<path d="M526.6 767.4C529.7 769.0 534.8 774.6 542.1 775.1C551.4 775.8 560.7 773.0 573.1 771.0C585.5 768.9 594.2 765.0 604.2 764.8C612.2 764.5 614.9 767.9 622.8 769.5C630.7 771.2 639.4 772.3 643.5 773.0" fill="none" stroke="#000" stroke-width="2.6"/>
<path d="M525.9 767.4C525.2 770.1 522.6 775.9 522.4 780.9C522.3 785.8 523.2 787.8 525.1 792.3C527.4 797.7 529.4 801.7 533.8 807.8C538.4 814.2 542.0 817.6 548.3 824.4C554.9 831.4 559.9 836.4 566.9 843.0C573.6 849.3 580.2 854.6 583.5 857.5" fill="none" stroke="#000" stroke-width="2.6"/>
<path d="M589.7 819.2C590.9 816.5 599.2 816.9 604.2 817.1C608.7 817.3 610.2 819.0 614.5 820.2C618.9 821.5 624.7 821.2 625.9 823.3C627.1 825.4 622.9 827.5 620.7 830.6C618.5 833.7 617.0 835.5 614.5 838.8C612.0 842.2 610.4 846.7 608.3 847.1C606.2 847.5 605.8 843.6 604.2 840.9C602.1 837.6 600.8 834.8 598.0 830.6C595.1 826.2 588.4 821.9 589.7 819.2Z" fill="#000"/>
<path d="M583.5 857.5C584.9 856.0 588.7 861.0 592.8 860.6C596.9 860.2 601.3 854.8 604.2 855.4C607.1 856.0 605.8 860.3 607.3 863.7C608.9 867.4 609.7 870.0 612.5 874.0C615.6 878.6 618.0 881.6 622.8 886.4C627.8 891.4 631.5 895.5 637.3 898.9C642.8 902.0 651.8 902.2 651.8 903.0C651.8 903.8 642.7 903.8 637.3 903.0C631.9 902.2 630.2 900.4 624.9 898.9C619.1 897.2 614.1 896.0 608.3 894.7C603.1 893.6 599.6 895.1 595.9 892.6C592.2 890.2 591.6 887.0 589.7 882.3C587.6 877.3 586.8 872.8 585.5 867.8C584.5 863.5 582.0 858.9 583.5 857.5Z" fill="#000"/>
<path d="M742.8 899.9C748.8 895.0 779.9 897.0 790.4 897.2C800.9 897.4 813.2 901.9 821.5 901.3C829.8 900.7 848.4 887.5 852.5 892.6C856.7 897.8 856.7 933.9 852.5 940.2C848.4 946.6 829.8 939.7 821.5 940.2C813.2 940.8 797.3 941.9 790.4 944.4C783.5 946.9 775.7 956.9 769.7 958.9C763.8 960.8 749.1 962.2 745.9 958.9C742.8 955.6 746.3 941.9 745.9 934.0C745.5 926.2 736.9 904.8 742.8 899.9Z" fill="#d2414f"/>
<path d="M852.5 939.2C848.4 936.7 829.8 939.5 821.5 940.2C813.2 941.0 797.3 942.3 790.4 944.8C783.5 947.3 761.5 957.0 769.7 958.9C778.0 960.8 841.5 961.5 852.5 958.9C860.6 957.0 856.7 941.7 852.5 939.2Z" fill="#b5305a"/>
<path d="M695.2 805.7C697.3 802.4 702.1 798.2 707.6 793.3C714.3 787.5 719.1 783.0 728.3 776.8C738.7 769.7 747.0 764.3 759.4 758.1C771.8 751.9 778.0 749.9 790.4 745.7C802.8 741.6 809.1 739.7 821.5 737.4C833.9 735.2 846.3 733.9 852.5 734.3C854.7 734.5 854.6 738.9 852.5 739.5C846.3 741.2 833.9 740.3 821.5 742.6C809.1 744.9 802.8 746.7 790.4 750.9C778.0 755.0 771.8 757.1 759.4 763.3C747.0 769.5 738.7 774.9 728.3 781.9C719.1 788.2 713.9 792.9 707.6 798.5C702.8 802.8 699.8 808.4 697.3 809.9C695.6 810.8 694.2 807.4 695.2 805.7Z" fill="#000"/>
<path d="M757.3 828.5C761.5 825.8 770.5 822.5 780.1 818.1C790.8 813.2 797.9 809.4 811.1 803.7C825.6 797.4 844.2 788.8 852.5 786.7C855.0 786.0 854.8 791.6 852.5 792.9C844.2 797.5 825.6 803.8 811.1 809.9C798.0 815.4 790.4 819.0 780.1 823.3C771.5 826.9 763.9 830.6 759.4 831.6C757.9 831.9 756.0 829.3 757.3 828.5Z" fill="#000"/>
<ellipse cx="678.1" cy="847.1" rx="4.1" ry="1.9" fill="#000" transform="rotate(-8 678.1 847.1)" />
<ellipse cx="694.2" cy="845.0" rx="4.1" ry="1.9" fill="#000" transform="rotate(-8 694.2 845.0)" />
<ellipse cx="710.8" cy="843.0" rx="4.1" ry="1.9" fill="#000" transform="rotate(-8 710.8 843.0)" />
<ellipse cx="731.4" cy="839.9" rx="4.1" ry="1.9" fill="#000" transform="rotate(-8 731.4 839.9)" />
<ellipse cx="748.4" cy="835.9" rx="4.1" ry="1.9" fill="#000" transform="rotate(-8 748.4 835.9)" />
<ellipse cx="725.7" cy="876.5" rx="4.1" ry="1.9" fill="#000" transform="rotate(0 725.7 876.5)" />
<ellipse cx="744.3" cy="877.3" rx="4.1" ry="1.9" fill="#000" transform="rotate(0 744.3 877.3)" />
<ellipse cx="758.8" cy="876.3" rx="4.1" ry="1.9" fill="#000" transform="rotate(0 758.8 876.3)" />
<path d="M769.7 875.1C774.9 873.4 786.3 873.2 796.6 870.9C807.0 868.6 811.2 867.3 821.5 863.7C832.6 859.7 846.3 852.7 852.5 851.3C854.6 850.8 854.4 855.4 852.5 856.4C846.3 860.0 832.6 865.0 821.5 868.8C811.2 872.4 806.8 873.6 796.6 875.7C786.5 877.7 776.2 879.3 770.8 879.2C769.0 879.2 768.0 875.6 769.7 875.1Z" fill="#000"/>
<ellipse cx="508.4" cy="821.7" rx="3.9" ry="1.9" fill="#000" transform="rotate(-25 508.4 821.7)" />
<ellipse cx="523.9" cy="831.0" rx="3.9" ry="1.9" fill="#000" transform="rotate(-15 523.9 831.0)" />
<ellipse cx="519.7" cy="851.7" rx="3.9" ry="1.9" fill="#000" transform="rotate(-20 519.7 851.7)" />
<ellipse cx="913.1" cy="826.8" rx="5.0" ry="2.7" fill="#000" transform="rotate(-30 913.1 826.8)" />
<ellipse cx="892.4" cy="838.8" rx="5.0" ry="2.7" fill="#000" transform="rotate(-15 892.4 838.8)" />
<ellipse cx="871.7" cy="844.2" rx="5.0" ry="2.7" fill="#000" transform="rotate(-10 871.7 844.2)" />
<ellipse cx="852.1" cy="853.3" rx="5.0" ry="2.7" fill="#000" transform="rotate(-10 852.1 853.3)" />
<path d="M847.9 872.0C849.5 864.0 858.6 868.3 866.6 866.8C875.2 865.1 881.0 861.8 891.4 863.7C901.7 865.5 910.0 870.3 918.3 876.1C925.9 881.4 927.8 885.2 932.8 892.6C937.7 900.1 939.6 905.1 943.1 913.3C946.6 921.6 949.1 924.9 950.4 934.0C951.6 943.1 959.5 956.4 949.3 958.9C928.8 963.8 868.2 976.3 847.9 958.9C827.6 941.5 844.2 890.4 847.9 872.0Z" fill="#d2414f"/>
<path d="M926.6 880.2C928.2 878.2 930.2 887.4 932.8 892.6C936.1 899.3 939.6 905.1 943.1 913.3C946.6 921.6 949.1 924.9 950.4 934.0C951.6 943.1 959.5 956.4 949.3 958.9C928.8 963.8 868.2 963.8 847.9 958.9C837.8 956.4 839.3 939.8 847.9 934.0C856.6 928.2 876.5 932.0 891.4 929.9C904.6 928.1 915.8 929.1 922.4 923.7C929.1 918.3 923.7 911.7 924.5 903.0C925.3 894.3 924.9 882.3 926.6 880.2Z" fill="#b5305a"/>
<path d="M847.9 952.7C858.7 950.6 881.9 950.6 901.7 948.5C920.9 946.5 937.7 940.2 947.3 942.3C954.1 943.8 956.3 957.7 949.3 958.9C929.5 962.2 868.2 960.1 847.9 958.9C845.3 958.7 845.4 953.2 847.9 952.7Z" fill="#e8668a"/>
<path d="M746.3 951.9C749.0 949.1 758.7 947.1 767.0 945.7C775.2 944.3 794.5 942.7 808.3 941.6C822.1 940.5 853.9 938.5 870.4 937.4C887.0 936.3 924.2 917.3 932.5 933.3C940.8 949.3 934.2 1038.7 932.5 1057.5C931.8 1066.1 924.2 1070.1 920.1 1074.0C916.0 1077.9 908.6 1083.3 901.5 1086.4C894.3 1089.6 875.9 1096.8 866.3 1097.8C856.6 1098.8 839.5 1094.4 829.0 1093.7C818.6 1093.0 798.7 1092.5 787.6 1092.6C776.6 1092.8 755.6 1095.0 746.3 1094.7C736.9 1094.4 722.8 1091.7 717.3 1090.6C711.9 1089.5 704.3 1091.9 704.9 1086.4C705.4 1080.9 718.1 1056.9 721.4 1049.2C724.7 1041.4 727.5 1035.4 729.7 1028.5C731.9 1021.6 735.8 1005.7 738.0 997.4C740.2 989.2 745.2 972.5 746.3 966.4C747.3 960.4 743.5 954.7 746.3 951.9Z" fill="#e8668a"/>
<path d="M745.2 931.2C748.0 926.5 758.5 930.9 767.0 931.2C775.4 931.5 794.5 933.3 808.3 933.3C822.1 933.3 853.9 932.3 870.4 931.2C887.0 930.1 924.2 922.5 932.5 925.0C940.8 927.5 940.8 946.0 932.5 949.8C924.2 953.7 885.6 953.1 870.4 954.0C855.3 954.8 831.1 955.2 818.7 956.0C806.3 956.9 787.0 958.8 777.3 960.2C767.6 961.6 750.5 970.3 746.3 966.4C742.0 962.5 742.5 935.9 745.2 931.2Z" fill="#b5305a"/>
<path d="M744.2 922.9C769.2 921.7 907.4 922.5 932.5 922.9C933.8 923.0 933.8 925.8 932.5 926.0C924.2 927.3 887.0 931.1 870.4 932.2C853.9 933.3 822.1 934.3 808.3 934.3C794.5 934.3 775.4 932.5 767.0 932.2C758.5 932.0 748.3 933.5 745.2 932.2C742.2 931.0 740.3 923.1 744.2 922.9Z" fill="#d2414f"/>
<path d="M757.6 1004.7C762.6 1003.3 798.1 999.7 808.3 998.5C818.6 997.2 850.6 993.3 860.1 992.3C869.6 991.2 900.0 987.0 903.5 988.1C907.1 989.3 895.7 1001.7 895.3 1003.6C894.9 1005.6 900.6 1006.1 899.4 1007.8C898.2 1009.4 885.3 1017.3 882.8 1020.2C880.4 1023.1 875.8 1034.1 874.6 1036.8C873.3 1039.4 869.6 1046.0 870.4 1047.1C871.3 1048.2 882.8 1047.5 882.8 1048.1C882.8 1048.8 873.7 1053.2 870.4 1053.3C867.1 1053.4 854.9 1048.8 849.7 1049.2C844.6 1049.6 823.5 1055.4 818.7 1057.5C813.9 1059.5 803.2 1069.7 802.1 1069.9C801.1 1070.1 809.8 1060.8 808.3 1059.5C806.9 1058.3 791.8 1058.5 787.6 1057.5C783.5 1056.4 771.1 1050.0 767.0 1049.2C762.8 1048.3 750.0 1049.0 746.3 1049.2C742.5 1049.4 729.7 1051.3 729.7 1051.2C729.7 1051.1 742.5 1048.8 746.3 1048.1C750.0 1047.5 766.1 1046.2 767.0 1045.0C767.8 1043.9 756.2 1038.2 754.5 1036.8C752.9 1035.3 750.2 1032.0 750.4 1030.5C750.6 1029.1 755.8 1024.1 756.6 1022.3C757.4 1020.4 758.6 1013.7 758.7 1011.9C758.8 1010.2 754.7 1005.5 757.6 1004.7Z" fill="#a8264f"/>
<path d="M916.9 941.9C922.6 928.9 945.2 936.4 950.8 941.9C956.3 947.5 948.3 958.5 944.6 969.6C940.9 980.7 937.8 987.4 932.3 997.3C926.9 1007.0 919.9 1029.5 916.9 1018.8C913.8 1007.7 910.2 957.3 916.9 941.9Z" fill="#e8668a"/>
</g>
<g id="Lfeat3">
<path d="M836.0 909.2C835.1 913.8 835.1 923.7 831.8 932.0C828.5 940.2 822.7 945.2 819.4 950.6C817.4 953.9 816.1 957.2 815.3 958.9" fill="none" stroke="#b02030" stroke-width="1.2"/>
<path d="M578.9 891.4C583.6 891.0 618.8 897.9 625.3 902.4C631.8 906.9 632.3 922.7 634.4 929.9C636.5 937.1 642.7 959.7 643.1 963.8C643.3 966.3 639.5 966.8 637.5 965.5C634.7 963.7 623.7 953.2 619.1 948.3C614.4 943.5 601.5 928.9 597.5 923.9C593.6 918.9 587.3 909.3 585.1 905.5C583.0 901.7 574.2 891.8 578.9 891.4Z" fill="#ffffcc" stroke="#000" stroke-width="0.6"/>
<path d="M579.3 891.8L624.9 902.6L629.4 916.4L595.9 920.0L587.6 909.2Z" fill="#e6e6b3"/>
<path d="M624.9 901.3L639.4 909.6L633.1 922.7Z" fill="#ffffcc"/>
<path d="M639.4 907.1L653.8 909.6L651.8 920.8L645.6 918.7Z" fill="#ffffcc"/>
<path d="M655.9 908.2L670.4 912.5L668.3 922.0L660.0 918.7Z" fill="#ffffcc"/>
<path d="M671.4 909.2L685.3 912.5L684.9 922.0L678.7 920.8Z" fill="#ffffcc"/>
<path d="M687.0 908.4L703.5 913.3L700.4 923.7L693.2 921.6Z" fill="#ffffcc"/>
<path d="M705.6 911.3L721.1 900.1L724.2 930.3L718.0 927.8Z" fill="#ffffcc"/>
<path d="M736.6 896.8L784.2 898.9L790.4 923.7L794.6 958.9L771.8 958.9L757.3 929.9L744.9 911.3Z" fill="#ffffcc"/>
<path d="M835.2 925.0C833.6 927.5 830.4 932.2 827.0 937.4C822.8 943.6 818.7 948.2 814.6 956.0C810.4 963.9 808.1 968.5 806.3 976.7C804.4 985.0 805.4 993.3 805.2 997.4" fill="none" stroke="#c0202f" stroke-width="1.0"/>
<path d="M754.5 922.9C758.4 921.3 784.5 919.9 789.7 922.9C795.0 926.0 793.2 939.9 793.9 945.7C794.5 951.5 795.2 961.7 794.9 966.4C794.6 971.1 793.3 980.0 791.8 980.9C790.3 981.7 786.3 976.5 783.5 972.6C780.8 968.7 774.1 956.9 771.1 951.9C768.1 946.9 763.0 939.2 760.7 935.3C758.5 931.5 750.7 924.6 754.5 922.9Z" fill="#ffffcc" stroke="#000" stroke-width="0.5"/>
<path d="M665.5 1020.2C665.5 1017.6 669.6 1019.8 671.8 1021.2C674.9 1023.3 678.7 1028.3 684.2 1032.6C689.7 1036.9 696.9 1043.3 704.9 1047.1C712.8 1050.9 724.7 1053.3 731.8 1055.4C738.2 1057.3 744.2 1058.1 747.3 1059.5C749.3 1060.4 750.9 1061.5 750.4 1063.7C749.9 1066.1 748.1 1070.8 744.2 1074.0C740.0 1077.5 731.4 1082.5 725.6 1084.4C719.7 1086.3 713.8 1086.8 709.0 1085.4C704.2 1084.0 700.7 1080.4 696.6 1076.1C692.5 1071.8 688.3 1065.7 684.2 1059.5C680.0 1053.3 674.9 1045.4 671.8 1038.8C668.7 1032.3 665.5 1023.1 665.5 1020.2Z" fill="#ffffcc" stroke="#000" stroke-width="0.5"/>
<path d="M725.6 1069.9C726.2 1067.2 729.5 1066.3 731.8 1067.8C735.1 1070.0 736.9 1073.2 738.0 1078.1C738.8 1081.6 738.7 1084.2 735.9 1086.4C733.2 1088.6 729.5 1089.4 727.6 1086.4C724.9 1082.0 724.5 1074.8 725.6 1069.9Z" fill="#ffffcc" stroke="#000" stroke-width="0.5"/>
<path d="M736.9 1076.1C737.6 1074.0 740.3 1073.8 742.1 1075.0C744.6 1076.7 745.5 1078.9 746.3 1082.3C746.9 1084.9 747.4 1087.1 745.2 1088.5C743.0 1089.9 739.7 1090.0 738.0 1087.5C735.8 1084.1 735.8 1079.4 736.9 1076.1Z" fill="#ffffcc" stroke="#000" stroke-width="0.5"/>
<path d="M747.3 1075.0C748.5 1072.2 752.1 1074.2 754.5 1076.1C757.8 1078.5 758.9 1080.8 759.7 1084.4C760.2 1086.6 759.8 1088.7 757.6 1089.5C754.9 1090.6 751.4 1091.3 749.4 1088.5C746.6 1084.6 745.9 1078.4 747.3 1075.0Z" fill="#ffffcc" stroke="#000" stroke-width="0.5"/>
<path d="M760.7 1076.1C761.8 1073.2 765.3 1073.5 768.0 1075.0C771.3 1077.0 772.3 1079.5 773.2 1083.3C773.7 1086.0 773.6 1088.3 771.1 1089.5C768.3 1090.9 765.0 1091.3 762.8 1088.5C760.1 1084.9 759.4 1079.7 760.7 1076.1Z" fill="#ffffcc" stroke="#000" stroke-width="0.5"/>
<path d="M775.2 1075.7C776.3 1072.8 779.8 1073.0 782.5 1074.4C785.8 1076.2 786.6 1078.5 787.6 1082.3C788.5 1085.2 789.2 1087.9 786.6 1089.5C783.9 1091.2 779.8 1091.5 777.3 1088.5C774.3 1084.8 773.9 1079.4 775.2 1075.7Z" fill="#ffffcc" stroke="#000" stroke-width="0.5"/>
<path d="M788.7 1073.0C789.4 1070.0 793.4 1071.3 795.9 1073.0C800.6 1076.0 803.8 1079.7 806.3 1084.4C807.5 1086.7 807.7 1089.7 805.2 1090.6C801.4 1091.9 795.7 1093.7 791.8 1089.5C787.4 1084.8 787.6 1077.4 788.7 1073.0Z" fill="#ffffcc" stroke="#000" stroke-width="0.5"/>
<path d="M829.0 1028.5C830.3 1026.2 833.8 1026.3 835.2 1028.5C837.7 1031.9 841.1 1041.6 843.5 1049.2C845.9 1056.8 848.5 1067.6 849.7 1074.0C850.8 1079.6 852.5 1084.5 850.8 1087.5C849.0 1090.4 844.4 1090.8 839.4 1091.6C834.4 1092.4 825.8 1093.1 820.8 1092.2C815.8 1091.4 809.7 1090.1 809.4 1086.4C809.0 1082.7 816.3 1076.1 818.7 1069.9C821.1 1063.7 822.1 1056.1 823.9 1049.2C825.6 1042.3 827.1 1031.9 829.0 1028.5Z" fill="#ffffcc" stroke="#000" stroke-width="0.5"/>
<path d="M704.9 1094.7L725.6 1100.9L760.7 1101.9L760.7 1104.4L725.6 1104.2L704.9 1098.0Z" fill="#aaa"/>
</g>
<g id="Lwhisk">
<path d="M550.1 530.9C558.1 529.5 573.6 522.8 590.3 523.9C607.1 525.0 625.2 534.0 634.0 536.5" fill="none" stroke="#999" stroke-width="1.6"/>
<path d="M550.1 530.9C558.1 529.5 573.6 522.8 590.3 523.9C607.1 525.0 625.2 534.0 634.0 536.5" fill="none" stroke="#fff" stroke-width="0.6"/>
<path d="M554.3 525.9C561.5 525.2 575.2 520.6 590.3 522.2C605.6 523.8 622.6 531.6 630.6 534.0" fill="none" stroke="#999" stroke-width="1.6"/>
<path d="M554.3 525.9C561.5 525.2 575.2 520.6 590.3 522.2C605.6 523.8 622.6 531.6 630.6 534.0" fill="none" stroke="#fff" stroke-width="0.6"/>
<path d="M558.5 521.7C564.8 521.5 577.1 518.5 590.3 520.5C604.1 522.7 619.9 529.9 627.2 532.3" fill="none" stroke="#999" stroke-width="1.6"/>
<path d="M558.5 521.7C564.8 521.5 577.1 518.5 590.3 520.5C604.1 522.7 619.9 529.9 627.2 532.3" fill="none" stroke="#fff" stroke-width="0.6"/>
<path d="M567.7 518.4C573.2 518.8 584.1 518.1 595.4 520.5C606.6 523.0 618.2 528.6 623.9 530.6" fill="none" stroke="#999" stroke-width="1.6"/>
<path d="M567.7 518.4C573.2 518.8 584.1 518.1 595.4 520.5C606.6 523.0 618.2 528.6 623.9 530.6" fill="none" stroke="#fff" stroke-width="0.6"/>
<path d="M586.1 515.8C589.7 517.4 596.9 521.3 603.8 523.9C610.6 526.5 617.2 527.9 620.5 528.9" fill="none" stroke="#999" stroke-width="1.6"/>
<path d="M586.1 515.8C589.7 517.4 596.9 521.3 603.8 523.9C610.6 526.5 617.2 527.9 620.5 528.9" fill="none" stroke="#fff" stroke-width="0.6"/>
<path d="M900.5 599.4C905.2 595.7 913.3 587.4 924.0 580.9C935.4 574.1 950.9 568.2 957.6 565.0" fill="none" stroke="#777" stroke-width="1.6"/>
<path d="M900.5 599.4C905.2 595.7 913.3 587.4 924.0 580.9C935.4 574.1 950.9 568.2 957.6 565.0" fill="none" stroke="#fff" stroke-width="0.7"/>
<path d="M845.2 560.8C851.9 555.4 864.8 542.9 878.7 534.0C892.7 525.1 907.6 519.9 914.8 516.3" fill="none" stroke="#999" stroke-width="0.8"/>
<path d="M853.6 557.4C860.9 552.8 876.4 542.0 890.5 534.0C904.2 526.1 917.3 520.5 924.0 517.2" fill="none" stroke="#999" stroke-width="0.8"/>
<path d="M865.3 552.4C872.3 548.7 886.8 540.2 900.5 534.0C914.3 527.8 927.4 523.9 934.1 521.4" fill="none" stroke="#999" stroke-width="0.8"/>
<path d="M846.8 560.0C852.6 555.4 864.0 544.5 875.4 537.3C886.6 530.2 898.2 526.6 903.9 523.9" fill="none" stroke="#bbb" stroke-width="0.6"/>
<path d="M705.6 893.7C707.4 889.3 713.7 880.0 714.9 872.0C716.1 864.1 714.9 858.7 711.8 853.3C708.7 847.9 701.9 846.7 699.4 845.0" fill="none" stroke="#999" stroke-width="1.8"/>
<path d="M705.6 893.7C707.4 889.3 713.7 880.0 714.9 872.0C716.1 864.1 714.9 858.7 711.8 853.3C708.7 847.9 701.9 846.7 699.4 845.0" fill="none" stroke="#fff" stroke-width="0.9"/>
<path d="M738.7 898.9C738.3 893.5 738.7 881.5 736.6 872.0C734.6 862.8 732.9 857.1 728.3 851.3C724.0 845.7 716.8 844.6 713.9 843.0" fill="none" stroke="#999" stroke-width="1.8"/>
<path d="M738.7 898.9C738.3 893.5 738.7 881.5 736.6 872.0C734.6 862.8 732.9 857.1 728.3 851.3C724.0 845.7 716.8 844.6 713.9 843.0" fill="none" stroke="#fff" stroke-width="0.9"/>
<path d="M778.0 927.8C776.4 920.8 774.3 905.9 769.7 892.6C765.2 879.4 762.7 872.0 755.2 861.6C747.8 851.3 737.0 845.0 732.5 840.9" fill="none" stroke="#999" stroke-width="1.8"/>
<path d="M778.0 927.8C776.4 920.8 774.3 905.9 769.7 892.6C765.2 879.4 762.7 872.0 755.2 861.6C747.8 851.3 737.0 845.0 732.5 840.9" fill="none" stroke="#fff" stroke-width="0.9"/>
<path d="M792.5 921.6C793.7 915.8 799.5 901.3 798.7 892.6C798.0 885.2 790.4 881.1 788.4 878.2" fill="none" stroke="#999" stroke-width="1.8"/>
<path d="M792.5 921.6C793.7 915.8 799.5 901.3 798.7 892.6C798.0 885.2 790.4 881.1 788.4 878.2" fill="none" stroke="#fff" stroke-width="0.9"/>
<path d="M844.2 958.9C841.8 947.7 840.5 922.5 831.8 903.0C823.1 883.5 817.3 874.9 800.8 861.6C784.2 848.4 759.4 841.7 749.0 836.8" fill="none" stroke="#999" stroke-width="1.8"/>
<path d="M844.2 958.9C841.8 947.7 840.5 922.5 831.8 903.0C823.1 883.5 817.3 874.9 800.8 861.6C784.2 848.4 759.4 841.7 749.0 836.8" fill="none" stroke="#fff" stroke-width="0.9"/>
<path d="M813.2 768.5C808.6 766.8 799.1 761.4 790.4 760.2C781.8 759.0 778.1 759.9 769.7 762.3C761.0 764.8 751.5 770.5 747.0 772.6" fill="none" stroke="#999" stroke-width="1.8"/>
<path d="M813.2 768.5C808.6 766.8 799.1 761.4 790.4 760.2C781.8 759.0 778.1 759.9 769.7 762.3C761.0 764.8 751.5 770.5 747.0 772.6" fill="none" stroke="#fff" stroke-width="0.9"/>
<path d="M780.2 819.8L782.6 819.1L785.6 818.3L789.3 817.2L793.4 816.1L797.8 814.8L802.3 813.5L806.9 812.2L811.4 810.8L815.6 809.5L819.6 808.3L823.5 807.0L827.7 805.6L832.2 804.2L837.4 802.6L843.4 800.8L850.4 798.8L858.7 796.6L868.1 794.0L878.3 791.2L889.2 788.3L900.3 785.3L911.6 782.4L922.7 779.5L933.3 776.8L943.8 774.1L954.5 771.5L965.2 768.8L975.9 766.2L986.5 763.8L996.7 761.5L1006.5 759.5L1015.8 757.8L1024.6 756.3L1033.0 755.2L1041.0 754.2L1048.7 753.4L1056.1 752.9L1063.4 752.5L1070.5 752.2L1077.7 752.1L1084.7 752.0L1091.5 752.1L1098.1 752.3L1104.6 752.7L1110.9 753.3L1117.2 754.1L1123.2 755.2L1129.2 756.6L1135.3 758.6L1141.7 761.2L1148.0 764.3L1154.2 767.5L1160.0 770.7L1165.2 773.6L1169.5 776.0L1172.8 777.8L1172.8 777.8L1169.6 776.0L1165.3 773.4L1160.2 770.3L1154.5 767.0L1148.4 763.6L1142.0 760.4L1135.7 757.6L1129.6 755.5L1123.5 753.9L1117.4 752.6L1111.1 751.6L1104.8 750.9L1098.2 750.4L1091.5 750.0L1084.7 749.8L1077.6 749.7L1070.5 749.7L1063.3 749.8L1056.0 750.1L1048.4 750.5L1040.7 751.2L1032.6 752.0L1024.1 753.1L1015.3 754.4L1005.9 756.0L995.9 757.8L985.6 760.0L975.0 762.3L964.3 764.8L953.5 767.4L942.8 770.0L932.2 772.6L921.6 775.3L910.5 778.3L899.3 781.4L888.1 784.6L877.4 787.8L867.2 790.8L857.8 793.6L849.6 796.1L842.6 798.2L836.6 800.1L831.5 801.8L826.9 803.4L822.8 804.8L818.9 806.2L815.0 807.5L810.8 808.9L806.3 810.3L801.8 811.8L797.3 813.2L792.9 814.5L788.9 815.8L785.2 816.9L782.2 817.8L779.9 818.5Z" fill="#fff" stroke="#777" stroke-width="0.7" stroke-linejoin="round"/>
<path d="M854.2 800.2L861.8 800.2L871.9 800.0L884.0 799.8L897.4 799.6L911.6 799.5L926.1 799.4L940.2 799.4L953.5 799.5L966.3 799.7L979.5 799.9L992.9 800.1L1006.2 800.3L1019.4 800.5L1032.4 800.8L1044.9 801.2L1056.9 801.6L1068.2 802.0L1079.0 802.4L1089.4 802.9L1099.5 803.4L1109.5 804.0L1119.4 804.8L1129.4 805.8L1139.6 806.9L1150.5 808.4L1162.2 810.3L1174.3 812.4L1186.2 814.6L1197.5 816.8L1207.6 818.8L1216.1 820.5L1222.5 821.7L1222.5 821.7L1216.2 820.3L1207.7 818.3L1197.6 816.0L1186.4 813.5L1174.6 811.0L1162.5 808.5L1150.8 806.3L1139.9 804.5L1129.7 803.1L1119.7 802.0L1109.7 801.0L1099.8 800.1L1089.6 799.4L1079.2 798.7L1068.4 798.1L1057.0 797.5L1045.1 796.9L1032.5 796.4L1019.5 796.0L1006.3 795.6L992.9 795.4L979.6 795.2L966.4 795.3L953.5 795.4L940.2 795.7L926.0 796.1L911.5 796.5L897.3 797.1L883.9 797.6L871.9 798.1L861.8 798.5L854.1 798.8Z" fill="#fff" stroke="#777" stroke-width="0.7" stroke-linejoin="round"/>
<path d="M781.8 819.8L784.7 819.3L788.7 818.6L793.3 817.8L798.5 816.9L803.9 816.0L809.3 815.2L814.5 814.5L819.1 814.0L822.9 813.6L826.1 813.2L828.9 813.0L831.7 812.8L834.9 812.7L838.7 812.8L843.6 812.9L849.9 813.3L857.8 813.7L867.0 814.3L877.1 815.1L888.0 815.9L899.3 816.9L910.7 817.9L921.9 819.0L932.6 820.1L943.0 821.3L953.5 822.6L964.0 824.0L974.6 825.5L985.0 827.0L995.3 828.7L1005.4 830.3L1015.3 832.1L1024.9 833.8L1034.3 835.5L1043.5 837.3L1052.6 839.1L1061.5 841.1L1070.3 843.1L1079.1 845.4L1087.7 847.9L1096.8 850.9L1106.3 854.3L1116.0 858.1L1125.5 862.0L1134.4 865.7L1142.4 869.1L1149.1 871.9L1154.2 874.0L1154.2 874.0L1149.2 871.8L1142.5 868.8L1134.6 865.2L1125.8 861.3L1116.4 857.2L1106.8 853.2L1097.3 849.5L1088.3 846.3L1079.6 843.6L1070.8 841.2L1062.0 838.9L1053.1 836.8L1044.0 834.8L1034.8 832.8L1025.4 830.9L1015.8 829.1L1006.0 827.2L995.9 825.4L985.5 823.6L975.1 821.9L964.5 820.3L954.0 818.8L943.4 817.5L933.0 816.2L922.3 815.0L911.0 814.0L899.6 813.2L888.3 812.5L877.4 811.9L867.1 811.3L857.9 810.9L850.1 810.6L843.7 810.4L838.8 810.4L834.8 810.4L831.6 810.6L828.7 810.8L825.8 811.1L822.7 811.5L818.8 812.0L814.2 812.6L809.1 813.4L803.7 814.4L798.3 815.4L793.1 816.4L788.4 817.3L784.5 818.0L781.6 818.6Z" fill="#fff" stroke="#777" stroke-width="0.7" stroke-linejoin="round"/>
<path d="M769.4 837.4L772.4 836.7L776.5 835.8L781.2 834.8L786.5 833.6L792.2 832.4L797.9 831.3L803.5 830.3L808.8 829.4L813.6 828.7L818.0 827.9L822.4 827.1L826.7 826.4L831.5 825.8L836.7 825.5L842.8 825.4L849.9 825.7L858.3 826.3L867.7 827.1L877.8 828.2L888.6 829.5L899.7 831.0L910.8 832.8L921.8 834.7L932.4 836.7L942.7 838.9L953.0 841.4L963.3 844.1L973.6 847.0L984.0 850.0L994.4 853.0L1004.7 856.1L1015.1 859.1L1025.3 862.0L1035.2 864.9L1045.1 867.9L1055.0 870.8L1065.1 873.9L1075.5 877.0L1086.5 880.1L1098.1 883.3L1111.1 886.8L1125.8 890.7L1141.4 894.8L1157.2 898.8L1172.3 902.7L1186.0 906.2L1197.5 909.1L1206.0 911.3L1206.0 911.3L1197.5 908.9L1186.1 905.8L1172.5 902.0L1157.5 897.8L1141.8 893.5L1126.2 889.1L1111.6 885.0L1098.6 881.3L1087.1 877.9L1076.3 874.5L1065.9 871.3L1055.8 868.1L1046.0 865.0L1036.1 862.0L1026.2 858.9L1016.0 855.9L1005.7 852.8L995.4 849.6L985.0 846.5L974.7 843.4L964.3 840.4L954.0 837.6L943.6 835.0L933.2 832.7L922.5 830.8L911.4 829.0L900.2 827.5L889.0 826.2L878.2 825.1L867.9 824.1L858.5 823.5L850.1 823.0L842.8 822.9L836.6 823.1L831.2 823.5L826.4 824.2L822.0 824.9L817.6 825.8L813.2 826.7L808.4 827.5L803.2 828.5L797.5 829.6L791.8 830.9L786.2 832.2L780.9 833.4L776.2 834.5L772.2 835.5L769.2 836.2Z" fill="#fff" stroke="#777" stroke-width="0.7" stroke-linejoin="round"/>
<path d="M767.3 841.4L770.5 841.1L774.7 840.6L779.8 840.1L785.4 839.5L791.3 838.9L797.4 838.4L803.2 837.9L808.7 837.6L813.6 837.4L818.3 837.2L822.8 836.9L827.4 836.8L832.2 836.8L837.4 837.0L843.2 837.4L849.9 838.0L857.4 839.0L865.7 840.2L874.7 841.6L884.0 843.1L893.6 844.8L903.3 846.6L912.8 848.6L922.1 850.6L931.2 852.9L940.4 855.5L949.7 858.2L958.9 861.0L968.1 864.0L977.1 867.0L985.9 870.0L994.5 872.9L1003.0 875.9L1011.5 879.1L1019.9 882.4L1028.1 885.7L1036.0 888.9L1043.5 891.9L1050.5 894.7L1056.8 897.2L1062.6 899.3L1068.0 901.3L1072.9 903.1L1077.3 904.7L1081.3 906.1L1084.8 907.3L1087.7 908.4L1090.1 909.2L1090.1 909.2L1087.7 908.3L1084.8 907.2L1081.4 905.9L1077.4 904.4L1073.0 902.7L1068.1 900.8L1062.8 898.7L1057.1 896.4L1050.8 893.8L1043.9 890.9L1036.5 887.7L1028.6 884.4L1020.5 880.9L1012.1 877.5L1003.7 874.2L995.2 871.0L986.7 867.9L977.9 864.8L968.9 861.6L959.7 858.6L950.4 855.6L941.2 852.8L931.9 850.1L922.8 847.7L913.5 845.6L903.9 843.5L894.2 841.7L884.5 840.0L875.1 838.6L866.1 837.3L857.7 836.3L850.1 835.5L843.4 834.9L837.5 834.6L832.2 834.6L827.3 834.7L822.7 834.9L818.2 835.2L813.5 835.6L808.6 835.9L803.1 836.3L797.2 836.8L791.2 837.5L785.3 838.2L779.6 838.9L774.6 839.5L770.4 840.1L767.2 840.4Z" fill="#fff" stroke="#777" stroke-width="0.7" stroke-linejoin="round"/>
<path d="M750.7 841.3L754.3 841.3L759.1 841.3L764.9 841.3L771.2 841.2L778.0 841.3L784.9 841.3L791.8 841.5L798.2 841.7L804.4 842.0L810.6 842.4L816.8 842.8L823.2 843.2L829.6 843.8L836.1 844.5L842.9 845.3L849.8 846.3L857.1 847.4L864.6 848.6L872.3 849.9L880.1 851.3L888.1 852.9L896.0 854.6L903.9 856.5L911.7 858.7L919.4 861.2L927.2 864.0L934.9 867.1L942.7 870.4L950.5 873.7L958.3 877.0L966.1 880.2L973.9 883.2L981.8 885.9L990.0 888.7L998.3 891.4L1006.6 894.0L1014.6 896.6L1022.3 899.0L1029.5 901.3L1036.1 903.4L1042.3 905.3L1048.1 907.2L1053.6 909.0L1058.7 910.6L1063.3 912.1L1067.4 913.4L1070.8 914.5L1073.5 915.4L1073.5 915.4L1070.8 914.5L1067.4 913.3L1063.4 911.9L1058.8 910.4L1053.7 908.6L1048.3 906.7L1042.5 904.7L1036.4 902.6L1029.8 900.4L1022.6 898.0L1015.0 895.5L1007.0 892.8L998.8 890.0L990.5 887.2L982.4 884.3L974.5 881.4L966.8 878.4L959.0 875.2L951.3 871.8L943.6 868.3L935.8 865.0L928.0 861.8L920.3 858.8L912.5 856.2L904.6 854.0L896.6 852.0L888.6 850.2L880.7 848.6L872.8 847.2L865.0 845.9L857.5 844.8L850.2 843.8L843.2 842.9L836.4 842.2L829.8 841.6L823.3 841.2L817.0 840.8L810.7 840.5L804.5 840.3L798.3 840.1L791.8 839.9L785.0 839.9L778.0 840.0L771.2 840.1L764.8 840.2L759.1 840.3L754.3 840.4L750.7 840.5Z" fill="#fff" stroke="#777" stroke-width="0.7" stroke-linejoin="round"/>
<path d="M767.2 843.5L770.4 843.8L774.6 844.1L779.7 844.6L785.3 845.1L791.2 845.7L797.2 846.4L803.0 847.1L808.5 848.0L813.4 849.0L818.2 850.1L823.0 851.2L827.7 852.5L832.6 853.9L837.9 855.4L843.5 857.0L849.6 858.8L856.4 860.8L863.7 862.8L871.3 865.0L879.3 867.3L887.4 869.6L895.6 872.1L903.7 874.7L911.6 877.4L919.3 880.3L926.9 883.3L934.5 886.3L942.1 889.6L949.8 892.9L957.6 896.4L965.6 900.0L973.8 903.8L982.7 908.1L992.5 912.9L1002.8 918.0L1013.0 923.2L1022.8 928.2L1031.6 932.7L1039.0 936.4L1044.5 939.2L1044.5 939.2L1039.1 936.3L1031.8 932.3L1023.1 927.6L1013.4 922.4L1003.3 917.0L993.1 911.6L983.4 906.6L974.6 902.2L966.4 898.2L958.5 894.4L950.8 890.8L943.1 887.3L935.5 884.0L927.9 880.8L920.3 877.7L912.6 874.7L904.7 871.9L896.5 869.2L888.3 866.6L880.2 864.2L872.2 861.9L864.5 859.9L857.2 857.9L850.4 856.1L844.2 854.5L838.5 852.9L833.3 851.5L828.3 850.3L823.5 849.1L818.7 848.1L813.8 847.1L808.8 846.2L803.3 845.4L797.4 844.7L791.3 844.2L785.4 843.7L779.8 843.3L774.7 843.0L770.5 842.7L767.3 842.5Z" fill="#fff" stroke="#777" stroke-width="0.7" stroke-linejoin="round"/>
<path d="M752.6 845.6L755.3 846.3L759.0 847.2L763.4 848.2L768.2 849.4L773.3 850.7L778.4 852.0L783.2 853.2L787.6 854.4L791.7 855.5L795.7 856.5L799.5 857.6L803.3 858.7L807.1 859.7L810.9 860.8L814.7 862.0L818.5 863.2L822.3 864.4L826.0 865.6L829.6 866.8L833.3 868.0L837.0 869.2L840.9 870.6L845.0 872.0L849.4 873.6L854.1 875.3L859.1 877.0L864.2 878.9L869.5 880.8L874.9 882.8L880.2 885.0L885.6 887.3L890.8 889.7L896.1 892.3L901.5 895.3L906.9 898.4L912.3 901.6L917.7 904.8L922.9 908.0L927.8 911.0L932.4 913.9L936.9 916.6L941.3 919.5L945.6 922.3L949.7 925.0L953.4 927.5L956.8 929.7L959.6 931.6L961.8 933.0L961.8 933.0L959.6 931.5L956.9 929.5L953.7 927.1L950.0 924.5L946.0 921.7L941.8 918.7L937.5 915.7L933.1 912.8L928.6 909.8L923.7 906.6L918.6 903.3L913.4 899.9L908.0 896.5L902.6 893.2L897.2 890.2L892.0 887.3L886.7 884.7L881.4 882.3L876.0 880.0L870.6 877.9L865.3 875.8L860.2 873.9L855.3 872.1L850.6 870.3L846.2 868.7L842.1 867.2L838.2 865.8L834.4 864.6L830.7 863.4L827.0 862.2L823.3 861.2L819.4 860.1L815.5 859.0L811.7 858.0L807.9 857.0L804.0 856.0L800.2 855.1L796.3 854.1L792.3 853.2L788.2 852.3L783.7 851.2L778.8 850.1L773.7 849.0L768.6 847.9L763.7 846.9L759.3 845.9L755.6 845.1L752.9 844.5Z" fill="#fff" stroke="#777" stroke-width="0.7" stroke-linejoin="round"/>
<path d="M762.9 847.6L765.6 848.6L769.3 850.0L773.6 851.6L778.4 853.4L783.5 855.2L788.6 857.1L793.4 859.0L797.8 860.7L801.9 862.3L806.0 864.0L810.1 865.7L814.1 867.3L818.0 869.0L821.7 870.6L825.2 872.2L828.6 873.6L831.6 874.9L834.2 876.1L836.6 877.1L838.9 878.2L841.1 879.3L843.5 880.5L846.2 882.0L849.2 883.7L852.6 885.7L856.3 888.0L860.3 890.4L864.3 893.0L868.5 895.6L872.6 898.4L876.6 901.1L880.3 903.9L884.0 906.8L887.7 909.8L891.4 913.0L895.0 916.2L898.4 919.4L901.7 922.5L904.8 925.5L907.6 928.2L910.1 930.8L912.5 933.4L914.7 935.9L916.7 938.3L918.5 940.5L920.1 942.5L921.4 944.1L922.4 945.4L922.4 945.4L921.4 944.1L920.2 942.4L918.7 940.3L917.0 938.1L915.1 935.6L913.0 932.9L910.8 930.2L908.3 927.5L905.6 924.6L902.7 921.6L899.5 918.3L896.1 915.0L892.6 911.6L889.0 908.3L885.4 905.1L881.8 902.1L878.0 899.1L874.1 896.2L870.0 893.3L865.9 890.5L861.9 887.9L858.0 885.3L854.2 883.0L850.8 880.9L847.8 879.1L845.2 877.5L842.7 876.2L840.4 875.0L838.1 873.9L835.7 872.8L833.0 871.6L830.0 870.3L826.7 868.8L823.0 867.4L819.2 865.9L815.3 864.4L811.2 862.9L807.1 861.4L802.9 859.9L798.7 858.4L794.2 856.8L789.3 855.1L784.1 853.4L779.0 851.7L774.1 850.2L769.7 848.7L766.0 847.5L763.3 846.6Z" fill="#fff" stroke="#777" stroke-width="0.7" stroke-linejoin="round"/>
<path d="M1100.0 751.9C1106.2 752.7 1119.9 753.1 1131.0 756.0C1142.0 758.9 1147.4 761.9 1155.9 766.4C1163.8 770.6 1170.0 776.0 1173.5 778.4" fill="none" stroke="#777" stroke-width="2.1"/>
<path d="M1100.0 751.9C1106.2 752.7 1119.9 753.1 1131.0 756.0C1142.0 758.9 1147.4 761.9 1155.9 766.4C1163.8 770.6 1170.0 776.0 1173.5 778.4" fill="none" stroke="#fff" stroke-width="1.2"/>
<path d="M1100.0 802.5L1104.8 802.8L1111.4 803.2L1119.2 803.7L1127.8 804.3L1136.8 805.0L1145.7 805.8L1154.2 806.7L1161.9 807.7L1168.9 808.8L1175.9 810.1L1182.8 811.6L1189.6 813.2L1196.1 814.8L1202.3 816.4L1208.1 818.0L1213.5 819.6L1218.5 821.0L1223.1 822.5L1227.3 824.0L1231.2 825.5L1234.8 827.0L1238.3 828.4L1241.5 829.9L1244.7 831.4L1247.6 832.9L1250.4 834.5L1253.1 836.2L1255.5 837.9L1257.7 839.5L1259.6 840.9L1261.2 842.1L1262.5 843.0L1262.5 843.0L1261.2 842.0L1259.7 840.8L1257.8 839.3L1255.7 837.6L1253.4 835.8L1250.8 834.0L1248.0 832.2L1245.1 830.5L1242.0 828.9L1238.8 827.3L1235.4 825.7L1231.8 824.1L1227.9 822.4L1223.7 820.8L1219.1 819.2L1214.1 817.5L1208.7 815.8L1202.9 814.1L1196.7 812.3L1190.2 810.5L1183.5 808.8L1176.5 807.2L1169.5 805.7L1162.3 804.5L1154.6 803.7L1145.9 803.1L1136.9 802.6L1127.9 802.3L1119.2 802.0L1111.4 801.8L1104.9 801.7L1100.0 801.5Z" fill="#fff" stroke="#777" stroke-width="0.7" stroke-linejoin="round"/>
<path d="M1100.0 845.4C1104.1 847.1 1112.4 849.6 1120.7 853.7C1129.0 857.9 1134.6 861.9 1141.4 866.1C1147.1 869.7 1152.2 873.3 1154.8 875.0" fill="none" stroke="#777" stroke-width="2.1"/>
<path d="M1100.0 845.4C1104.1 847.1 1112.4 849.6 1120.7 853.7C1129.0 857.9 1134.6 861.9 1141.4 866.1C1147.1 869.7 1152.2 873.3 1154.8 875.0" fill="none" stroke="#fff" stroke-width="1.2"/>
<path d="M1100.0 874.4C1108.3 877.3 1124.8 883.1 1141.4 888.9C1157.9 894.7 1169.7 898.9 1182.8 903.4C1192.7 906.8 1201.8 909.7 1206.6 911.3" fill="none" stroke="#777" stroke-width="1.9"/>
<path d="M1100.0 874.4C1108.3 877.3 1124.8 883.1 1141.4 888.9C1157.9 894.7 1169.7 898.9 1182.8 903.4C1192.7 906.8 1201.8 909.7 1206.6 911.3" fill="none" stroke="#fff" stroke-width="1.0"/>
<path d="M467.5 583.0C471.4 586.2 481.0 590.1 486.9 598.8C493.7 608.7 497.0 617.8 501.4 632.7C506.3 649.2 509.2 671.5 511.1 681.2" fill="none" stroke="#888" stroke-width="1.7"/>
<path d="M467.5 583.0C471.4 586.2 481.0 590.1 486.9 598.8C493.7 608.7 497.0 617.8 501.4 632.7C506.3 649.2 509.2 671.5 511.1 681.2" fill="none" stroke="#fff" stroke-width="0.8"/>
<path d="M422.7 611.4C428.7 613.7 442.3 614.5 453.0 623.0C464.3 632.1 470.2 641.9 479.6 656.9C489.1 671.9 496.1 689.9 500.2 698.1" fill="none" stroke="#888" stroke-width="1.7"/>
<path d="M422.7 611.4C428.7 613.7 442.3 614.5 453.0 623.0C464.3 632.1 470.2 641.9 479.6 656.9C489.1 671.9 496.1 689.9 500.2 698.1" fill="none" stroke="#fff" stroke-width="0.8"/>
<path d="M387.5 648.4C394.3 649.2 408.5 646.0 421.5 652.1C435.5 658.6 444.7 668.6 457.8 681.2C470.9 693.8 481.1 708.3 486.9 715.1" fill="none" stroke="#888" stroke-width="1.7"/>
<path d="M387.5 648.4C394.3 649.2 408.5 646.0 421.5 652.1C435.5 658.6 444.7 668.6 457.8 681.2C470.9 693.8 481.1 708.3 486.9 715.1" fill="none" stroke="#fff" stroke-width="0.8"/>
<path d="M376.6 688.4C383.2 687.5 395.7 680.9 409.3 683.6C424.1 686.5 435.3 693.8 450.5 703.0C465.8 712.2 478.6 724.3 485.7 729.6" fill="none" stroke="#888" stroke-width="1.7"/>
<path d="M376.6 688.4C383.2 687.5 395.7 680.9 409.3 683.6C424.1 686.5 435.3 693.8 450.5 703.0C465.8 712.2 478.6 724.3 485.7 729.6" fill="none" stroke="#fff" stroke-width="0.8"/>
<path d="M374.2 706.6C381.2 705.6 394.7 699.2 409.3 701.7C424.6 704.4 435.3 712.2 450.5 719.9C465.8 727.7 478.6 736.4 485.7 740.5" fill="none" stroke="#888" stroke-width="1.7"/>
<path d="M374.2 706.6C381.2 705.6 394.7 699.2 409.3 701.7C424.6 704.4 435.3 712.2 450.5 719.9C465.8 727.7 478.6 736.4 485.7 740.5" fill="none" stroke="#fff" stroke-width="0.8"/>
<path d="M409.3 742.9C414.2 741.0 422.7 734.7 433.6 733.2C444.7 731.8 454.4 733.5 465.1 735.7C474.7 737.6 482.5 742.5 486.9 744.2" fill="none" stroke="#888" stroke-width="1.7"/>
<path d="M409.3 742.9C414.2 741.0 422.7 734.7 433.6 733.2C444.7 731.8 454.4 733.5 465.1 735.7C474.7 737.6 482.5 742.5 486.9 744.2" fill="none" stroke="#fff" stroke-width="0.8"/>
<path d="M414.2 746.6C419.0 745.1 427.8 739.3 438.4 739.3C449.6 739.3 460.0 743.2 469.9 746.6C478.1 749.4 484.5 754.3 488.1 756.3" fill="none" stroke="#888" stroke-width="1.7"/>
<path d="M414.2 746.6C419.0 745.1 427.8 739.3 438.4 739.3C449.6 739.3 460.0 743.2 469.9 746.6C478.1 749.4 484.5 754.3 488.1 756.3" fill="none" stroke="#fff" stroke-width="0.8"/>
<path d="M391.2 766.0C397.2 763.3 407.7 754.4 421.5 752.6C436.2 750.7 451.5 753.8 465.1 756.3C475.7 758.2 484.5 763.1 489.3 764.7" fill="none" stroke="#888" stroke-width="1.7"/>
<path d="M391.2 766.0C397.2 763.3 407.7 754.4 421.5 752.6C436.2 750.7 451.5 753.8 465.1 756.3C475.7 758.2 484.5 763.1 489.3 764.7" fill="none" stroke="#fff" stroke-width="0.8"/>
<path d="M386.3 792.6C390.9 789.0 397.6 778.0 409.3 774.4C423.6 770.1 441.3 770.3 457.8 770.8C472.3 771.2 484.9 775.7 491.7 776.9" fill="none" stroke="#888" stroke-width="1.7"/>
<path d="M386.3 792.6C390.9 789.0 397.6 778.0 409.3 774.4C423.6 770.1 441.3 770.3 457.8 770.8C472.3 771.2 484.9 775.7 491.7 776.9" fill="none" stroke="#fff" stroke-width="0.8"/>
<path d="M446.9 808.4C450.1 805.2 456.1 797.0 462.7 792.6C468.9 788.4 473.6 788.0 479.6 786.6C485.1 785.2 490.3 785.6 492.9 785.3" fill="none" stroke="#888" stroke-width="1.7"/>
<path d="M446.9 808.4C450.1 805.2 456.1 797.0 462.7 792.6C468.9 788.4 473.6 788.0 479.6 786.6C485.1 785.2 490.3 785.6 492.9 785.3" fill="none" stroke="#fff" stroke-width="0.8"/>
<path d="M437.2 839.9C440.4 836.2 445.4 827.5 453.0 821.7C460.5 815.9 466.5 813.9 474.8 810.8C482.6 807.8 490.3 806.9 494.2 805.9" fill="none" stroke="#888" stroke-width="1.7"/>
<path d="M437.2 839.9C440.4 836.2 445.4 827.5 453.0 821.7C460.5 815.9 466.5 813.9 474.8 810.8C482.6 807.8 490.3 806.9 494.2 805.9" fill="none" stroke="#fff" stroke-width="0.8"/>
<path d="M453.0 867.7C455.4 863.9 459.3 854.6 465.1 848.3C470.9 842.0 474.8 840.3 482.0 836.2C489.3 832.1 497.5 829.4 501.4 827.7" fill="none" stroke="#888" stroke-width="1.7"/>
<path d="M453.0 867.7C455.4 863.9 459.3 854.6 465.1 848.3C470.9 842.0 474.8 840.3 482.0 836.2C489.3 832.1 497.5 829.4 501.4 827.7" fill="none" stroke="#fff" stroke-width="0.8"/>
<path d="M839.4 925.0C840.6 929.1 843.9 938.7 845.6 945.7C847.1 951.7 847.6 957.3 848.1 960.2" fill="none" stroke="#777" stroke-width="1.9"/>
<path d="M839.4 925.0C840.6 929.1 843.9 938.7 845.6 945.7C847.1 951.7 847.6 957.3 848.1 960.2" fill="none" stroke="#fff" stroke-width="1.0"/>
<path d="M901.5 925.0C904.4 927.5 911.8 933.3 916.0 937.4C919.0 940.5 920.9 944.0 922.2 945.7" fill="none" stroke="#777" stroke-width="1.9"/>
<path d="M901.5 925.0C904.4 927.5 911.8 933.3 916.0 937.4C919.0 940.5 920.9 944.0 922.2 945.7" fill="none" stroke="#fff" stroke-width="1.0"/>
<path d="M742.5 790.6L744.8 788.6L748.0 786.2L751.7 783.3L755.9 779.9L760.2 776.2L764.5 772.2L768.6 767.9L772.2 763.3L775.3 758.3L778.3 752.8L781.1 746.8L783.7 740.7L786.3 734.5L788.7 728.5L791.1 722.7L793.4 717.4L795.6 712.5L797.6 707.7L799.6 703.1L801.6 698.6L803.5 694.4L805.4 690.2L807.4 686.2L809.4 682.3L811.5 678.4L813.6 674.6L815.7 671.0L817.9 667.4L820.1 664.0L822.2 660.8L824.3 657.8L826.4 655.1L828.3 652.6L830.2 650.5L832.1 648.5L833.9 646.7L835.7 645.1L837.7 643.5L839.7 641.9L842.0 640.3L844.3 638.7L846.6 637.1L849.0 635.6L851.5 634.2L854.1 632.8L856.9 631.5L859.8 630.3L863.0 629.2L866.7 628.1L871.0 627.2L875.7 626.2L880.5 625.4L885.0 624.7L889.2 624.0L892.7 623.4L895.3 623.0L895.3 623.0L892.7 623.3L889.2 623.7L885.0 624.1L880.3 624.6L875.5 625.2L870.8 625.9L866.4 626.7L862.6 627.6L859.2 628.6L856.1 629.7L853.2 630.9L850.5 632.2L847.8 633.6L845.3 635.0L842.9 636.5L840.4 638.1L838.1 639.6L835.9 641.2L833.8 642.8L831.8 644.4L829.8 646.2L827.8 648.2L825.8 650.4L823.6 652.9L821.4 655.7L819.1 658.6L816.8 661.9L814.5 665.2L812.2 668.8L809.9 672.5L807.6 676.3L805.4 680.1L803.3 684.1L801.2 688.2L799.2 692.3L797.1 696.6L795.1 701.0L793.0 705.6L790.9 710.4L788.6 715.4L786.3 720.8L784.1 726.7L781.9 732.8L779.6 739.1L777.3 745.2L774.8 751.1L772.2 756.6L769.4 761.5L766.2 766.0L762.5 770.3L758.5 774.4L754.4 778.2L750.4 781.7L746.8 784.7L743.7 787.3L741.5 789.4Z" fill="#fff" stroke="#777" stroke-width="0.7" stroke-linejoin="round"/>
<path d="M775.8 815.6L777.3 813.8L779.2 811.6L781.4 808.9L784.0 805.9L786.7 802.5L789.5 798.8L792.4 794.9L795.2 790.9L798.0 786.4L801.0 781.4L804.0 776.1L807.1 770.6L810.2 765.0L813.3 759.7L816.2 754.7L819.0 750.2L821.6 746.3L824.1 742.8L826.5 739.5L828.9 736.4L831.2 733.3L833.6 730.2L836.0 727.0L838.5 723.6L840.9 720.0L843.3 716.3L845.7 712.5L848.1 708.7L850.4 704.9L852.7 701.1L855.1 697.4L857.4 693.9L859.9 690.3L862.3 686.8L864.8 683.3L867.3 679.8L869.8 676.4L872.3 673.1L874.8 670.0L877.3 667.0L879.7 664.1L882.1 661.4L884.4 658.9L886.7 656.4L889.1 654.0L891.6 651.7L894.2 649.2L897.0 646.7L899.9 644.2L902.9 641.7L905.9 639.2L909.1 636.8L912.4 634.2L915.8 631.7L919.6 629.0L923.6 626.2L928.0 623.2L933.0 619.9L938.2 616.5L943.6 613.0L949.0 609.7L954.2 606.5L959.2 603.6L963.6 601.2L967.5 599.1L971.1 597.4L974.4 596.0L977.5 594.7L980.6 593.6L983.6 592.6L986.8 591.7L990.2 590.7L993.9 589.7L998.0 588.8L1002.3 587.9L1006.6 587.2L1010.6 586.5L1014.3 585.9L1017.4 585.4L1019.7 585.0L1019.7 585.0L1017.4 585.3L1014.3 585.7L1010.6 586.1L1006.5 586.6L1002.2 587.1L997.8 587.8L993.7 588.5L989.8 589.3L986.4 590.2L983.1 591.0L980.0 591.9L976.9 592.9L973.6 594.0L970.2 595.3L966.5 596.9L962.4 598.8L957.8 601.2L952.7 603.9L947.4 606.9L941.8 610.1L936.3 613.3L930.9 616.6L925.8 619.7L921.2 622.6L917.1 625.3L913.2 627.9L909.5 630.4L906.1 632.9L902.8 635.3L899.7 637.7L896.6 640.2L893.6 642.7L890.6 645.2L887.9 647.6L885.2 650.0L882.7 652.4L880.2 654.9L877.8 657.5L875.3 660.2L872.7 663.0L870.1 666.1L867.5 669.3L864.8 672.6L862.2 676.0L859.6 679.5L857.0 683.0L854.5 686.6L852.0 690.1L849.5 693.8L847.0 697.5L844.7 701.3L842.3 705.1L839.9 708.9L837.7 712.7L835.4 716.4L833.1 720.0L830.9 723.4L828.7 726.7L826.5 729.8L824.2 732.9L821.9 736.2L819.6 739.7L817.2 743.4L814.6 747.6L812.0 752.3L809.2 757.4L806.3 762.9L803.5 768.6L800.6 774.2L797.7 779.6L795.0 784.7L792.4 789.1L789.9 793.2L787.2 797.1L784.5 800.8L782.0 804.3L779.6 807.4L777.4 810.2L775.6 812.5L774.2 814.4Z" fill="#fff" stroke="#777" stroke-width="0.7" stroke-linejoin="round"/>
<path d="M752.5 800.5L754.2 798.7L756.5 796.5L759.2 793.8L762.2 790.8L765.4 787.5L768.6 784.0L771.7 780.4L774.6 776.8L777.3 773.0L780.0 768.9L782.7 764.6L785.3 760.2L787.9 755.8L790.5 751.4L793.1 747.2L795.7 743.2L798.3 739.3L800.8 735.4L803.3 731.5L805.7 727.7L808.2 724.0L810.7 720.4L813.2 716.9L815.6 713.6L818.1 710.3L820.6 707.2L823.1 704.1L825.6 701.2L828.1 698.4L830.6 695.6L833.1 693.0L835.5 690.5L838.0 688.0L840.5 685.7L843.0 683.5L845.4 681.4L847.9 679.4L850.4 677.5L852.8 675.7L855.3 674.0L857.8 672.4L860.2 670.9L862.5 669.5L864.9 668.3L867.3 667.1L869.8 666.0L872.4 665.1L875.2 664.2L878.2 663.5L881.7 662.9L885.4 662.4L889.1 662.0L892.7 661.6L896.0 661.4L898.7 661.1L900.7 660.9L900.7 660.9L898.7 661.0L895.9 661.1L892.7 661.2L889.1 661.4L885.3 661.6L881.6 661.9L878.0 662.4L874.8 663.0L872.0 663.7L869.3 664.6L866.7 665.6L864.1 666.6L861.6 667.8L859.1 669.1L856.6 670.5L854.1 672.0L851.5 673.7L848.9 675.4L846.3 677.3L843.7 679.2L841.1 681.3L838.5 683.5L835.9 685.7L833.3 688.1L830.7 690.6L828.0 693.2L825.4 695.9L822.8 698.7L820.2 701.6L817.6 704.7L815.0 707.8L812.4 711.0L809.8 714.4L807.2 717.9L804.6 721.5L802.0 725.2L799.5 729.0L796.9 732.9L794.4 736.8L791.9 740.8L789.4 745.0L787.0 749.4L784.6 753.9L782.2 758.5L779.7 762.9L777.3 767.3L774.9 771.4L772.4 775.2L769.7 778.8L766.8 782.5L763.8 786.1L760.8 789.4L757.9 792.6L755.3 795.4L753.1 797.7L751.5 799.5Z" fill="#fff" stroke="#777" stroke-width="0.7" stroke-linejoin="round"/>
<path d="M775.4 764.0L778.4 762.9L782.0 761.7L786.4 760.3L791.5 758.6L797.1 756.5L803.4 754.1L810.3 751.1L817.7 747.7L826.1 743.4L835.8 738.3L846.4 732.5L857.5 726.4L868.5 720.3L879.0 714.4L888.7 709.1L897.0 704.5L903.9 700.7L909.6 697.4L914.6 694.6L919.0 692.0L923.2 689.5L927.5 687.0L932.2 684.3L937.5 681.3L943.4 677.9L949.7 674.3L956.1 670.6L962.8 666.8L969.4 663.0L976.1 659.3L982.7 655.7L989.1 652.3L995.4 648.9L1001.7 645.7L1007.9 642.5L1014.1 639.4L1020.3 636.3L1026.4 633.4L1032.6 630.6L1038.8 628.0L1045.1 625.4L1051.6 622.9L1058.1 620.5L1064.6 618.3L1071.0 616.1L1077.3 614.1L1083.2 612.3L1088.8 610.7L1094.1 609.3L1099.1 608.0L1103.9 607.0L1108.5 606.1L1112.8 605.3L1117.0 604.6L1121.0 604.0L1124.9 603.4L1128.6 602.9L1132.2 602.5L1135.7 602.2L1139.0 601.9L1142.0 601.8L1144.6 601.6L1146.9 601.5L1148.6 601.4L1148.6 601.4L1146.8 601.4L1144.6 601.5L1142.0 601.5L1139.0 601.5L1135.7 601.6L1132.2 601.8L1128.5 602.0L1124.7 602.4L1120.9 602.8L1116.8 603.3L1112.6 603.8L1108.2 604.4L1103.5 605.2L1098.7 606.0L1093.5 607.1L1088.2 608.3L1082.5 609.8L1076.5 611.4L1070.1 613.2L1063.6 615.1L1057.0 617.2L1050.3 619.3L1043.7 621.6L1037.2 624.0L1030.9 626.5L1024.5 629.2L1018.2 631.9L1011.9 634.8L1005.6 637.8L999.3 640.8L992.9 644.0L986.5 647.1L979.9 650.5L973.2 654.0L966.4 657.6L959.6 661.2L952.9 664.9L946.4 668.5L940.1 672.0L934.1 675.3L928.7 678.3L924.0 680.9L919.7 683.4L915.4 685.8L911.0 688.4L906.0 691.2L900.3 694.5L893.6 698.5L885.4 703.4L875.9 709.1L865.6 715.3L854.8 721.8L844.0 728.3L833.6 734.4L824.1 739.8L815.9 744.3L808.8 748.0L802.2 751.1L796.1 753.8L790.5 756.0L785.6 757.9L781.3 759.5L777.6 760.8L774.6 762.0Z" fill="#fff" stroke="#777" stroke-width="0.7" stroke-linejoin="round"/>
<path d="M848.3 737.5L854.7 735.1L863.2 731.8L873.4 728.0L884.6 723.7L896.4 719.2L908.3 714.6L919.6 710.2L929.9 706.1L939.5 702.2L949.3 698.2L958.9 694.1L968.4 690.0L977.4 686.0L985.9 682.2L993.9 678.6L1001.1 675.5L1007.3 672.8L1012.6 670.5L1017.1 668.5L1021.2 666.8L1025.2 665.1L1029.2 663.6L1033.7 662.0L1038.7 660.3L1044.4 658.4L1050.3 656.6L1056.5 654.8L1062.8 653.0L1069.3 651.2L1075.9 649.5L1082.4 647.9L1088.9 646.4L1095.4 644.9L1102.0 643.5L1108.7 642.2L1115.5 640.9L1122.2 639.7L1128.8 638.6L1135.2 637.7L1141.5 636.9L1147.8 636.2L1154.4 635.7L1161.1 635.3L1167.5 635.1L1173.6 634.9L1179.0 634.8L1183.5 634.6L1187.0 634.5L1187.0 634.5L1183.5 634.5L1179.0 634.4L1173.6 634.4L1167.5 634.3L1161.0 634.3L1154.4 634.5L1147.7 634.7L1141.3 635.1L1135.0 635.8L1128.5 636.5L1121.8 637.4L1115.0 638.3L1108.2 639.4L1101.4 640.5L1094.7 641.8L1088.1 643.0L1081.6 644.4L1075.0 645.8L1068.4 647.3L1061.8 649.0L1055.3 650.6L1049.1 652.3L1043.0 654.0L1037.3 655.7L1032.1 657.4L1027.6 658.9L1023.4 660.5L1019.3 662.0L1015.1 663.7L1010.5 665.7L1005.2 667.9L998.9 670.5L991.7 673.5L983.7 677.0L975.1 680.8L966.0 684.7L956.7 689.0L947.2 693.3L937.6 697.7L928.1 701.9L918.0 706.3L906.8 711.1L895.2 716.0L883.5 720.9L872.4 725.5L862.4 729.7L854.0 733.3L847.7 735.9Z" fill="#fff" stroke="#777" stroke-width="0.7" stroke-linejoin="round"/>
<path d="M745.2 757.5L748.6 755.8L753.2 753.6L758.7 750.9L764.8 747.9L771.0 744.8L777.2 741.8L782.9 738.9L787.8 736.4L791.9 734.2L795.7 732.0L799.2 729.9L802.4 727.9L805.5 725.9L808.5 724.1L811.6 722.2L814.8 720.5L818.1 718.7L821.4 717.0L824.8 715.3L828.1 713.7L831.4 712.1L834.7 710.7L838.1 709.4L841.4 708.2L844.7 707.1L848.1 706.0L851.4 705.1L854.8 704.3L858.1 703.6L861.4 703.0L864.7 702.5L868.0 702.2L871.5 702.0L875.1 702.1L878.9 702.4L882.6 702.7L886.2 703.1L889.3 703.5L892.0 703.8L894.0 704.0L894.0 704.0L892.0 703.7L889.4 703.2L886.2 702.7L882.7 702.1L879.0 701.6L875.2 701.1L871.5 700.9L868.0 700.8L864.6 701.0L861.2 701.4L857.8 701.8L854.4 702.4L850.9 703.1L847.5 703.9L844.1 704.8L840.6 705.8L837.2 707.0L833.8 708.2L830.3 709.6L826.9 711.0L823.5 712.6L820.1 714.2L816.6 715.8L813.2 717.5L809.9 719.3L806.7 721.1L803.6 723.0L800.5 724.9L797.3 726.9L793.9 728.9L790.2 731.2L786.2 733.6L781.5 736.3L775.9 739.4L770.0 742.7L763.8 746.1L757.9 749.3L752.6 752.3L748.1 754.7L744.8 756.5Z" fill="#fff" stroke="#777" stroke-width="0.7" stroke-linejoin="round"/>
<path d="M745.2 752.4L748.6 751.2L753.2 749.4L758.7 747.2L764.7 744.9L771.0 742.6L777.1 740.3L782.7 738.2L787.5 736.5L791.5 735.1L795.1 733.9L798.3 732.9L801.3 732.0L804.3 731.3L807.3 730.7L810.5 730.1L814.1 729.6L818.2 729.3L822.8 729.1L827.7 728.9L832.7 728.9L837.4 729.0L841.7 729.0L845.3 729.0L848.0 729.0L848.0 729.0L845.3 728.8L841.7 728.5L837.4 728.2L832.7 727.9L827.7 727.6L822.8 727.4L818.1 727.4L813.9 727.6L810.2 727.9L806.9 728.3L803.8 728.8L800.7 729.4L797.5 730.2L794.2 731.1L790.6 732.2L786.5 733.5L781.6 735.2L776.0 737.5L770.0 740.1L763.9 742.9L758.0 745.6L752.6 748.0L748.1 750.1L744.8 751.6Z" fill="#fff" stroke="#777" stroke-width="0.7" stroke-linejoin="round"/>
</g>
</svg>
</div>
<svg class="abs" style="left:373px;top:205px" width="220" height="130" viewBox="373 205 220 130">
<text id="v7" x="409.2" y="294.2" font-family="Liberation Serif,serif" font-size="29.3" fill="#000">This is V7</text>
<path d="M530.8 268V300.6" stroke="#222" stroke-width="1.6"/>
<path d="M403 262H537V307H403Z" fill="none" stroke="#2222cc" stroke-width="1.6" stroke-dasharray="10 10" stroke-dashoffset="-3"/>
<path d="M470 231V255" stroke="#2222cc" stroke-width="2"/>
<g fill="#2222c8"><circle cx="403" cy="262" r="8"/><circle cx="470" cy="262" r="8"/><circle cx="537" cy="262" r="8"/><circle cx="403" cy="284.5" r="8"/><circle cx="537" cy="284.5" r="8"/><circle cx="403" cy="307" r="8"/><circle cx="470" cy="307" r="8"/><circle cx="537" cy="307" r="8"/></g>
<circle cx="470" cy="222" r="8" fill="#0bff36" stroke="#2222c8" stroke-width="3.9"/>
</svg>

<div id="rightstrip"></div><div id="redge"></div>
<div id="layers">L<br>a<br>y<br>e<br>r<br>s</div>
<div class="abs" style="left:0;top:1324px;width:1788px;height:80px;background:linear-gradient(#72797a 20%,#676e6f)"></div>
<div class="abs" style="left:0;top:1390px;width:14px;height:14px;background:#16395e"></div>
<div class="abs" style="left:0;top:1376px;width:28px;height:28px;background:#6a7172;border-bottom-left-radius:14px"></div>
<!-- zoom -->
<div class="abs" style="left:78px;top:1342px;width:174px;height:44px;background:#fff;color:#000;font-size:22px;line-height:26px">
<span class="abs" style="right:61.5px;top:12px">61.0</span>
<div class="abs" style="left:121px;top:3px;width:1.5px;height:38px;background:#7a7a7a"></div>
<div class="abs" style="left:122px;top:22px;width:13px;height:1.5px;background:#7a7a7a"></div>
<svg class="abs" style="left:122px;top:4px" width="14" height="36"><path d="M2 15L7 5L12 15ZM2 23L7 33L12 23Z" fill="#000"/></svg>
<svg class="abs" style="left:144px;top:17px" width="20" height="11"><path d="M0 0H20L10 10.5Z" fill="#000"/></svg>
</div>
<!-- fill -->
<div class="abs" style="left:258px;top:1342px;width:104px;height:38px;background:#b2b2b2;border-radius:7px"></div>
<svg class="abs" style="left:266px;top:1343px" width="40" height="38" viewBox="266 1343 40 38">
<path d="M285 1353L271.5 1365L283 1376L296.5 1363.5Z" fill="#fbd982" stroke="#222" stroke-width="1.3" stroke-linejoin="round"/>
<path d="M289 1356Q299 1354 301 1360L302 1376Q300 1379 298.5 1376L297.5 1364Q296 1360 292 1360Z" fill="#e9c98a" stroke="#555" stroke-width="0.8"/>
<path d="M284.5 1363.5L283.5 1348Q286 1344.5 288 1348L288.5 1356" fill="none" stroke="#222" stroke-width="1.3"/>
<circle cx="284.5" cy="1363.5" r="1.8" fill="#fff" stroke="#222" stroke-width="1"/>
</svg>
<div class="abs" style="left:324px;top:1348px;width:28px;height:28px;background:#000"></div>
<!-- stroke -->
<div class="abs" style="left:374px;top:1342px;width:104px;height:38px;background:#b2b2b2;border-radius:7px"></div>
<div class="abs" style="left:386px;top:1346.5px;width:32px;height:30.5px;box-sizing:border-box;border:7px solid #7b7b7b;background:#b9b9b9"></div>
<div class="abs" style="left:440px;top:1348px;width:28px;height:28px;background:#a6a6a6"></div>
<!-- stroke width -->
<div class="inp" style="left:507px;top:1343px;width:105px;height:45px"><span style="left:41.5px;top:11px">0</span><div class="spin"><i class="u"></i><i class="d"></i></div></div>
<!-- style btns -->
<div class="abs sb" style="left:620px"><div class="abs" style="left:11px;top:25px;width:20px;height:2px;background:#000"></div></div>
<div class="abs sb" style="left:672px">
<svg class="abs" style="left:0;top:0" width="41" height="45" viewBox="673.5 1343.5 41 45"><path d="M678.3 1351.3H705.7V1378H686.5V1370H678.3Z" fill="#f5b829"/><path d="M678.3 1360.4H696V1378" fill="none" stroke="#fff" stroke-width="1.6"/><rect x="693" y="1357.4" width="6" height="6" rx="1" fill="#fff"/></svg></div>
<div class="abs sb" style="left:724px">
<svg class="abs" style="left:0;top:0" width="41" height="45" viewBox="725.5 1343.5 41 45"><rect x="733" y="1354.7" width="24" height="18.3" fill="#f5b829"/><path d="M733 1363.8H757" stroke="#fff" stroke-width="1.6"/><circle cx="757" cy="1363.8" r="3" fill="#fff"/></svg></div>
<!-- opacity -->
<div class="inp" style="left:822px;top:1343px;width:106px;height:45px;border-radius:5px"><span style="left:15px;top:12px">100</span><div class="spin"><i class="u"></i><i class="d"></i></div></div>
<div class="abs" style="left:782px;top:1342px;width:48px;height:48px;overflow:hidden;background:#444">
<div class="abs" style="left:0;top:0;width:24px;height:24px;background:linear-gradient(135deg,#2c2c2c,#5a5a5a)"></div>
<div class="abs" style="left:24px;top:0;width:24px;height:24px;background:linear-gradient(225deg,#fff 10%,#6e6e6e 95%)"></div>
<div class="abs" style="left:0;top:24px;width:24px;height:24px;background:linear-gradient(45deg,#000 10%,#484848)"></div>
<div class="abs" style="left:24px;top:24px;width:24px;height:24px;background:linear-gradient(135deg,#3a3a3a,#555)"></div>
</div>

<div id="pal">
<svg class="abs" style="left:10px;top:0" width="30" height="31" viewBox="0 0 30 31"><path d="M0.5 0.5L29.5 30.5M29.5 0.5L0.5 30.5" stroke="#d40000" stroke-width="1.6"/></svg>
<div class="sw" style="left:40px;width:30px;background:#000000"></div>
<div class="sw" style="left:70px;width:30px;background:#3f3f3f"></div>
<div class="sw" style="left:100px;width:30px;background:#7f7f7f"></div>
<div class="sw" style="left:130px;width:30px;background:#bfbfbf"></div>
<div class="sw" style="left:160px;width:30px;background:linear-gradient(#fff,#f2f2f2)"></div>
<div class="sw" style="left:190px;width:30px;background:#fb0007"></div>
<div class="sw" style="left:220px;width:30px;background:#fd8008"></div>
<div class="sw" style="left:250px;width:30px;background:#fffd38"></div>
<div class="sw" style="left:280px;width:30px;background:#74f93a"></div>
<div class="sw" style="left:310px;width:30px;background:#0af236"></div>
<div class="sw" style="left:340px;width:30px;background:#0af984"></div>
<div class="sw" style="left:370px;width:30px;background:#12fbfc"></div>
<div class="sw" style="left:400px;width:30px;background:#0080fb"></div>
<div class="sw" style="left:430px;width:30px;background:#0000f5"></div>
<div class="sw" style="left:460px;width:30px;background:#8000f6"></div>
<div class="sw" style="left:490px;width:30px;background:#fb02f7"></div>
<div class="sw" style="left:520px;width:30px;background:#fb027f"></div>
<div class="sw" style="left:550px;width:10px;background:#7f0000"></div>
</div>
</div>
</body></html>
